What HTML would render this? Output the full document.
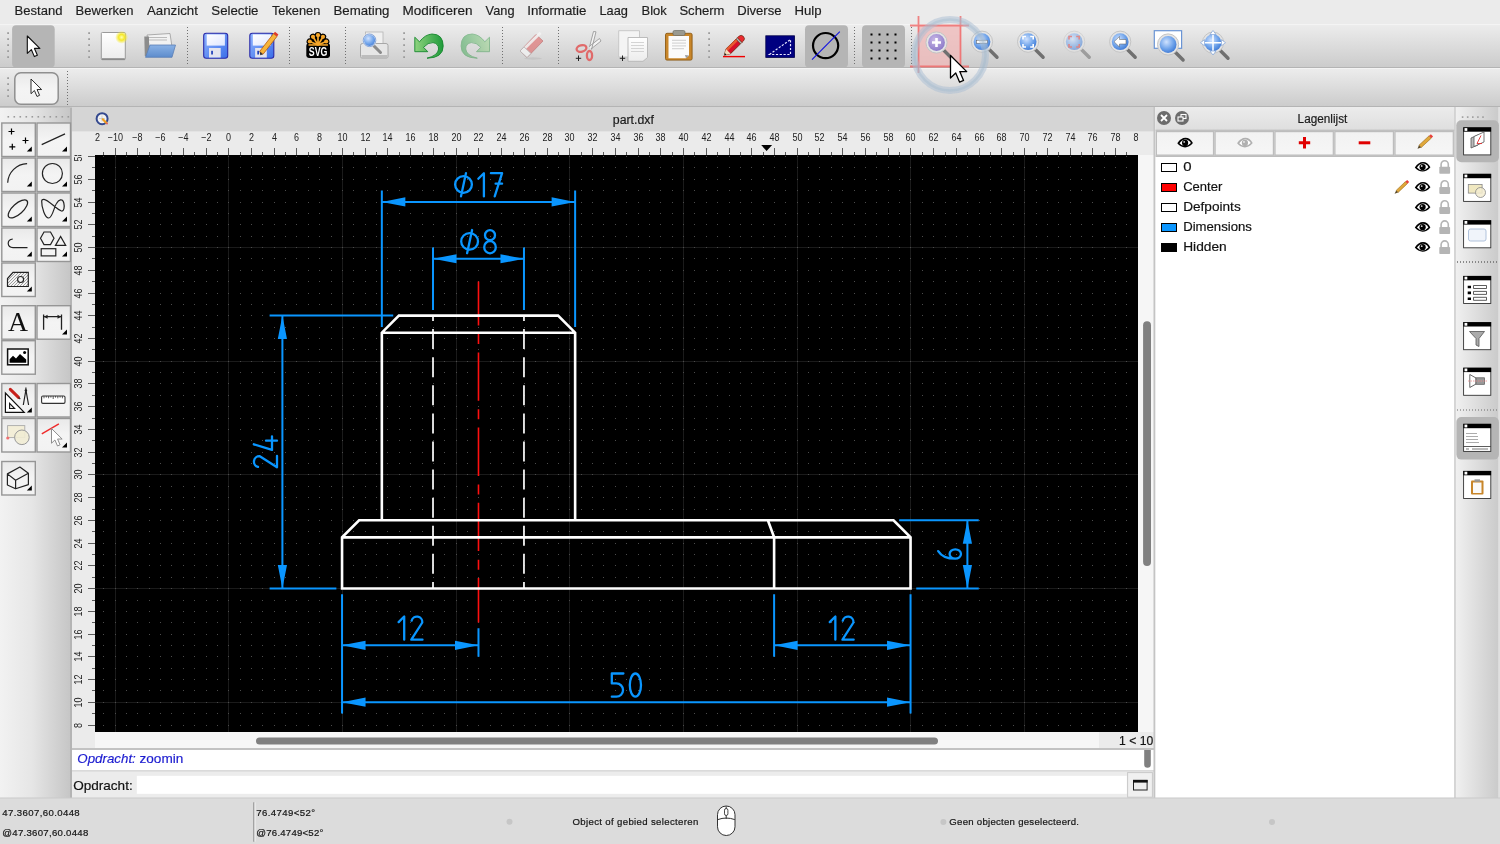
<!DOCTYPE html><html><head><meta charset="utf-8"><style>html,body{margin:0;padding:0;width:1500px;height:844px;overflow:hidden;background:#ececec}svg{display:block;font-family:"Liberation Sans",sans-serif;will-change:transform}</style></head><body>
<svg width="1500" height="844" viewBox="0 0 1500 844">
<defs>
<linearGradient id="tb" x1="0" y1="0" x2="0" y2="1"><stop offset="0" stop-color="#ededed"/><stop offset="1" stop-color="#cbcbcb"/></linearGradient>
<linearGradient id="pal" x1="0" y1="0" x2="1" y2="0"><stop offset="0" stop-color="#f2f2f2"/><stop offset="0.45" stop-color="#e6e6e6"/><stop offset="1" stop-color="#c6c6c6"/></linearGradient>
<linearGradient id="btn" x1="0" y1="0" x2="0" y2="1"><stop offset="0" stop-color="#e9e9e9"/><stop offset="0.5" stop-color="#f4f4f4"/><stop offset="1" stop-color="#f2f2f2"/></linearGradient>
<linearGradient id="lbtn" x1="0" y1="0" x2="0" y2="1"><stop offset="0" stop-color="#f2f2f2"/><stop offset="1" stop-color="#f6f6f6"/></linearGradient>
<linearGradient id="ltitle" x1="0" y1="0" x2="0" y2="1"><stop offset="0" stop-color="#ececec"/><stop offset="1" stop-color="#dedede"/></linearGradient>
<pattern id="dots" x="0" y="0" width="11.355" height="11.355" patternUnits="userSpaceOnUse"><rect x="0" y="0" width="1" height="1" fill="#5a5a5a"/></pattern>
<clipPath id="canvclip"><rect x="95" y="155" width="1043" height="577"/></clipPath>
<clipPath id="hrulclip"><rect x="95" y="131" width="1043" height="24"/></clipPath>
<clipPath id="vrulclip"><rect x="72" y="155" width="23" height="577"/></clipPath>
</defs>
<rect x="0" y="0" width="1500" height="844" fill="#ececec"/>
<rect x="0" y="0" width="1500" height="24" fill="#ebebeb"/>
<text x="14.60" y="15.30" font-size="13.2" fill="#1e1e1e" stroke="#1e1e1e" stroke-width="0.18" textLength="47.90" lengthAdjust="spacingAndGlyphs"  style="">Bestand</text>
<text x="75.60" y="15.30" font-size="13.2" fill="#1e1e1e" stroke="#1e1e1e" stroke-width="0.18" textLength="57.90" lengthAdjust="spacingAndGlyphs"  style="">Bewerken</text>
<text x="146.90" y="15.30" font-size="13.2" fill="#1e1e1e" stroke="#1e1e1e" stroke-width="0.18" textLength="51.00" lengthAdjust="spacingAndGlyphs"  style="">Aanzicht</text>
<text x="211.30" y="15.30" font-size="13.2" fill="#1e1e1e" stroke="#1e1e1e" stroke-width="0.18" textLength="47.20" lengthAdjust="spacingAndGlyphs"  style="">Selectie</text>
<text x="271.90" y="15.30" font-size="13.2" fill="#1e1e1e" stroke="#1e1e1e" stroke-width="0.18" textLength="48.50" lengthAdjust="spacingAndGlyphs"  style="">Tekenen</text>
<text x="333.50" y="15.30" font-size="13.2" fill="#1e1e1e" stroke="#1e1e1e" stroke-width="0.18" textLength="56.00" lengthAdjust="spacingAndGlyphs"  style="">Bemating</text>
<text x="402.50" y="15.30" font-size="13.2" fill="#1e1e1e" stroke="#1e1e1e" stroke-width="0.18" textLength="70.00" lengthAdjust="spacingAndGlyphs"  style="">Modificeren</text>
<text x="485.60" y="15.30" font-size="13.2" fill="#1e1e1e" stroke="#1e1e1e" stroke-width="0.18" textLength="28.90" lengthAdjust="spacingAndGlyphs"  style="">Vang</text>
<text x="527.20" y="15.30" font-size="13.2" fill="#1e1e1e" stroke="#1e1e1e" stroke-width="0.18" textLength="59.20" lengthAdjust="spacingAndGlyphs"  style="">Informatie</text>
<text x="599.50" y="15.30" font-size="13.2" fill="#1e1e1e" stroke="#1e1e1e" stroke-width="0.18" textLength="28.50" lengthAdjust="spacingAndGlyphs"  style="">Laag</text>
<text x="641.50" y="15.30" font-size="13.2" fill="#1e1e1e" stroke="#1e1e1e" stroke-width="0.18" textLength="25.20" lengthAdjust="spacingAndGlyphs"  style="">Blok</text>
<text x="679.40" y="15.30" font-size="13.2" fill="#1e1e1e" stroke="#1e1e1e" stroke-width="0.18" textLength="45.10" lengthAdjust="spacingAndGlyphs"  style="">Scherm</text>
<text x="737.20" y="15.30" font-size="13.2" fill="#1e1e1e" stroke="#1e1e1e" stroke-width="0.18" textLength="44.30" lengthAdjust="spacingAndGlyphs"  style="">Diverse</text>
<text x="794.50" y="15.30" font-size="13.2" fill="#1e1e1e" stroke="#1e1e1e" stroke-width="0.18" textLength="27.10" lengthAdjust="spacingAndGlyphs"  style="">Hulp</text>
<rect x="0" y="24" width="1500" height="44" fill="url(#tb)"/>
<rect x="0" y="24" width="1500" height="1" fill="#f4f4f4"/>
<rect x="0" y="67" width="1500" height="1" fill="#b4b4b4"/>
<rect x="0" y="68" width="1500" height="39" fill="url(#tb)"/>
<rect x="0" y="68" width="1500" height="1" fill="#f4f4f4"/>
<rect x="0" y="106" width="1500" height="1" fill="#b4b4b4"/>
<rect x="72" y="107" width="1082" height="24.6" fill="#d5d5d5"/>
<text x="612.80" y="124.00" font-size="12" fill="#1a1a1a" stroke="#1a1a1a" stroke-width="0.18" textLength="41.10" lengthAdjust="spacingAndGlyphs"  style="">part.dxf</text>
<rect x="72" y="131.6" width="1082" height="23.4" fill="#ebebeb"/>
<rect x="72" y="155" width="23" height="593" fill="#ebebeb"/>
<rect x="1138" y="155" width="16" height="593" fill="#f6f6f6"/>
<rect x="95" y="732" width="1059" height="16" fill="#f6f6f6"/>
<rect x="1099" y="732" width="55" height="16" fill="#ebebeb"/>
<rect x="256" y="737.4" width="682" height="7.2" rx="3.6" fill="#808080"/>
<rect x="1143.1" y="321.3" width="7.9" height="244.7" rx="3.9" fill="#808080"/>
<text x="1119.10" y="744.70" font-size="12" fill="#111" stroke="#111" stroke-width="0.18" textLength="34.10" lengthAdjust="spacingAndGlyphs"  style="">1 &lt; 10</text>
<g clip-path="url(#hrulclip)">
<path d="M80.5,152V155M92.5,148V155M103.5,152V155M115.5,148V155M126.5,152V155M137.5,148V155M149.5,152V155M160.5,148V155M171.5,152V155M183.5,148V155M194.5,152V155M206.5,148V155M217.5,152V155M228.5,148V155M240.5,152V155M251.5,148V155M262.5,152V155M274.5,148V155M285.5,152V155M296.5,148V155M308.5,152V155M319.5,148V155M331.5,152V155M342.5,148V155M353.5,152V155M365.5,148V155M376.5,152V155M387.5,148V155M399.5,152V155M410.5,148V155M422.5,152V155M433.5,148V155M444.5,152V155M456.5,148V155M467.5,152V155M478.5,148V155M490.5,152V155M501.5,148V155M513.5,152V155M524.5,148V155M535.5,152V155M547.5,148V155M558.5,152V155M569.5,148V155M581.5,152V155M592.5,148V155M603.5,152V155M615.5,148V155M626.5,152V155M638.5,148V155M649.5,152V155M660.5,148V155M672.5,152V155M683.5,148V155M694.5,152V155M706.5,148V155M717.5,152V155M729.5,148V155M740.5,152V155M751.5,148V155M763.5,152V155M774.5,148V155M785.5,152V155M797.5,148V155M808.5,152V155M819.5,148V155M831.5,152V155M842.5,148V155M854.5,152V155M865.5,148V155M876.5,152V155M888.5,148V155M899.5,152V155M910.5,148V155M922.5,152V155M933.5,148V155M945.5,152V155M956.5,148V155M967.5,152V155M979.5,148V155M990.5,152V155M1001.5,148V155M1013.5,152V155M1024.5,148V155M1036.5,152V155M1047.5,148V155M1058.5,152V155M1070.5,148V155M1081.5,152V155M1092.5,148V155M1104.5,152V155M1115.5,148V155M1126.5,152V155M1138.5,148V155M1149.5,152V155" stroke="#5c5c5c" stroke-width="1" fill="none"/>
<text x="92.50" y="140.8" font-size="10" fill="#222" text-anchor="middle" textLength="15.27" lengthAdjust="spacingAndGlyphs">−12</text>
<text x="115.50" y="140.8" font-size="10" fill="#222" text-anchor="middle" textLength="15.27" lengthAdjust="spacingAndGlyphs">−10</text>
<text x="137.50" y="140.8" font-size="10" fill="#222" text-anchor="middle" textLength="10.26" lengthAdjust="spacingAndGlyphs">−8</text>
<text x="160.50" y="140.8" font-size="10" fill="#222" text-anchor="middle" textLength="10.26" lengthAdjust="spacingAndGlyphs">−6</text>
<text x="183.50" y="140.8" font-size="10" fill="#222" text-anchor="middle" textLength="10.26" lengthAdjust="spacingAndGlyphs">−4</text>
<text x="206.50" y="140.8" font-size="10" fill="#222" text-anchor="middle" textLength="10.26" lengthAdjust="spacingAndGlyphs">−2</text>
<text x="228.50" y="140.8" font-size="10" fill="#222" text-anchor="middle" textLength="5.00" lengthAdjust="spacingAndGlyphs">0</text>
<text x="251.50" y="140.8" font-size="10" fill="#222" text-anchor="middle" textLength="5.00" lengthAdjust="spacingAndGlyphs">2</text>
<text x="274.50" y="140.8" font-size="10" fill="#222" text-anchor="middle" textLength="5.00" lengthAdjust="spacingAndGlyphs">4</text>
<text x="296.50" y="140.8" font-size="10" fill="#222" text-anchor="middle" textLength="5.00" lengthAdjust="spacingAndGlyphs">6</text>
<text x="319.50" y="140.8" font-size="10" fill="#222" text-anchor="middle" textLength="5.00" lengthAdjust="spacingAndGlyphs">8</text>
<text x="342.50" y="140.8" font-size="10" fill="#222" text-anchor="middle" textLength="10.01" lengthAdjust="spacingAndGlyphs">10</text>
<text x="365.50" y="140.8" font-size="10" fill="#222" text-anchor="middle" textLength="10.01" lengthAdjust="spacingAndGlyphs">12</text>
<text x="387.50" y="140.8" font-size="10" fill="#222" text-anchor="middle" textLength="10.01" lengthAdjust="spacingAndGlyphs">14</text>
<text x="410.50" y="140.8" font-size="10" fill="#222" text-anchor="middle" textLength="10.01" lengthAdjust="spacingAndGlyphs">16</text>
<text x="433.50" y="140.8" font-size="10" fill="#222" text-anchor="middle" textLength="10.01" lengthAdjust="spacingAndGlyphs">18</text>
<text x="456.50" y="140.8" font-size="10" fill="#222" text-anchor="middle" textLength="10.01" lengthAdjust="spacingAndGlyphs">20</text>
<text x="478.50" y="140.8" font-size="10" fill="#222" text-anchor="middle" textLength="10.01" lengthAdjust="spacingAndGlyphs">22</text>
<text x="501.50" y="140.8" font-size="10" fill="#222" text-anchor="middle" textLength="10.01" lengthAdjust="spacingAndGlyphs">24</text>
<text x="524.50" y="140.8" font-size="10" fill="#222" text-anchor="middle" textLength="10.01" lengthAdjust="spacingAndGlyphs">26</text>
<text x="547.50" y="140.8" font-size="10" fill="#222" text-anchor="middle" textLength="10.01" lengthAdjust="spacingAndGlyphs">28</text>
<text x="569.50" y="140.8" font-size="10" fill="#222" text-anchor="middle" textLength="10.01" lengthAdjust="spacingAndGlyphs">30</text>
<text x="592.50" y="140.8" font-size="10" fill="#222" text-anchor="middle" textLength="10.01" lengthAdjust="spacingAndGlyphs">32</text>
<text x="615.50" y="140.8" font-size="10" fill="#222" text-anchor="middle" textLength="10.01" lengthAdjust="spacingAndGlyphs">34</text>
<text x="638.50" y="140.8" font-size="10" fill="#222" text-anchor="middle" textLength="10.01" lengthAdjust="spacingAndGlyphs">36</text>
<text x="660.50" y="140.8" font-size="10" fill="#222" text-anchor="middle" textLength="10.01" lengthAdjust="spacingAndGlyphs">38</text>
<text x="683.50" y="140.8" font-size="10" fill="#222" text-anchor="middle" textLength="10.01" lengthAdjust="spacingAndGlyphs">40</text>
<text x="706.50" y="140.8" font-size="10" fill="#222" text-anchor="middle" textLength="10.01" lengthAdjust="spacingAndGlyphs">42</text>
<text x="729.50" y="140.8" font-size="10" fill="#222" text-anchor="middle" textLength="10.01" lengthAdjust="spacingAndGlyphs">44</text>
<text x="751.50" y="140.8" font-size="10" fill="#222" text-anchor="middle" textLength="10.01" lengthAdjust="spacingAndGlyphs">46</text>
<text x="774.50" y="140.8" font-size="10" fill="#222" text-anchor="middle" textLength="10.01" lengthAdjust="spacingAndGlyphs">48</text>
<text x="797.50" y="140.8" font-size="10" fill="#222" text-anchor="middle" textLength="10.01" lengthAdjust="spacingAndGlyphs">50</text>
<text x="819.50" y="140.8" font-size="10" fill="#222" text-anchor="middle" textLength="10.01" lengthAdjust="spacingAndGlyphs">52</text>
<text x="842.50" y="140.8" font-size="10" fill="#222" text-anchor="middle" textLength="10.01" lengthAdjust="spacingAndGlyphs">54</text>
<text x="865.50" y="140.8" font-size="10" fill="#222" text-anchor="middle" textLength="10.01" lengthAdjust="spacingAndGlyphs">56</text>
<text x="888.50" y="140.8" font-size="10" fill="#222" text-anchor="middle" textLength="10.01" lengthAdjust="spacingAndGlyphs">58</text>
<text x="910.50" y="140.8" font-size="10" fill="#222" text-anchor="middle" textLength="10.01" lengthAdjust="spacingAndGlyphs">60</text>
<text x="933.50" y="140.8" font-size="10" fill="#222" text-anchor="middle" textLength="10.01" lengthAdjust="spacingAndGlyphs">62</text>
<text x="956.50" y="140.8" font-size="10" fill="#222" text-anchor="middle" textLength="10.01" lengthAdjust="spacingAndGlyphs">64</text>
<text x="979.50" y="140.8" font-size="10" fill="#222" text-anchor="middle" textLength="10.01" lengthAdjust="spacingAndGlyphs">66</text>
<text x="1001.50" y="140.8" font-size="10" fill="#222" text-anchor="middle" textLength="10.01" lengthAdjust="spacingAndGlyphs">68</text>
<text x="1024.50" y="140.8" font-size="10" fill="#222" text-anchor="middle" textLength="10.01" lengthAdjust="spacingAndGlyphs">70</text>
<text x="1047.50" y="140.8" font-size="10" fill="#222" text-anchor="middle" textLength="10.01" lengthAdjust="spacingAndGlyphs">72</text>
<text x="1070.50" y="140.8" font-size="10" fill="#222" text-anchor="middle" textLength="10.01" lengthAdjust="spacingAndGlyphs">74</text>
<text x="1092.50" y="140.8" font-size="10" fill="#222" text-anchor="middle" textLength="10.01" lengthAdjust="spacingAndGlyphs">76</text>
<text x="1115.50" y="140.8" font-size="10" fill="#222" text-anchor="middle" textLength="10.01" lengthAdjust="spacingAndGlyphs">78</text>
<text x="1138.50" y="140.8" font-size="10" fill="#222" text-anchor="middle" textLength="10.01" lengthAdjust="spacingAndGlyphs">80</text>
<path d="M761.2,145.1L772.1,145.1L766.6,150.9Z" fill="#000"/>
</g>
<g clip-path="url(#vrulclip)">
<path d="M88,747.5H95M92,736.5H95M88,725.5H95M92,713.5H95M88,702.5H95M92,690.5H95M88,679.5H95M92,668.5H95M88,656.5H95M92,645.5H95M88,634.5H95M92,622.5H95M88,611.5H95M92,600.5H95M88,588.5H95M92,577.5H95M88,565.5H95M92,554.5H95M88,543.5H95M92,531.5H95M88,520.5H95M92,509.5H95M88,497.5H95M92,486.5H95M88,474.5H95M92,463.5H95M88,452.5H95M92,440.5H95M88,429.5H95M92,418.5H95M88,406.5H95M92,395.5H95M88,383.5H95M92,372.5H95M88,361.5H95M92,349.5H95M88,338.5H95M92,327.5H95M88,315.5H95M92,304.5H95M88,293.5H95M92,281.5H95M88,270.5H95M92,258.5H95M88,247.5H95M92,236.5H95M88,224.5H95M92,213.5H95M88,202.5H95M92,190.5H95M88,179.5H95M92,167.5H95M88,156.5H95M92,145.5H95" stroke="#5c5c5c" stroke-width="1" fill="none"/>
<text transform="translate(81.7,747.50) rotate(-90)" x="0" y="0" font-size="10" fill="#222" text-anchor="middle" textLength="5.00" lengthAdjust="spacingAndGlyphs">6</text>
<text transform="translate(81.7,725.50) rotate(-90)" x="0" y="0" font-size="10" fill="#222" text-anchor="middle" textLength="5.00" lengthAdjust="spacingAndGlyphs">8</text>
<text transform="translate(81.7,702.50) rotate(-90)" x="0" y="0" font-size="10" fill="#222" text-anchor="middle" textLength="10.01" lengthAdjust="spacingAndGlyphs">10</text>
<text transform="translate(81.7,679.50) rotate(-90)" x="0" y="0" font-size="10" fill="#222" text-anchor="middle" textLength="10.01" lengthAdjust="spacingAndGlyphs">12</text>
<text transform="translate(81.7,656.50) rotate(-90)" x="0" y="0" font-size="10" fill="#222" text-anchor="middle" textLength="10.01" lengthAdjust="spacingAndGlyphs">14</text>
<text transform="translate(81.7,634.50) rotate(-90)" x="0" y="0" font-size="10" fill="#222" text-anchor="middle" textLength="10.01" lengthAdjust="spacingAndGlyphs">16</text>
<text transform="translate(81.7,611.50) rotate(-90)" x="0" y="0" font-size="10" fill="#222" text-anchor="middle" textLength="10.01" lengthAdjust="spacingAndGlyphs">18</text>
<text transform="translate(81.7,588.50) rotate(-90)" x="0" y="0" font-size="10" fill="#222" text-anchor="middle" textLength="10.01" lengthAdjust="spacingAndGlyphs">20</text>
<text transform="translate(81.7,565.50) rotate(-90)" x="0" y="0" font-size="10" fill="#222" text-anchor="middle" textLength="10.01" lengthAdjust="spacingAndGlyphs">22</text>
<text transform="translate(81.7,543.50) rotate(-90)" x="0" y="0" font-size="10" fill="#222" text-anchor="middle" textLength="10.01" lengthAdjust="spacingAndGlyphs">24</text>
<text transform="translate(81.7,520.50) rotate(-90)" x="0" y="0" font-size="10" fill="#222" text-anchor="middle" textLength="10.01" lengthAdjust="spacingAndGlyphs">26</text>
<text transform="translate(81.7,497.50) rotate(-90)" x="0" y="0" font-size="10" fill="#222" text-anchor="middle" textLength="10.01" lengthAdjust="spacingAndGlyphs">28</text>
<text transform="translate(81.7,474.50) rotate(-90)" x="0" y="0" font-size="10" fill="#222" text-anchor="middle" textLength="10.01" lengthAdjust="spacingAndGlyphs">30</text>
<text transform="translate(81.7,452.50) rotate(-90)" x="0" y="0" font-size="10" fill="#222" text-anchor="middle" textLength="10.01" lengthAdjust="spacingAndGlyphs">32</text>
<text transform="translate(81.7,429.50) rotate(-90)" x="0" y="0" font-size="10" fill="#222" text-anchor="middle" textLength="10.01" lengthAdjust="spacingAndGlyphs">34</text>
<text transform="translate(81.7,406.50) rotate(-90)" x="0" y="0" font-size="10" fill="#222" text-anchor="middle" textLength="10.01" lengthAdjust="spacingAndGlyphs">36</text>
<text transform="translate(81.7,383.50) rotate(-90)" x="0" y="0" font-size="10" fill="#222" text-anchor="middle" textLength="10.01" lengthAdjust="spacingAndGlyphs">38</text>
<text transform="translate(81.7,361.50) rotate(-90)" x="0" y="0" font-size="10" fill="#222" text-anchor="middle" textLength="10.01" lengthAdjust="spacingAndGlyphs">40</text>
<text transform="translate(81.7,338.50) rotate(-90)" x="0" y="0" font-size="10" fill="#222" text-anchor="middle" textLength="10.01" lengthAdjust="spacingAndGlyphs">42</text>
<text transform="translate(81.7,315.50) rotate(-90)" x="0" y="0" font-size="10" fill="#222" text-anchor="middle" textLength="10.01" lengthAdjust="spacingAndGlyphs">44</text>
<text transform="translate(81.7,293.50) rotate(-90)" x="0" y="0" font-size="10" fill="#222" text-anchor="middle" textLength="10.01" lengthAdjust="spacingAndGlyphs">46</text>
<text transform="translate(81.7,270.50) rotate(-90)" x="0" y="0" font-size="10" fill="#222" text-anchor="middle" textLength="10.01" lengthAdjust="spacingAndGlyphs">48</text>
<text transform="translate(81.7,247.50) rotate(-90)" x="0" y="0" font-size="10" fill="#222" text-anchor="middle" textLength="10.01" lengthAdjust="spacingAndGlyphs">50</text>
<text transform="translate(81.7,224.50) rotate(-90)" x="0" y="0" font-size="10" fill="#222" text-anchor="middle" textLength="10.01" lengthAdjust="spacingAndGlyphs">52</text>
<text transform="translate(81.7,202.50) rotate(-90)" x="0" y="0" font-size="10" fill="#222" text-anchor="middle" textLength="10.01" lengthAdjust="spacingAndGlyphs">54</text>
<text transform="translate(81.7,179.50) rotate(-90)" x="0" y="0" font-size="10" fill="#222" text-anchor="middle" textLength="10.01" lengthAdjust="spacingAndGlyphs">56</text>
<text transform="translate(81.7,156.50) rotate(-90)" x="0" y="0" font-size="10" fill="#222" text-anchor="middle" textLength="10.01" lengthAdjust="spacingAndGlyphs">58</text>
</g>
<g clip-path="url(#canvclip)">
<rect x="95" y="155" width="1043" height="577" fill="#000"/>
<path d="M115.5,155V732M228.5,155V732M342.5,155V732M456.5,155V732M569.5,155V732M683.5,155V732M797.5,155V732M910.5,155V732M1024.5,155V732M1138.5,155V732M95,702.5H1138M95,588.5H1138M95,474.5H1138M95,361.5H1138M95,247.5H1138" stroke="#1b1b1b" stroke-width="1" fill="none"/>
<path d="M103,725h1v1h-1zM103,713h1v1h-1zM103,702h1v1h-1zM103,690h1v1h-1zM103,679h1v1h-1zM103,668h1v1h-1zM103,656h1v1h-1zM103,645h1v1h-1zM103,634h1v1h-1zM103,622h1v1h-1zM103,611h1v1h-1zM103,600h1v1h-1zM103,588h1v1h-1zM103,577h1v1h-1zM103,565h1v1h-1zM103,554h1v1h-1zM103,543h1v1h-1zM103,531h1v1h-1zM103,520h1v1h-1zM103,509h1v1h-1zM103,497h1v1h-1zM103,486h1v1h-1zM103,474h1v1h-1zM103,463h1v1h-1zM103,452h1v1h-1zM103,440h1v1h-1zM103,429h1v1h-1zM103,418h1v1h-1zM103,406h1v1h-1zM103,395h1v1h-1zM103,383h1v1h-1zM103,372h1v1h-1zM103,361h1v1h-1zM103,349h1v1h-1zM103,338h1v1h-1zM103,327h1v1h-1zM103,315h1v1h-1zM103,304h1v1h-1zM103,293h1v1h-1zM103,281h1v1h-1zM103,270h1v1h-1zM103,258h1v1h-1zM103,247h1v1h-1zM103,236h1v1h-1zM103,224h1v1h-1zM103,213h1v1h-1zM103,202h1v1h-1zM103,190h1v1h-1zM103,179h1v1h-1zM103,167h1v1h-1zM103,156h1v1h-1zM115,725h1v1h-1zM115,713h1v1h-1zM115,702h1v1h-1zM115,690h1v1h-1zM115,679h1v1h-1zM115,668h1v1h-1zM115,656h1v1h-1zM115,645h1v1h-1zM115,634h1v1h-1zM115,622h1v1h-1zM115,611h1v1h-1zM115,600h1v1h-1zM115,588h1v1h-1zM115,577h1v1h-1zM115,565h1v1h-1zM115,554h1v1h-1zM115,543h1v1h-1zM115,531h1v1h-1zM115,520h1v1h-1zM115,509h1v1h-1zM115,497h1v1h-1zM115,486h1v1h-1zM115,474h1v1h-1zM115,463h1v1h-1zM115,452h1v1h-1zM115,440h1v1h-1zM115,429h1v1h-1zM115,418h1v1h-1zM115,406h1v1h-1zM115,395h1v1h-1zM115,383h1v1h-1zM115,372h1v1h-1zM115,361h1v1h-1zM115,349h1v1h-1zM115,338h1v1h-1zM115,327h1v1h-1zM115,315h1v1h-1zM115,304h1v1h-1zM115,293h1v1h-1zM115,281h1v1h-1zM115,270h1v1h-1zM115,258h1v1h-1zM115,247h1v1h-1zM115,236h1v1h-1zM115,224h1v1h-1zM115,213h1v1h-1zM115,202h1v1h-1zM115,190h1v1h-1zM115,179h1v1h-1zM115,167h1v1h-1zM115,156h1v1h-1zM126,725h1v1h-1zM126,713h1v1h-1zM126,702h1v1h-1zM126,690h1v1h-1zM126,679h1v1h-1zM126,668h1v1h-1zM126,656h1v1h-1zM126,645h1v1h-1zM126,634h1v1h-1zM126,622h1v1h-1zM126,611h1v1h-1zM126,600h1v1h-1zM126,588h1v1h-1zM126,577h1v1h-1zM126,565h1v1h-1zM126,554h1v1h-1zM126,543h1v1h-1zM126,531h1v1h-1zM126,520h1v1h-1zM126,509h1v1h-1zM126,497h1v1h-1zM126,486h1v1h-1zM126,474h1v1h-1zM126,463h1v1h-1zM126,452h1v1h-1zM126,440h1v1h-1zM126,429h1v1h-1zM126,418h1v1h-1zM126,406h1v1h-1zM126,395h1v1h-1zM126,383h1v1h-1zM126,372h1v1h-1zM126,361h1v1h-1zM126,349h1v1h-1zM126,338h1v1h-1zM126,327h1v1h-1zM126,315h1v1h-1zM126,304h1v1h-1zM126,293h1v1h-1zM126,281h1v1h-1zM126,270h1v1h-1zM126,258h1v1h-1zM126,247h1v1h-1zM126,236h1v1h-1zM126,224h1v1h-1zM126,213h1v1h-1zM126,202h1v1h-1zM126,190h1v1h-1zM126,179h1v1h-1zM126,167h1v1h-1zM126,156h1v1h-1zM137,725h1v1h-1zM137,713h1v1h-1zM137,702h1v1h-1zM137,690h1v1h-1zM137,679h1v1h-1zM137,668h1v1h-1zM137,656h1v1h-1zM137,645h1v1h-1zM137,634h1v1h-1zM137,622h1v1h-1zM137,611h1v1h-1zM137,600h1v1h-1zM137,588h1v1h-1zM137,577h1v1h-1zM137,565h1v1h-1zM137,554h1v1h-1zM137,543h1v1h-1zM137,531h1v1h-1zM137,520h1v1h-1zM137,509h1v1h-1zM137,497h1v1h-1zM137,486h1v1h-1zM137,474h1v1h-1zM137,463h1v1h-1zM137,452h1v1h-1zM137,440h1v1h-1zM137,429h1v1h-1zM137,418h1v1h-1zM137,406h1v1h-1zM137,395h1v1h-1zM137,383h1v1h-1zM137,372h1v1h-1zM137,361h1v1h-1zM137,349h1v1h-1zM137,338h1v1h-1zM137,327h1v1h-1zM137,315h1v1h-1zM137,304h1v1h-1zM137,293h1v1h-1zM137,281h1v1h-1zM137,270h1v1h-1zM137,258h1v1h-1zM137,247h1v1h-1zM137,236h1v1h-1zM137,224h1v1h-1zM137,213h1v1h-1zM137,202h1v1h-1zM137,190h1v1h-1zM137,179h1v1h-1zM137,167h1v1h-1zM137,156h1v1h-1zM149,725h1v1h-1zM149,713h1v1h-1zM149,702h1v1h-1zM149,690h1v1h-1zM149,679h1v1h-1zM149,668h1v1h-1zM149,656h1v1h-1zM149,645h1v1h-1zM149,634h1v1h-1zM149,622h1v1h-1zM149,611h1v1h-1zM149,600h1v1h-1zM149,588h1v1h-1zM149,577h1v1h-1zM149,565h1v1h-1zM149,554h1v1h-1zM149,543h1v1h-1zM149,531h1v1h-1zM149,520h1v1h-1zM149,509h1v1h-1zM149,497h1v1h-1zM149,486h1v1h-1zM149,474h1v1h-1zM149,463h1v1h-1zM149,452h1v1h-1zM149,440h1v1h-1zM149,429h1v1h-1zM149,418h1v1h-1zM149,406h1v1h-1zM149,395h1v1h-1zM149,383h1v1h-1zM149,372h1v1h-1zM149,361h1v1h-1zM149,349h1v1h-1zM149,338h1v1h-1zM149,327h1v1h-1zM149,315h1v1h-1zM149,304h1v1h-1zM149,293h1v1h-1zM149,281h1v1h-1zM149,270h1v1h-1zM149,258h1v1h-1zM149,247h1v1h-1zM149,236h1v1h-1zM149,224h1v1h-1zM149,213h1v1h-1zM149,202h1v1h-1zM149,190h1v1h-1zM149,179h1v1h-1zM149,167h1v1h-1zM149,156h1v1h-1zM160,725h1v1h-1zM160,713h1v1h-1zM160,702h1v1h-1zM160,690h1v1h-1zM160,679h1v1h-1zM160,668h1v1h-1zM160,656h1v1h-1zM160,645h1v1h-1zM160,634h1v1h-1zM160,622h1v1h-1zM160,611h1v1h-1zM160,600h1v1h-1zM160,588h1v1h-1zM160,577h1v1h-1zM160,565h1v1h-1zM160,554h1v1h-1zM160,543h1v1h-1zM160,531h1v1h-1zM160,520h1v1h-1zM160,509h1v1h-1zM160,497h1v1h-1zM160,486h1v1h-1zM160,474h1v1h-1zM160,463h1v1h-1zM160,452h1v1h-1zM160,440h1v1h-1zM160,429h1v1h-1zM160,418h1v1h-1zM160,406h1v1h-1zM160,395h1v1h-1zM160,383h1v1h-1zM160,372h1v1h-1zM160,361h1v1h-1zM160,349h1v1h-1zM160,338h1v1h-1zM160,327h1v1h-1zM160,315h1v1h-1zM160,304h1v1h-1zM160,293h1v1h-1zM160,281h1v1h-1zM160,270h1v1h-1zM160,258h1v1h-1zM160,247h1v1h-1zM160,236h1v1h-1zM160,224h1v1h-1zM160,213h1v1h-1zM160,202h1v1h-1zM160,190h1v1h-1zM160,179h1v1h-1zM160,167h1v1h-1zM160,156h1v1h-1zM171,725h1v1h-1zM171,713h1v1h-1zM171,702h1v1h-1zM171,690h1v1h-1zM171,679h1v1h-1zM171,668h1v1h-1zM171,656h1v1h-1zM171,645h1v1h-1zM171,634h1v1h-1zM171,622h1v1h-1zM171,611h1v1h-1zM171,600h1v1h-1zM171,588h1v1h-1zM171,577h1v1h-1zM171,565h1v1h-1zM171,554h1v1h-1zM171,543h1v1h-1zM171,531h1v1h-1zM171,520h1v1h-1zM171,509h1v1h-1zM171,497h1v1h-1zM171,486h1v1h-1zM171,474h1v1h-1zM171,463h1v1h-1zM171,452h1v1h-1zM171,440h1v1h-1zM171,429h1v1h-1zM171,418h1v1h-1zM171,406h1v1h-1zM171,395h1v1h-1zM171,383h1v1h-1zM171,372h1v1h-1zM171,361h1v1h-1zM171,349h1v1h-1zM171,338h1v1h-1zM171,327h1v1h-1zM171,315h1v1h-1zM171,304h1v1h-1zM171,293h1v1h-1zM171,281h1v1h-1zM171,270h1v1h-1zM171,258h1v1h-1zM171,247h1v1h-1zM171,236h1v1h-1zM171,224h1v1h-1zM171,213h1v1h-1zM171,202h1v1h-1zM171,190h1v1h-1zM171,179h1v1h-1zM171,167h1v1h-1zM171,156h1v1h-1zM183,725h1v1h-1zM183,713h1v1h-1zM183,702h1v1h-1zM183,690h1v1h-1zM183,679h1v1h-1zM183,668h1v1h-1zM183,656h1v1h-1zM183,645h1v1h-1zM183,634h1v1h-1zM183,622h1v1h-1zM183,611h1v1h-1zM183,600h1v1h-1zM183,588h1v1h-1zM183,577h1v1h-1zM183,565h1v1h-1zM183,554h1v1h-1zM183,543h1v1h-1zM183,531h1v1h-1zM183,520h1v1h-1zM183,509h1v1h-1zM183,497h1v1h-1zM183,486h1v1h-1zM183,474h1v1h-1zM183,463h1v1h-1zM183,452h1v1h-1zM183,440h1v1h-1zM183,429h1v1h-1zM183,418h1v1h-1zM183,406h1v1h-1zM183,395h1v1h-1zM183,383h1v1h-1zM183,372h1v1h-1zM183,361h1v1h-1zM183,349h1v1h-1zM183,338h1v1h-1zM183,327h1v1h-1zM183,315h1v1h-1zM183,304h1v1h-1zM183,293h1v1h-1zM183,281h1v1h-1zM183,270h1v1h-1zM183,258h1v1h-1zM183,247h1v1h-1zM183,236h1v1h-1zM183,224h1v1h-1zM183,213h1v1h-1zM183,202h1v1h-1zM183,190h1v1h-1zM183,179h1v1h-1zM183,167h1v1h-1zM183,156h1v1h-1zM194,725h1v1h-1zM194,713h1v1h-1zM194,702h1v1h-1zM194,690h1v1h-1zM194,679h1v1h-1zM194,668h1v1h-1zM194,656h1v1h-1zM194,645h1v1h-1zM194,634h1v1h-1zM194,622h1v1h-1zM194,611h1v1h-1zM194,600h1v1h-1zM194,588h1v1h-1zM194,577h1v1h-1zM194,565h1v1h-1zM194,554h1v1h-1zM194,543h1v1h-1zM194,531h1v1h-1zM194,520h1v1h-1zM194,509h1v1h-1zM194,497h1v1h-1zM194,486h1v1h-1zM194,474h1v1h-1zM194,463h1v1h-1zM194,452h1v1h-1zM194,440h1v1h-1zM194,429h1v1h-1zM194,418h1v1h-1zM194,406h1v1h-1zM194,395h1v1h-1zM194,383h1v1h-1zM194,372h1v1h-1zM194,361h1v1h-1zM194,349h1v1h-1zM194,338h1v1h-1zM194,327h1v1h-1zM194,315h1v1h-1zM194,304h1v1h-1zM194,293h1v1h-1zM194,281h1v1h-1zM194,270h1v1h-1zM194,258h1v1h-1zM194,247h1v1h-1zM194,236h1v1h-1zM194,224h1v1h-1zM194,213h1v1h-1zM194,202h1v1h-1zM194,190h1v1h-1zM194,179h1v1h-1zM194,167h1v1h-1zM194,156h1v1h-1zM206,725h1v1h-1zM206,713h1v1h-1zM206,702h1v1h-1zM206,690h1v1h-1zM206,679h1v1h-1zM206,668h1v1h-1zM206,656h1v1h-1zM206,645h1v1h-1zM206,634h1v1h-1zM206,622h1v1h-1zM206,611h1v1h-1zM206,600h1v1h-1zM206,588h1v1h-1zM206,577h1v1h-1zM206,565h1v1h-1zM206,554h1v1h-1zM206,543h1v1h-1zM206,531h1v1h-1zM206,520h1v1h-1zM206,509h1v1h-1zM206,497h1v1h-1zM206,486h1v1h-1zM206,474h1v1h-1zM206,463h1v1h-1zM206,452h1v1h-1zM206,440h1v1h-1zM206,429h1v1h-1zM206,418h1v1h-1zM206,406h1v1h-1zM206,395h1v1h-1zM206,383h1v1h-1zM206,372h1v1h-1zM206,361h1v1h-1zM206,349h1v1h-1zM206,338h1v1h-1zM206,327h1v1h-1zM206,315h1v1h-1zM206,304h1v1h-1zM206,293h1v1h-1zM206,281h1v1h-1zM206,270h1v1h-1zM206,258h1v1h-1zM206,247h1v1h-1zM206,236h1v1h-1zM206,224h1v1h-1zM206,213h1v1h-1zM206,202h1v1h-1zM206,190h1v1h-1zM206,179h1v1h-1zM206,167h1v1h-1zM206,156h1v1h-1zM217,725h1v1h-1zM217,713h1v1h-1zM217,702h1v1h-1zM217,690h1v1h-1zM217,679h1v1h-1zM217,668h1v1h-1zM217,656h1v1h-1zM217,645h1v1h-1zM217,634h1v1h-1zM217,622h1v1h-1zM217,611h1v1h-1zM217,600h1v1h-1zM217,588h1v1h-1zM217,577h1v1h-1zM217,565h1v1h-1zM217,554h1v1h-1zM217,543h1v1h-1zM217,531h1v1h-1zM217,520h1v1h-1zM217,509h1v1h-1zM217,497h1v1h-1zM217,486h1v1h-1zM217,474h1v1h-1zM217,463h1v1h-1zM217,452h1v1h-1zM217,440h1v1h-1zM217,429h1v1h-1zM217,418h1v1h-1zM217,406h1v1h-1zM217,395h1v1h-1zM217,383h1v1h-1zM217,372h1v1h-1zM217,361h1v1h-1zM217,349h1v1h-1zM217,338h1v1h-1zM217,327h1v1h-1zM217,315h1v1h-1zM217,304h1v1h-1zM217,293h1v1h-1zM217,281h1v1h-1zM217,270h1v1h-1zM217,258h1v1h-1zM217,247h1v1h-1zM217,236h1v1h-1zM217,224h1v1h-1zM217,213h1v1h-1zM217,202h1v1h-1zM217,190h1v1h-1zM217,179h1v1h-1zM217,167h1v1h-1zM217,156h1v1h-1zM228,725h1v1h-1zM228,713h1v1h-1zM228,702h1v1h-1zM228,690h1v1h-1zM228,679h1v1h-1zM228,668h1v1h-1zM228,656h1v1h-1zM228,645h1v1h-1zM228,634h1v1h-1zM228,622h1v1h-1zM228,611h1v1h-1zM228,600h1v1h-1zM228,588h1v1h-1zM228,577h1v1h-1zM228,565h1v1h-1zM228,554h1v1h-1zM228,543h1v1h-1zM228,531h1v1h-1zM228,520h1v1h-1zM228,509h1v1h-1zM228,497h1v1h-1zM228,486h1v1h-1zM228,474h1v1h-1zM228,463h1v1h-1zM228,452h1v1h-1zM228,440h1v1h-1zM228,429h1v1h-1zM228,418h1v1h-1zM228,406h1v1h-1zM228,395h1v1h-1zM228,383h1v1h-1zM228,372h1v1h-1zM228,361h1v1h-1zM228,349h1v1h-1zM228,338h1v1h-1zM228,327h1v1h-1zM228,315h1v1h-1zM228,304h1v1h-1zM228,293h1v1h-1zM228,281h1v1h-1zM228,270h1v1h-1zM228,258h1v1h-1zM228,247h1v1h-1zM228,236h1v1h-1zM228,224h1v1h-1zM228,213h1v1h-1zM228,202h1v1h-1zM228,190h1v1h-1zM228,179h1v1h-1zM228,167h1v1h-1zM228,156h1v1h-1zM240,725h1v1h-1zM240,713h1v1h-1zM240,702h1v1h-1zM240,690h1v1h-1zM240,679h1v1h-1zM240,668h1v1h-1zM240,656h1v1h-1zM240,645h1v1h-1zM240,634h1v1h-1zM240,622h1v1h-1zM240,611h1v1h-1zM240,600h1v1h-1zM240,588h1v1h-1zM240,577h1v1h-1zM240,565h1v1h-1zM240,554h1v1h-1zM240,543h1v1h-1zM240,531h1v1h-1zM240,520h1v1h-1zM240,509h1v1h-1zM240,497h1v1h-1zM240,486h1v1h-1zM240,474h1v1h-1zM240,463h1v1h-1zM240,452h1v1h-1zM240,440h1v1h-1zM240,429h1v1h-1zM240,418h1v1h-1zM240,406h1v1h-1zM240,395h1v1h-1zM240,383h1v1h-1zM240,372h1v1h-1zM240,361h1v1h-1zM240,349h1v1h-1zM240,338h1v1h-1zM240,327h1v1h-1zM240,315h1v1h-1zM240,304h1v1h-1zM240,293h1v1h-1zM240,281h1v1h-1zM240,270h1v1h-1zM240,258h1v1h-1zM240,247h1v1h-1zM240,236h1v1h-1zM240,224h1v1h-1zM240,213h1v1h-1zM240,202h1v1h-1zM240,190h1v1h-1zM240,179h1v1h-1zM240,167h1v1h-1zM240,156h1v1h-1zM251,725h1v1h-1zM251,713h1v1h-1zM251,702h1v1h-1zM251,690h1v1h-1zM251,679h1v1h-1zM251,668h1v1h-1zM251,656h1v1h-1zM251,645h1v1h-1zM251,634h1v1h-1zM251,622h1v1h-1zM251,611h1v1h-1zM251,600h1v1h-1zM251,588h1v1h-1zM251,577h1v1h-1zM251,565h1v1h-1zM251,554h1v1h-1zM251,543h1v1h-1zM251,531h1v1h-1zM251,520h1v1h-1zM251,509h1v1h-1zM251,497h1v1h-1zM251,486h1v1h-1zM251,474h1v1h-1zM251,463h1v1h-1zM251,452h1v1h-1zM251,440h1v1h-1zM251,429h1v1h-1zM251,418h1v1h-1zM251,406h1v1h-1zM251,395h1v1h-1zM251,383h1v1h-1zM251,372h1v1h-1zM251,361h1v1h-1zM251,349h1v1h-1zM251,338h1v1h-1zM251,327h1v1h-1zM251,315h1v1h-1zM251,304h1v1h-1zM251,293h1v1h-1zM251,281h1v1h-1zM251,270h1v1h-1zM251,258h1v1h-1zM251,247h1v1h-1zM251,236h1v1h-1zM251,224h1v1h-1zM251,213h1v1h-1zM251,202h1v1h-1zM251,190h1v1h-1zM251,179h1v1h-1zM251,167h1v1h-1zM251,156h1v1h-1zM262,725h1v1h-1zM262,713h1v1h-1zM262,702h1v1h-1zM262,690h1v1h-1zM262,679h1v1h-1zM262,668h1v1h-1zM262,656h1v1h-1zM262,645h1v1h-1zM262,634h1v1h-1zM262,622h1v1h-1zM262,611h1v1h-1zM262,600h1v1h-1zM262,588h1v1h-1zM262,577h1v1h-1zM262,565h1v1h-1zM262,554h1v1h-1zM262,543h1v1h-1zM262,531h1v1h-1zM262,520h1v1h-1zM262,509h1v1h-1zM262,497h1v1h-1zM262,486h1v1h-1zM262,474h1v1h-1zM262,463h1v1h-1zM262,452h1v1h-1zM262,440h1v1h-1zM262,429h1v1h-1zM262,418h1v1h-1zM262,406h1v1h-1zM262,395h1v1h-1zM262,383h1v1h-1zM262,372h1v1h-1zM262,361h1v1h-1zM262,349h1v1h-1zM262,338h1v1h-1zM262,327h1v1h-1zM262,315h1v1h-1zM262,304h1v1h-1zM262,293h1v1h-1zM262,281h1v1h-1zM262,270h1v1h-1zM262,258h1v1h-1zM262,247h1v1h-1zM262,236h1v1h-1zM262,224h1v1h-1zM262,213h1v1h-1zM262,202h1v1h-1zM262,190h1v1h-1zM262,179h1v1h-1zM262,167h1v1h-1zM262,156h1v1h-1zM274,725h1v1h-1zM274,713h1v1h-1zM274,702h1v1h-1zM274,690h1v1h-1zM274,679h1v1h-1zM274,668h1v1h-1zM274,656h1v1h-1zM274,645h1v1h-1zM274,634h1v1h-1zM274,622h1v1h-1zM274,611h1v1h-1zM274,600h1v1h-1zM274,588h1v1h-1zM274,577h1v1h-1zM274,565h1v1h-1zM274,554h1v1h-1zM274,543h1v1h-1zM274,531h1v1h-1zM274,520h1v1h-1zM274,509h1v1h-1zM274,497h1v1h-1zM274,486h1v1h-1zM274,474h1v1h-1zM274,463h1v1h-1zM274,452h1v1h-1zM274,440h1v1h-1zM274,429h1v1h-1zM274,418h1v1h-1zM274,406h1v1h-1zM274,395h1v1h-1zM274,383h1v1h-1zM274,372h1v1h-1zM274,361h1v1h-1zM274,349h1v1h-1zM274,338h1v1h-1zM274,327h1v1h-1zM274,315h1v1h-1zM274,304h1v1h-1zM274,293h1v1h-1zM274,281h1v1h-1zM274,270h1v1h-1zM274,258h1v1h-1zM274,247h1v1h-1zM274,236h1v1h-1zM274,224h1v1h-1zM274,213h1v1h-1zM274,202h1v1h-1zM274,190h1v1h-1zM274,179h1v1h-1zM274,167h1v1h-1zM274,156h1v1h-1zM285,725h1v1h-1zM285,713h1v1h-1zM285,702h1v1h-1zM285,690h1v1h-1zM285,679h1v1h-1zM285,668h1v1h-1zM285,656h1v1h-1zM285,645h1v1h-1zM285,634h1v1h-1zM285,622h1v1h-1zM285,611h1v1h-1zM285,600h1v1h-1zM285,588h1v1h-1zM285,577h1v1h-1zM285,565h1v1h-1zM285,554h1v1h-1zM285,543h1v1h-1zM285,531h1v1h-1zM285,520h1v1h-1zM285,509h1v1h-1zM285,497h1v1h-1zM285,486h1v1h-1zM285,474h1v1h-1zM285,463h1v1h-1zM285,452h1v1h-1zM285,440h1v1h-1zM285,429h1v1h-1zM285,418h1v1h-1zM285,406h1v1h-1zM285,395h1v1h-1zM285,383h1v1h-1zM285,372h1v1h-1zM285,361h1v1h-1zM285,349h1v1h-1zM285,338h1v1h-1zM285,327h1v1h-1zM285,315h1v1h-1zM285,304h1v1h-1zM285,293h1v1h-1zM285,281h1v1h-1zM285,270h1v1h-1zM285,258h1v1h-1zM285,247h1v1h-1zM285,236h1v1h-1zM285,224h1v1h-1zM285,213h1v1h-1zM285,202h1v1h-1zM285,190h1v1h-1zM285,179h1v1h-1zM285,167h1v1h-1zM285,156h1v1h-1zM296,725h1v1h-1zM296,713h1v1h-1zM296,702h1v1h-1zM296,690h1v1h-1zM296,679h1v1h-1zM296,668h1v1h-1zM296,656h1v1h-1zM296,645h1v1h-1zM296,634h1v1h-1zM296,622h1v1h-1zM296,611h1v1h-1zM296,600h1v1h-1zM296,588h1v1h-1zM296,577h1v1h-1zM296,565h1v1h-1zM296,554h1v1h-1zM296,543h1v1h-1zM296,531h1v1h-1zM296,520h1v1h-1zM296,509h1v1h-1zM296,497h1v1h-1zM296,486h1v1h-1zM296,474h1v1h-1zM296,463h1v1h-1zM296,452h1v1h-1zM296,440h1v1h-1zM296,429h1v1h-1zM296,418h1v1h-1zM296,406h1v1h-1zM296,395h1v1h-1zM296,383h1v1h-1zM296,372h1v1h-1zM296,361h1v1h-1zM296,349h1v1h-1zM296,338h1v1h-1zM296,327h1v1h-1zM296,315h1v1h-1zM296,304h1v1h-1zM296,293h1v1h-1zM296,281h1v1h-1zM296,270h1v1h-1zM296,258h1v1h-1zM296,247h1v1h-1zM296,236h1v1h-1zM296,224h1v1h-1zM296,213h1v1h-1zM296,202h1v1h-1zM296,190h1v1h-1zM296,179h1v1h-1zM296,167h1v1h-1zM296,156h1v1h-1zM308,725h1v1h-1zM308,713h1v1h-1zM308,702h1v1h-1zM308,690h1v1h-1zM308,679h1v1h-1zM308,668h1v1h-1zM308,656h1v1h-1zM308,645h1v1h-1zM308,634h1v1h-1zM308,622h1v1h-1zM308,611h1v1h-1zM308,600h1v1h-1zM308,588h1v1h-1zM308,577h1v1h-1zM308,565h1v1h-1zM308,554h1v1h-1zM308,543h1v1h-1zM308,531h1v1h-1zM308,520h1v1h-1zM308,509h1v1h-1zM308,497h1v1h-1zM308,486h1v1h-1zM308,474h1v1h-1zM308,463h1v1h-1zM308,452h1v1h-1zM308,440h1v1h-1zM308,429h1v1h-1zM308,418h1v1h-1zM308,406h1v1h-1zM308,395h1v1h-1zM308,383h1v1h-1zM308,372h1v1h-1zM308,361h1v1h-1zM308,349h1v1h-1zM308,338h1v1h-1zM308,327h1v1h-1zM308,315h1v1h-1zM308,304h1v1h-1zM308,293h1v1h-1zM308,281h1v1h-1zM308,270h1v1h-1zM308,258h1v1h-1zM308,247h1v1h-1zM308,236h1v1h-1zM308,224h1v1h-1zM308,213h1v1h-1zM308,202h1v1h-1zM308,190h1v1h-1zM308,179h1v1h-1zM308,167h1v1h-1zM308,156h1v1h-1zM319,725h1v1h-1zM319,713h1v1h-1zM319,702h1v1h-1zM319,690h1v1h-1zM319,679h1v1h-1zM319,668h1v1h-1zM319,656h1v1h-1zM319,645h1v1h-1zM319,634h1v1h-1zM319,622h1v1h-1zM319,611h1v1h-1zM319,600h1v1h-1zM319,588h1v1h-1zM319,577h1v1h-1zM319,565h1v1h-1zM319,554h1v1h-1zM319,543h1v1h-1zM319,531h1v1h-1zM319,520h1v1h-1zM319,509h1v1h-1zM319,497h1v1h-1zM319,486h1v1h-1zM319,474h1v1h-1zM319,463h1v1h-1zM319,452h1v1h-1zM319,440h1v1h-1zM319,429h1v1h-1zM319,418h1v1h-1zM319,406h1v1h-1zM319,395h1v1h-1zM319,383h1v1h-1zM319,372h1v1h-1zM319,361h1v1h-1zM319,349h1v1h-1zM319,338h1v1h-1zM319,327h1v1h-1zM319,315h1v1h-1zM319,304h1v1h-1zM319,293h1v1h-1zM319,281h1v1h-1zM319,270h1v1h-1zM319,258h1v1h-1zM319,247h1v1h-1zM319,236h1v1h-1zM319,224h1v1h-1zM319,213h1v1h-1zM319,202h1v1h-1zM319,190h1v1h-1zM319,179h1v1h-1zM319,167h1v1h-1zM319,156h1v1h-1zM331,725h1v1h-1zM331,713h1v1h-1zM331,702h1v1h-1zM331,690h1v1h-1zM331,679h1v1h-1zM331,668h1v1h-1zM331,656h1v1h-1zM331,645h1v1h-1zM331,634h1v1h-1zM331,622h1v1h-1zM331,611h1v1h-1zM331,600h1v1h-1zM331,588h1v1h-1zM331,577h1v1h-1zM331,565h1v1h-1zM331,554h1v1h-1zM331,543h1v1h-1zM331,531h1v1h-1zM331,520h1v1h-1zM331,509h1v1h-1zM331,497h1v1h-1zM331,486h1v1h-1zM331,474h1v1h-1zM331,463h1v1h-1zM331,452h1v1h-1zM331,440h1v1h-1zM331,429h1v1h-1zM331,418h1v1h-1zM331,406h1v1h-1zM331,395h1v1h-1zM331,383h1v1h-1zM331,372h1v1h-1zM331,361h1v1h-1zM331,349h1v1h-1zM331,338h1v1h-1zM331,327h1v1h-1zM331,315h1v1h-1zM331,304h1v1h-1zM331,293h1v1h-1zM331,281h1v1h-1zM331,270h1v1h-1zM331,258h1v1h-1zM331,247h1v1h-1zM331,236h1v1h-1zM331,224h1v1h-1zM331,213h1v1h-1zM331,202h1v1h-1zM331,190h1v1h-1zM331,179h1v1h-1zM331,167h1v1h-1zM331,156h1v1h-1zM342,725h1v1h-1zM342,713h1v1h-1zM342,702h1v1h-1zM342,690h1v1h-1zM342,679h1v1h-1zM342,668h1v1h-1zM342,656h1v1h-1zM342,645h1v1h-1zM342,634h1v1h-1zM342,622h1v1h-1zM342,611h1v1h-1zM342,600h1v1h-1zM342,588h1v1h-1zM342,577h1v1h-1zM342,565h1v1h-1zM342,554h1v1h-1zM342,543h1v1h-1zM342,531h1v1h-1zM342,520h1v1h-1zM342,509h1v1h-1zM342,497h1v1h-1zM342,486h1v1h-1zM342,474h1v1h-1zM342,463h1v1h-1zM342,452h1v1h-1zM342,440h1v1h-1zM342,429h1v1h-1zM342,418h1v1h-1zM342,406h1v1h-1zM342,395h1v1h-1zM342,383h1v1h-1zM342,372h1v1h-1zM342,361h1v1h-1zM342,349h1v1h-1zM342,338h1v1h-1zM342,327h1v1h-1zM342,315h1v1h-1zM342,304h1v1h-1zM342,293h1v1h-1zM342,281h1v1h-1zM342,270h1v1h-1zM342,258h1v1h-1zM342,247h1v1h-1zM342,236h1v1h-1zM342,224h1v1h-1zM342,213h1v1h-1zM342,202h1v1h-1zM342,190h1v1h-1zM342,179h1v1h-1zM342,167h1v1h-1zM342,156h1v1h-1zM353,725h1v1h-1zM353,713h1v1h-1zM353,702h1v1h-1zM353,690h1v1h-1zM353,679h1v1h-1zM353,668h1v1h-1zM353,656h1v1h-1zM353,645h1v1h-1zM353,634h1v1h-1zM353,622h1v1h-1zM353,611h1v1h-1zM353,600h1v1h-1zM353,588h1v1h-1zM353,577h1v1h-1zM353,565h1v1h-1zM353,554h1v1h-1zM353,543h1v1h-1zM353,531h1v1h-1zM353,520h1v1h-1zM353,509h1v1h-1zM353,497h1v1h-1zM353,486h1v1h-1zM353,474h1v1h-1zM353,463h1v1h-1zM353,452h1v1h-1zM353,440h1v1h-1zM353,429h1v1h-1zM353,418h1v1h-1zM353,406h1v1h-1zM353,395h1v1h-1zM353,383h1v1h-1zM353,372h1v1h-1zM353,361h1v1h-1zM353,349h1v1h-1zM353,338h1v1h-1zM353,327h1v1h-1zM353,315h1v1h-1zM353,304h1v1h-1zM353,293h1v1h-1zM353,281h1v1h-1zM353,270h1v1h-1zM353,258h1v1h-1zM353,247h1v1h-1zM353,236h1v1h-1zM353,224h1v1h-1zM353,213h1v1h-1zM353,202h1v1h-1zM353,190h1v1h-1zM353,179h1v1h-1zM353,167h1v1h-1zM353,156h1v1h-1zM365,725h1v1h-1zM365,713h1v1h-1zM365,702h1v1h-1zM365,690h1v1h-1zM365,679h1v1h-1zM365,668h1v1h-1zM365,656h1v1h-1zM365,645h1v1h-1zM365,634h1v1h-1zM365,622h1v1h-1zM365,611h1v1h-1zM365,600h1v1h-1zM365,588h1v1h-1zM365,577h1v1h-1zM365,565h1v1h-1zM365,554h1v1h-1zM365,543h1v1h-1zM365,531h1v1h-1zM365,520h1v1h-1zM365,509h1v1h-1zM365,497h1v1h-1zM365,486h1v1h-1zM365,474h1v1h-1zM365,463h1v1h-1zM365,452h1v1h-1zM365,440h1v1h-1zM365,429h1v1h-1zM365,418h1v1h-1zM365,406h1v1h-1zM365,395h1v1h-1zM365,383h1v1h-1zM365,372h1v1h-1zM365,361h1v1h-1zM365,349h1v1h-1zM365,338h1v1h-1zM365,327h1v1h-1zM365,315h1v1h-1zM365,304h1v1h-1zM365,293h1v1h-1zM365,281h1v1h-1zM365,270h1v1h-1zM365,258h1v1h-1zM365,247h1v1h-1zM365,236h1v1h-1zM365,224h1v1h-1zM365,213h1v1h-1zM365,202h1v1h-1zM365,190h1v1h-1zM365,179h1v1h-1zM365,167h1v1h-1zM365,156h1v1h-1zM376,725h1v1h-1zM376,713h1v1h-1zM376,702h1v1h-1zM376,690h1v1h-1zM376,679h1v1h-1zM376,668h1v1h-1zM376,656h1v1h-1zM376,645h1v1h-1zM376,634h1v1h-1zM376,622h1v1h-1zM376,611h1v1h-1zM376,600h1v1h-1zM376,588h1v1h-1zM376,577h1v1h-1zM376,565h1v1h-1zM376,554h1v1h-1zM376,543h1v1h-1zM376,531h1v1h-1zM376,520h1v1h-1zM376,509h1v1h-1zM376,497h1v1h-1zM376,486h1v1h-1zM376,474h1v1h-1zM376,463h1v1h-1zM376,452h1v1h-1zM376,440h1v1h-1zM376,429h1v1h-1zM376,418h1v1h-1zM376,406h1v1h-1zM376,395h1v1h-1zM376,383h1v1h-1zM376,372h1v1h-1zM376,361h1v1h-1zM376,349h1v1h-1zM376,338h1v1h-1zM376,327h1v1h-1zM376,315h1v1h-1zM376,304h1v1h-1zM376,293h1v1h-1zM376,281h1v1h-1zM376,270h1v1h-1zM376,258h1v1h-1zM376,247h1v1h-1zM376,236h1v1h-1zM376,224h1v1h-1zM376,213h1v1h-1zM376,202h1v1h-1zM376,190h1v1h-1zM376,179h1v1h-1zM376,167h1v1h-1zM376,156h1v1h-1zM387,725h1v1h-1zM387,713h1v1h-1zM387,702h1v1h-1zM387,690h1v1h-1zM387,679h1v1h-1zM387,668h1v1h-1zM387,656h1v1h-1zM387,645h1v1h-1zM387,634h1v1h-1zM387,622h1v1h-1zM387,611h1v1h-1zM387,600h1v1h-1zM387,588h1v1h-1zM387,577h1v1h-1zM387,565h1v1h-1zM387,554h1v1h-1zM387,543h1v1h-1zM387,531h1v1h-1zM387,520h1v1h-1zM387,509h1v1h-1zM387,497h1v1h-1zM387,486h1v1h-1zM387,474h1v1h-1zM387,463h1v1h-1zM387,452h1v1h-1zM387,440h1v1h-1zM387,429h1v1h-1zM387,418h1v1h-1zM387,406h1v1h-1zM387,395h1v1h-1zM387,383h1v1h-1zM387,372h1v1h-1zM387,361h1v1h-1zM387,349h1v1h-1zM387,338h1v1h-1zM387,327h1v1h-1zM387,315h1v1h-1zM387,304h1v1h-1zM387,293h1v1h-1zM387,281h1v1h-1zM387,270h1v1h-1zM387,258h1v1h-1zM387,247h1v1h-1zM387,236h1v1h-1zM387,224h1v1h-1zM387,213h1v1h-1zM387,202h1v1h-1zM387,190h1v1h-1zM387,179h1v1h-1zM387,167h1v1h-1zM387,156h1v1h-1zM399,725h1v1h-1zM399,713h1v1h-1zM399,702h1v1h-1zM399,690h1v1h-1zM399,679h1v1h-1zM399,668h1v1h-1zM399,656h1v1h-1zM399,645h1v1h-1zM399,634h1v1h-1zM399,622h1v1h-1zM399,611h1v1h-1zM399,600h1v1h-1zM399,588h1v1h-1zM399,577h1v1h-1zM399,565h1v1h-1zM399,554h1v1h-1zM399,543h1v1h-1zM399,531h1v1h-1zM399,520h1v1h-1zM399,509h1v1h-1zM399,497h1v1h-1zM399,486h1v1h-1zM399,474h1v1h-1zM399,463h1v1h-1zM399,452h1v1h-1zM399,440h1v1h-1zM399,429h1v1h-1zM399,418h1v1h-1zM399,406h1v1h-1zM399,395h1v1h-1zM399,383h1v1h-1zM399,372h1v1h-1zM399,361h1v1h-1zM399,349h1v1h-1zM399,338h1v1h-1zM399,327h1v1h-1zM399,315h1v1h-1zM399,304h1v1h-1zM399,293h1v1h-1zM399,281h1v1h-1zM399,270h1v1h-1zM399,258h1v1h-1zM399,247h1v1h-1zM399,236h1v1h-1zM399,224h1v1h-1zM399,213h1v1h-1zM399,202h1v1h-1zM399,190h1v1h-1zM399,179h1v1h-1zM399,167h1v1h-1zM399,156h1v1h-1zM410,725h1v1h-1zM410,713h1v1h-1zM410,702h1v1h-1zM410,690h1v1h-1zM410,679h1v1h-1zM410,668h1v1h-1zM410,656h1v1h-1zM410,645h1v1h-1zM410,634h1v1h-1zM410,622h1v1h-1zM410,611h1v1h-1zM410,600h1v1h-1zM410,588h1v1h-1zM410,577h1v1h-1zM410,565h1v1h-1zM410,554h1v1h-1zM410,543h1v1h-1zM410,531h1v1h-1zM410,520h1v1h-1zM410,509h1v1h-1zM410,497h1v1h-1zM410,486h1v1h-1zM410,474h1v1h-1zM410,463h1v1h-1zM410,452h1v1h-1zM410,440h1v1h-1zM410,429h1v1h-1zM410,418h1v1h-1zM410,406h1v1h-1zM410,395h1v1h-1zM410,383h1v1h-1zM410,372h1v1h-1zM410,361h1v1h-1zM410,349h1v1h-1zM410,338h1v1h-1zM410,327h1v1h-1zM410,315h1v1h-1zM410,304h1v1h-1zM410,293h1v1h-1zM410,281h1v1h-1zM410,270h1v1h-1zM410,258h1v1h-1zM410,247h1v1h-1zM410,236h1v1h-1zM410,224h1v1h-1zM410,213h1v1h-1zM410,202h1v1h-1zM410,190h1v1h-1zM410,179h1v1h-1zM410,167h1v1h-1zM410,156h1v1h-1zM422,725h1v1h-1zM422,713h1v1h-1zM422,702h1v1h-1zM422,690h1v1h-1zM422,679h1v1h-1zM422,668h1v1h-1zM422,656h1v1h-1zM422,645h1v1h-1zM422,634h1v1h-1zM422,622h1v1h-1zM422,611h1v1h-1zM422,600h1v1h-1zM422,588h1v1h-1zM422,577h1v1h-1zM422,565h1v1h-1zM422,554h1v1h-1zM422,543h1v1h-1zM422,531h1v1h-1zM422,520h1v1h-1zM422,509h1v1h-1zM422,497h1v1h-1zM422,486h1v1h-1zM422,474h1v1h-1zM422,463h1v1h-1zM422,452h1v1h-1zM422,440h1v1h-1zM422,429h1v1h-1zM422,418h1v1h-1zM422,406h1v1h-1zM422,395h1v1h-1zM422,383h1v1h-1zM422,372h1v1h-1zM422,361h1v1h-1zM422,349h1v1h-1zM422,338h1v1h-1zM422,327h1v1h-1zM422,315h1v1h-1zM422,304h1v1h-1zM422,293h1v1h-1zM422,281h1v1h-1zM422,270h1v1h-1zM422,258h1v1h-1zM422,247h1v1h-1zM422,236h1v1h-1zM422,224h1v1h-1zM422,213h1v1h-1zM422,202h1v1h-1zM422,190h1v1h-1zM422,179h1v1h-1zM422,167h1v1h-1zM422,156h1v1h-1zM433,725h1v1h-1zM433,713h1v1h-1zM433,702h1v1h-1zM433,690h1v1h-1zM433,679h1v1h-1zM433,668h1v1h-1zM433,656h1v1h-1zM433,645h1v1h-1zM433,634h1v1h-1zM433,622h1v1h-1zM433,611h1v1h-1zM433,600h1v1h-1zM433,588h1v1h-1zM433,577h1v1h-1zM433,565h1v1h-1zM433,554h1v1h-1zM433,543h1v1h-1zM433,531h1v1h-1zM433,520h1v1h-1zM433,509h1v1h-1zM433,497h1v1h-1zM433,486h1v1h-1zM433,474h1v1h-1zM433,463h1v1h-1zM433,452h1v1h-1zM433,440h1v1h-1zM433,429h1v1h-1zM433,418h1v1h-1zM433,406h1v1h-1zM433,395h1v1h-1zM433,383h1v1h-1zM433,372h1v1h-1zM433,361h1v1h-1zM433,349h1v1h-1zM433,338h1v1h-1zM433,327h1v1h-1zM433,315h1v1h-1zM433,304h1v1h-1zM433,293h1v1h-1zM433,281h1v1h-1zM433,270h1v1h-1zM433,258h1v1h-1zM433,247h1v1h-1zM433,236h1v1h-1zM433,224h1v1h-1zM433,213h1v1h-1zM433,202h1v1h-1zM433,190h1v1h-1zM433,179h1v1h-1zM433,167h1v1h-1zM433,156h1v1h-1zM444,725h1v1h-1zM444,713h1v1h-1zM444,702h1v1h-1zM444,690h1v1h-1zM444,679h1v1h-1zM444,668h1v1h-1zM444,656h1v1h-1zM444,645h1v1h-1zM444,634h1v1h-1zM444,622h1v1h-1zM444,611h1v1h-1zM444,600h1v1h-1zM444,588h1v1h-1zM444,577h1v1h-1zM444,565h1v1h-1zM444,554h1v1h-1zM444,543h1v1h-1zM444,531h1v1h-1zM444,520h1v1h-1zM444,509h1v1h-1zM444,497h1v1h-1zM444,486h1v1h-1zM444,474h1v1h-1zM444,463h1v1h-1zM444,452h1v1h-1zM444,440h1v1h-1zM444,429h1v1h-1zM444,418h1v1h-1zM444,406h1v1h-1zM444,395h1v1h-1zM444,383h1v1h-1zM444,372h1v1h-1zM444,361h1v1h-1zM444,349h1v1h-1zM444,338h1v1h-1zM444,327h1v1h-1zM444,315h1v1h-1zM444,304h1v1h-1zM444,293h1v1h-1zM444,281h1v1h-1zM444,270h1v1h-1zM444,258h1v1h-1zM444,247h1v1h-1zM444,236h1v1h-1zM444,224h1v1h-1zM444,213h1v1h-1zM444,202h1v1h-1zM444,190h1v1h-1zM444,179h1v1h-1zM444,167h1v1h-1zM444,156h1v1h-1zM456,725h1v1h-1zM456,713h1v1h-1zM456,702h1v1h-1zM456,690h1v1h-1zM456,679h1v1h-1zM456,668h1v1h-1zM456,656h1v1h-1zM456,645h1v1h-1zM456,634h1v1h-1zM456,622h1v1h-1zM456,611h1v1h-1zM456,600h1v1h-1zM456,588h1v1h-1zM456,577h1v1h-1zM456,565h1v1h-1zM456,554h1v1h-1zM456,543h1v1h-1zM456,531h1v1h-1zM456,520h1v1h-1zM456,509h1v1h-1zM456,497h1v1h-1zM456,486h1v1h-1zM456,474h1v1h-1zM456,463h1v1h-1zM456,452h1v1h-1zM456,440h1v1h-1zM456,429h1v1h-1zM456,418h1v1h-1zM456,406h1v1h-1zM456,395h1v1h-1zM456,383h1v1h-1zM456,372h1v1h-1zM456,361h1v1h-1zM456,349h1v1h-1zM456,338h1v1h-1zM456,327h1v1h-1zM456,315h1v1h-1zM456,304h1v1h-1zM456,293h1v1h-1zM456,281h1v1h-1zM456,270h1v1h-1zM456,258h1v1h-1zM456,247h1v1h-1zM456,236h1v1h-1zM456,224h1v1h-1zM456,213h1v1h-1zM456,202h1v1h-1zM456,190h1v1h-1zM456,179h1v1h-1zM456,167h1v1h-1zM456,156h1v1h-1zM467,725h1v1h-1zM467,713h1v1h-1zM467,702h1v1h-1zM467,690h1v1h-1zM467,679h1v1h-1zM467,668h1v1h-1zM467,656h1v1h-1zM467,645h1v1h-1zM467,634h1v1h-1zM467,622h1v1h-1zM467,611h1v1h-1zM467,600h1v1h-1zM467,588h1v1h-1zM467,577h1v1h-1zM467,565h1v1h-1zM467,554h1v1h-1zM467,543h1v1h-1zM467,531h1v1h-1zM467,520h1v1h-1zM467,509h1v1h-1zM467,497h1v1h-1zM467,486h1v1h-1zM467,474h1v1h-1zM467,463h1v1h-1zM467,452h1v1h-1zM467,440h1v1h-1zM467,429h1v1h-1zM467,418h1v1h-1zM467,406h1v1h-1zM467,395h1v1h-1zM467,383h1v1h-1zM467,372h1v1h-1zM467,361h1v1h-1zM467,349h1v1h-1zM467,338h1v1h-1zM467,327h1v1h-1zM467,315h1v1h-1zM467,304h1v1h-1zM467,293h1v1h-1zM467,281h1v1h-1zM467,270h1v1h-1zM467,258h1v1h-1zM467,247h1v1h-1zM467,236h1v1h-1zM467,224h1v1h-1zM467,213h1v1h-1zM467,202h1v1h-1zM467,190h1v1h-1zM467,179h1v1h-1zM467,167h1v1h-1zM467,156h1v1h-1zM478,725h1v1h-1zM478,713h1v1h-1zM478,702h1v1h-1zM478,690h1v1h-1zM478,679h1v1h-1zM478,668h1v1h-1zM478,656h1v1h-1zM478,645h1v1h-1zM478,634h1v1h-1zM478,622h1v1h-1zM478,611h1v1h-1zM478,600h1v1h-1zM478,588h1v1h-1zM478,577h1v1h-1zM478,565h1v1h-1zM478,554h1v1h-1zM478,543h1v1h-1zM478,531h1v1h-1zM478,520h1v1h-1zM478,509h1v1h-1zM478,497h1v1h-1zM478,486h1v1h-1zM478,474h1v1h-1zM478,463h1v1h-1zM478,452h1v1h-1zM478,440h1v1h-1zM478,429h1v1h-1zM478,418h1v1h-1zM478,406h1v1h-1zM478,395h1v1h-1zM478,383h1v1h-1zM478,372h1v1h-1zM478,361h1v1h-1zM478,349h1v1h-1zM478,338h1v1h-1zM478,327h1v1h-1zM478,315h1v1h-1zM478,304h1v1h-1zM478,293h1v1h-1zM478,281h1v1h-1zM478,270h1v1h-1zM478,258h1v1h-1zM478,247h1v1h-1zM478,236h1v1h-1zM478,224h1v1h-1zM478,213h1v1h-1zM478,202h1v1h-1zM478,190h1v1h-1zM478,179h1v1h-1zM478,167h1v1h-1zM478,156h1v1h-1zM490,725h1v1h-1zM490,713h1v1h-1zM490,702h1v1h-1zM490,690h1v1h-1zM490,679h1v1h-1zM490,668h1v1h-1zM490,656h1v1h-1zM490,645h1v1h-1zM490,634h1v1h-1zM490,622h1v1h-1zM490,611h1v1h-1zM490,600h1v1h-1zM490,588h1v1h-1zM490,577h1v1h-1zM490,565h1v1h-1zM490,554h1v1h-1zM490,543h1v1h-1zM490,531h1v1h-1zM490,520h1v1h-1zM490,509h1v1h-1zM490,497h1v1h-1zM490,486h1v1h-1zM490,474h1v1h-1zM490,463h1v1h-1zM490,452h1v1h-1zM490,440h1v1h-1zM490,429h1v1h-1zM490,418h1v1h-1zM490,406h1v1h-1zM490,395h1v1h-1zM490,383h1v1h-1zM490,372h1v1h-1zM490,361h1v1h-1zM490,349h1v1h-1zM490,338h1v1h-1zM490,327h1v1h-1zM490,315h1v1h-1zM490,304h1v1h-1zM490,293h1v1h-1zM490,281h1v1h-1zM490,270h1v1h-1zM490,258h1v1h-1zM490,247h1v1h-1zM490,236h1v1h-1zM490,224h1v1h-1zM490,213h1v1h-1zM490,202h1v1h-1zM490,190h1v1h-1zM490,179h1v1h-1zM490,167h1v1h-1zM490,156h1v1h-1zM501,725h1v1h-1zM501,713h1v1h-1zM501,702h1v1h-1zM501,690h1v1h-1zM501,679h1v1h-1zM501,668h1v1h-1zM501,656h1v1h-1zM501,645h1v1h-1zM501,634h1v1h-1zM501,622h1v1h-1zM501,611h1v1h-1zM501,600h1v1h-1zM501,588h1v1h-1zM501,577h1v1h-1zM501,565h1v1h-1zM501,554h1v1h-1zM501,543h1v1h-1zM501,531h1v1h-1zM501,520h1v1h-1zM501,509h1v1h-1zM501,497h1v1h-1zM501,486h1v1h-1zM501,474h1v1h-1zM501,463h1v1h-1zM501,452h1v1h-1zM501,440h1v1h-1zM501,429h1v1h-1zM501,418h1v1h-1zM501,406h1v1h-1zM501,395h1v1h-1zM501,383h1v1h-1zM501,372h1v1h-1zM501,361h1v1h-1zM501,349h1v1h-1zM501,338h1v1h-1zM501,327h1v1h-1zM501,315h1v1h-1zM501,304h1v1h-1zM501,293h1v1h-1zM501,281h1v1h-1zM501,270h1v1h-1zM501,258h1v1h-1zM501,247h1v1h-1zM501,236h1v1h-1zM501,224h1v1h-1zM501,213h1v1h-1zM501,202h1v1h-1zM501,190h1v1h-1zM501,179h1v1h-1zM501,167h1v1h-1zM501,156h1v1h-1zM513,725h1v1h-1zM513,713h1v1h-1zM513,702h1v1h-1zM513,690h1v1h-1zM513,679h1v1h-1zM513,668h1v1h-1zM513,656h1v1h-1zM513,645h1v1h-1zM513,634h1v1h-1zM513,622h1v1h-1zM513,611h1v1h-1zM513,600h1v1h-1zM513,588h1v1h-1zM513,577h1v1h-1zM513,565h1v1h-1zM513,554h1v1h-1zM513,543h1v1h-1zM513,531h1v1h-1zM513,520h1v1h-1zM513,509h1v1h-1zM513,497h1v1h-1zM513,486h1v1h-1zM513,474h1v1h-1zM513,463h1v1h-1zM513,452h1v1h-1zM513,440h1v1h-1zM513,429h1v1h-1zM513,418h1v1h-1zM513,406h1v1h-1zM513,395h1v1h-1zM513,383h1v1h-1zM513,372h1v1h-1zM513,361h1v1h-1zM513,349h1v1h-1zM513,338h1v1h-1zM513,327h1v1h-1zM513,315h1v1h-1zM513,304h1v1h-1zM513,293h1v1h-1zM513,281h1v1h-1zM513,270h1v1h-1zM513,258h1v1h-1zM513,247h1v1h-1zM513,236h1v1h-1zM513,224h1v1h-1zM513,213h1v1h-1zM513,202h1v1h-1zM513,190h1v1h-1zM513,179h1v1h-1zM513,167h1v1h-1zM513,156h1v1h-1zM524,725h1v1h-1zM524,713h1v1h-1zM524,702h1v1h-1zM524,690h1v1h-1zM524,679h1v1h-1zM524,668h1v1h-1zM524,656h1v1h-1zM524,645h1v1h-1zM524,634h1v1h-1zM524,622h1v1h-1zM524,611h1v1h-1zM524,600h1v1h-1zM524,588h1v1h-1zM524,577h1v1h-1zM524,565h1v1h-1zM524,554h1v1h-1zM524,543h1v1h-1zM524,531h1v1h-1zM524,520h1v1h-1zM524,509h1v1h-1zM524,497h1v1h-1zM524,486h1v1h-1zM524,474h1v1h-1zM524,463h1v1h-1zM524,452h1v1h-1zM524,440h1v1h-1zM524,429h1v1h-1zM524,418h1v1h-1zM524,406h1v1h-1zM524,395h1v1h-1zM524,383h1v1h-1zM524,372h1v1h-1zM524,361h1v1h-1zM524,349h1v1h-1zM524,338h1v1h-1zM524,327h1v1h-1zM524,315h1v1h-1zM524,304h1v1h-1zM524,293h1v1h-1zM524,281h1v1h-1zM524,270h1v1h-1zM524,258h1v1h-1zM524,247h1v1h-1zM524,236h1v1h-1zM524,224h1v1h-1zM524,213h1v1h-1zM524,202h1v1h-1zM524,190h1v1h-1zM524,179h1v1h-1zM524,167h1v1h-1zM524,156h1v1h-1zM535,725h1v1h-1zM535,713h1v1h-1zM535,702h1v1h-1zM535,690h1v1h-1zM535,679h1v1h-1zM535,668h1v1h-1zM535,656h1v1h-1zM535,645h1v1h-1zM535,634h1v1h-1zM535,622h1v1h-1zM535,611h1v1h-1zM535,600h1v1h-1zM535,588h1v1h-1zM535,577h1v1h-1zM535,565h1v1h-1zM535,554h1v1h-1zM535,543h1v1h-1zM535,531h1v1h-1zM535,520h1v1h-1zM535,509h1v1h-1zM535,497h1v1h-1zM535,486h1v1h-1zM535,474h1v1h-1zM535,463h1v1h-1zM535,452h1v1h-1zM535,440h1v1h-1zM535,429h1v1h-1zM535,418h1v1h-1zM535,406h1v1h-1zM535,395h1v1h-1zM535,383h1v1h-1zM535,372h1v1h-1zM535,361h1v1h-1zM535,349h1v1h-1zM535,338h1v1h-1zM535,327h1v1h-1zM535,315h1v1h-1zM535,304h1v1h-1zM535,293h1v1h-1zM535,281h1v1h-1zM535,270h1v1h-1zM535,258h1v1h-1zM535,247h1v1h-1zM535,236h1v1h-1zM535,224h1v1h-1zM535,213h1v1h-1zM535,202h1v1h-1zM535,190h1v1h-1zM535,179h1v1h-1zM535,167h1v1h-1zM535,156h1v1h-1zM547,725h1v1h-1zM547,713h1v1h-1zM547,702h1v1h-1zM547,690h1v1h-1zM547,679h1v1h-1zM547,668h1v1h-1zM547,656h1v1h-1zM547,645h1v1h-1zM547,634h1v1h-1zM547,622h1v1h-1zM547,611h1v1h-1zM547,600h1v1h-1zM547,588h1v1h-1zM547,577h1v1h-1zM547,565h1v1h-1zM547,554h1v1h-1zM547,543h1v1h-1zM547,531h1v1h-1zM547,520h1v1h-1zM547,509h1v1h-1zM547,497h1v1h-1zM547,486h1v1h-1zM547,474h1v1h-1zM547,463h1v1h-1zM547,452h1v1h-1zM547,440h1v1h-1zM547,429h1v1h-1zM547,418h1v1h-1zM547,406h1v1h-1zM547,395h1v1h-1zM547,383h1v1h-1zM547,372h1v1h-1zM547,361h1v1h-1zM547,349h1v1h-1zM547,338h1v1h-1zM547,327h1v1h-1zM547,315h1v1h-1zM547,304h1v1h-1zM547,293h1v1h-1zM547,281h1v1h-1zM547,270h1v1h-1zM547,258h1v1h-1zM547,247h1v1h-1zM547,236h1v1h-1zM547,224h1v1h-1zM547,213h1v1h-1zM547,202h1v1h-1zM547,190h1v1h-1zM547,179h1v1h-1zM547,167h1v1h-1zM547,156h1v1h-1zM558,725h1v1h-1zM558,713h1v1h-1zM558,702h1v1h-1zM558,690h1v1h-1zM558,679h1v1h-1zM558,668h1v1h-1zM558,656h1v1h-1zM558,645h1v1h-1zM558,634h1v1h-1zM558,622h1v1h-1zM558,611h1v1h-1zM558,600h1v1h-1zM558,588h1v1h-1zM558,577h1v1h-1zM558,565h1v1h-1zM558,554h1v1h-1zM558,543h1v1h-1zM558,531h1v1h-1zM558,520h1v1h-1zM558,509h1v1h-1zM558,497h1v1h-1zM558,486h1v1h-1zM558,474h1v1h-1zM558,463h1v1h-1zM558,452h1v1h-1zM558,440h1v1h-1zM558,429h1v1h-1zM558,418h1v1h-1zM558,406h1v1h-1zM558,395h1v1h-1zM558,383h1v1h-1zM558,372h1v1h-1zM558,361h1v1h-1zM558,349h1v1h-1zM558,338h1v1h-1zM558,327h1v1h-1zM558,315h1v1h-1zM558,304h1v1h-1zM558,293h1v1h-1zM558,281h1v1h-1zM558,270h1v1h-1zM558,258h1v1h-1zM558,247h1v1h-1zM558,236h1v1h-1zM558,224h1v1h-1zM558,213h1v1h-1zM558,202h1v1h-1zM558,190h1v1h-1zM558,179h1v1h-1zM558,167h1v1h-1zM558,156h1v1h-1zM569,725h1v1h-1zM569,713h1v1h-1zM569,702h1v1h-1zM569,690h1v1h-1zM569,679h1v1h-1zM569,668h1v1h-1zM569,656h1v1h-1zM569,645h1v1h-1zM569,634h1v1h-1zM569,622h1v1h-1zM569,611h1v1h-1zM569,600h1v1h-1zM569,588h1v1h-1zM569,577h1v1h-1zM569,565h1v1h-1zM569,554h1v1h-1zM569,543h1v1h-1zM569,531h1v1h-1zM569,520h1v1h-1zM569,509h1v1h-1zM569,497h1v1h-1zM569,486h1v1h-1zM569,474h1v1h-1zM569,463h1v1h-1zM569,452h1v1h-1zM569,440h1v1h-1zM569,429h1v1h-1zM569,418h1v1h-1zM569,406h1v1h-1zM569,395h1v1h-1zM569,383h1v1h-1zM569,372h1v1h-1zM569,361h1v1h-1zM569,349h1v1h-1zM569,338h1v1h-1zM569,327h1v1h-1zM569,315h1v1h-1zM569,304h1v1h-1zM569,293h1v1h-1zM569,281h1v1h-1zM569,270h1v1h-1zM569,258h1v1h-1zM569,247h1v1h-1zM569,236h1v1h-1zM569,224h1v1h-1zM569,213h1v1h-1zM569,202h1v1h-1zM569,190h1v1h-1zM569,179h1v1h-1zM569,167h1v1h-1zM569,156h1v1h-1zM581,725h1v1h-1zM581,713h1v1h-1zM581,702h1v1h-1zM581,690h1v1h-1zM581,679h1v1h-1zM581,668h1v1h-1zM581,656h1v1h-1zM581,645h1v1h-1zM581,634h1v1h-1zM581,622h1v1h-1zM581,611h1v1h-1zM581,600h1v1h-1zM581,588h1v1h-1zM581,577h1v1h-1zM581,565h1v1h-1zM581,554h1v1h-1zM581,543h1v1h-1zM581,531h1v1h-1zM581,520h1v1h-1zM581,509h1v1h-1zM581,497h1v1h-1zM581,486h1v1h-1zM581,474h1v1h-1zM581,463h1v1h-1zM581,452h1v1h-1zM581,440h1v1h-1zM581,429h1v1h-1zM581,418h1v1h-1zM581,406h1v1h-1zM581,395h1v1h-1zM581,383h1v1h-1zM581,372h1v1h-1zM581,361h1v1h-1zM581,349h1v1h-1zM581,338h1v1h-1zM581,327h1v1h-1zM581,315h1v1h-1zM581,304h1v1h-1zM581,293h1v1h-1zM581,281h1v1h-1zM581,270h1v1h-1zM581,258h1v1h-1zM581,247h1v1h-1zM581,236h1v1h-1zM581,224h1v1h-1zM581,213h1v1h-1zM581,202h1v1h-1zM581,190h1v1h-1zM581,179h1v1h-1zM581,167h1v1h-1zM581,156h1v1h-1zM592,725h1v1h-1zM592,713h1v1h-1zM592,702h1v1h-1zM592,690h1v1h-1zM592,679h1v1h-1zM592,668h1v1h-1zM592,656h1v1h-1zM592,645h1v1h-1zM592,634h1v1h-1zM592,622h1v1h-1zM592,611h1v1h-1zM592,600h1v1h-1zM592,588h1v1h-1zM592,577h1v1h-1zM592,565h1v1h-1zM592,554h1v1h-1zM592,543h1v1h-1zM592,531h1v1h-1zM592,520h1v1h-1zM592,509h1v1h-1zM592,497h1v1h-1zM592,486h1v1h-1zM592,474h1v1h-1zM592,463h1v1h-1zM592,452h1v1h-1zM592,440h1v1h-1zM592,429h1v1h-1zM592,418h1v1h-1zM592,406h1v1h-1zM592,395h1v1h-1zM592,383h1v1h-1zM592,372h1v1h-1zM592,361h1v1h-1zM592,349h1v1h-1zM592,338h1v1h-1zM592,327h1v1h-1zM592,315h1v1h-1zM592,304h1v1h-1zM592,293h1v1h-1zM592,281h1v1h-1zM592,270h1v1h-1zM592,258h1v1h-1zM592,247h1v1h-1zM592,236h1v1h-1zM592,224h1v1h-1zM592,213h1v1h-1zM592,202h1v1h-1zM592,190h1v1h-1zM592,179h1v1h-1zM592,167h1v1h-1zM592,156h1v1h-1zM603,725h1v1h-1zM603,713h1v1h-1zM603,702h1v1h-1zM603,690h1v1h-1zM603,679h1v1h-1zM603,668h1v1h-1zM603,656h1v1h-1zM603,645h1v1h-1zM603,634h1v1h-1zM603,622h1v1h-1zM603,611h1v1h-1zM603,600h1v1h-1zM603,588h1v1h-1zM603,577h1v1h-1zM603,565h1v1h-1zM603,554h1v1h-1zM603,543h1v1h-1zM603,531h1v1h-1zM603,520h1v1h-1zM603,509h1v1h-1zM603,497h1v1h-1zM603,486h1v1h-1zM603,474h1v1h-1zM603,463h1v1h-1zM603,452h1v1h-1zM603,440h1v1h-1zM603,429h1v1h-1zM603,418h1v1h-1zM603,406h1v1h-1zM603,395h1v1h-1zM603,383h1v1h-1zM603,372h1v1h-1zM603,361h1v1h-1zM603,349h1v1h-1zM603,338h1v1h-1zM603,327h1v1h-1zM603,315h1v1h-1zM603,304h1v1h-1zM603,293h1v1h-1zM603,281h1v1h-1zM603,270h1v1h-1zM603,258h1v1h-1zM603,247h1v1h-1zM603,236h1v1h-1zM603,224h1v1h-1zM603,213h1v1h-1zM603,202h1v1h-1zM603,190h1v1h-1zM603,179h1v1h-1zM603,167h1v1h-1zM603,156h1v1h-1zM615,725h1v1h-1zM615,713h1v1h-1zM615,702h1v1h-1zM615,690h1v1h-1zM615,679h1v1h-1zM615,668h1v1h-1zM615,656h1v1h-1zM615,645h1v1h-1zM615,634h1v1h-1zM615,622h1v1h-1zM615,611h1v1h-1zM615,600h1v1h-1zM615,588h1v1h-1zM615,577h1v1h-1zM615,565h1v1h-1zM615,554h1v1h-1zM615,543h1v1h-1zM615,531h1v1h-1zM615,520h1v1h-1zM615,509h1v1h-1zM615,497h1v1h-1zM615,486h1v1h-1zM615,474h1v1h-1zM615,463h1v1h-1zM615,452h1v1h-1zM615,440h1v1h-1zM615,429h1v1h-1zM615,418h1v1h-1zM615,406h1v1h-1zM615,395h1v1h-1zM615,383h1v1h-1zM615,372h1v1h-1zM615,361h1v1h-1zM615,349h1v1h-1zM615,338h1v1h-1zM615,327h1v1h-1zM615,315h1v1h-1zM615,304h1v1h-1zM615,293h1v1h-1zM615,281h1v1h-1zM615,270h1v1h-1zM615,258h1v1h-1zM615,247h1v1h-1zM615,236h1v1h-1zM615,224h1v1h-1zM615,213h1v1h-1zM615,202h1v1h-1zM615,190h1v1h-1zM615,179h1v1h-1zM615,167h1v1h-1zM615,156h1v1h-1zM626,725h1v1h-1zM626,713h1v1h-1zM626,702h1v1h-1zM626,690h1v1h-1zM626,679h1v1h-1zM626,668h1v1h-1zM626,656h1v1h-1zM626,645h1v1h-1zM626,634h1v1h-1zM626,622h1v1h-1zM626,611h1v1h-1zM626,600h1v1h-1zM626,588h1v1h-1zM626,577h1v1h-1zM626,565h1v1h-1zM626,554h1v1h-1zM626,543h1v1h-1zM626,531h1v1h-1zM626,520h1v1h-1zM626,509h1v1h-1zM626,497h1v1h-1zM626,486h1v1h-1zM626,474h1v1h-1zM626,463h1v1h-1zM626,452h1v1h-1zM626,440h1v1h-1zM626,429h1v1h-1zM626,418h1v1h-1zM626,406h1v1h-1zM626,395h1v1h-1zM626,383h1v1h-1zM626,372h1v1h-1zM626,361h1v1h-1zM626,349h1v1h-1zM626,338h1v1h-1zM626,327h1v1h-1zM626,315h1v1h-1zM626,304h1v1h-1zM626,293h1v1h-1zM626,281h1v1h-1zM626,270h1v1h-1zM626,258h1v1h-1zM626,247h1v1h-1zM626,236h1v1h-1zM626,224h1v1h-1zM626,213h1v1h-1zM626,202h1v1h-1zM626,190h1v1h-1zM626,179h1v1h-1zM626,167h1v1h-1zM626,156h1v1h-1zM638,725h1v1h-1zM638,713h1v1h-1zM638,702h1v1h-1zM638,690h1v1h-1zM638,679h1v1h-1zM638,668h1v1h-1zM638,656h1v1h-1zM638,645h1v1h-1zM638,634h1v1h-1zM638,622h1v1h-1zM638,611h1v1h-1zM638,600h1v1h-1zM638,588h1v1h-1zM638,577h1v1h-1zM638,565h1v1h-1zM638,554h1v1h-1zM638,543h1v1h-1zM638,531h1v1h-1zM638,520h1v1h-1zM638,509h1v1h-1zM638,497h1v1h-1zM638,486h1v1h-1zM638,474h1v1h-1zM638,463h1v1h-1zM638,452h1v1h-1zM638,440h1v1h-1zM638,429h1v1h-1zM638,418h1v1h-1zM638,406h1v1h-1zM638,395h1v1h-1zM638,383h1v1h-1zM638,372h1v1h-1zM638,361h1v1h-1zM638,349h1v1h-1zM638,338h1v1h-1zM638,327h1v1h-1zM638,315h1v1h-1zM638,304h1v1h-1zM638,293h1v1h-1zM638,281h1v1h-1zM638,270h1v1h-1zM638,258h1v1h-1zM638,247h1v1h-1zM638,236h1v1h-1zM638,224h1v1h-1zM638,213h1v1h-1zM638,202h1v1h-1zM638,190h1v1h-1zM638,179h1v1h-1zM638,167h1v1h-1zM638,156h1v1h-1zM649,725h1v1h-1zM649,713h1v1h-1zM649,702h1v1h-1zM649,690h1v1h-1zM649,679h1v1h-1zM649,668h1v1h-1zM649,656h1v1h-1zM649,645h1v1h-1zM649,634h1v1h-1zM649,622h1v1h-1zM649,611h1v1h-1zM649,600h1v1h-1zM649,588h1v1h-1zM649,577h1v1h-1zM649,565h1v1h-1zM649,554h1v1h-1zM649,543h1v1h-1zM649,531h1v1h-1zM649,520h1v1h-1zM649,509h1v1h-1zM649,497h1v1h-1zM649,486h1v1h-1zM649,474h1v1h-1zM649,463h1v1h-1zM649,452h1v1h-1zM649,440h1v1h-1zM649,429h1v1h-1zM649,418h1v1h-1zM649,406h1v1h-1zM649,395h1v1h-1zM649,383h1v1h-1zM649,372h1v1h-1zM649,361h1v1h-1zM649,349h1v1h-1zM649,338h1v1h-1zM649,327h1v1h-1zM649,315h1v1h-1zM649,304h1v1h-1zM649,293h1v1h-1zM649,281h1v1h-1zM649,270h1v1h-1zM649,258h1v1h-1zM649,247h1v1h-1zM649,236h1v1h-1zM649,224h1v1h-1zM649,213h1v1h-1zM649,202h1v1h-1zM649,190h1v1h-1zM649,179h1v1h-1zM649,167h1v1h-1zM649,156h1v1h-1zM660,725h1v1h-1zM660,713h1v1h-1zM660,702h1v1h-1zM660,690h1v1h-1zM660,679h1v1h-1zM660,668h1v1h-1zM660,656h1v1h-1zM660,645h1v1h-1zM660,634h1v1h-1zM660,622h1v1h-1zM660,611h1v1h-1zM660,600h1v1h-1zM660,588h1v1h-1zM660,577h1v1h-1zM660,565h1v1h-1zM660,554h1v1h-1zM660,543h1v1h-1zM660,531h1v1h-1zM660,520h1v1h-1zM660,509h1v1h-1zM660,497h1v1h-1zM660,486h1v1h-1zM660,474h1v1h-1zM660,463h1v1h-1zM660,452h1v1h-1zM660,440h1v1h-1zM660,429h1v1h-1zM660,418h1v1h-1zM660,406h1v1h-1zM660,395h1v1h-1zM660,383h1v1h-1zM660,372h1v1h-1zM660,361h1v1h-1zM660,349h1v1h-1zM660,338h1v1h-1zM660,327h1v1h-1zM660,315h1v1h-1zM660,304h1v1h-1zM660,293h1v1h-1zM660,281h1v1h-1zM660,270h1v1h-1zM660,258h1v1h-1zM660,247h1v1h-1zM660,236h1v1h-1zM660,224h1v1h-1zM660,213h1v1h-1zM660,202h1v1h-1zM660,190h1v1h-1zM660,179h1v1h-1zM660,167h1v1h-1zM660,156h1v1h-1zM672,725h1v1h-1zM672,713h1v1h-1zM672,702h1v1h-1zM672,690h1v1h-1zM672,679h1v1h-1zM672,668h1v1h-1zM672,656h1v1h-1zM672,645h1v1h-1zM672,634h1v1h-1zM672,622h1v1h-1zM672,611h1v1h-1zM672,600h1v1h-1zM672,588h1v1h-1zM672,577h1v1h-1zM672,565h1v1h-1zM672,554h1v1h-1zM672,543h1v1h-1zM672,531h1v1h-1zM672,520h1v1h-1zM672,509h1v1h-1zM672,497h1v1h-1zM672,486h1v1h-1zM672,474h1v1h-1zM672,463h1v1h-1zM672,452h1v1h-1zM672,440h1v1h-1zM672,429h1v1h-1zM672,418h1v1h-1zM672,406h1v1h-1zM672,395h1v1h-1zM672,383h1v1h-1zM672,372h1v1h-1zM672,361h1v1h-1zM672,349h1v1h-1zM672,338h1v1h-1zM672,327h1v1h-1zM672,315h1v1h-1zM672,304h1v1h-1zM672,293h1v1h-1zM672,281h1v1h-1zM672,270h1v1h-1zM672,258h1v1h-1zM672,247h1v1h-1zM672,236h1v1h-1zM672,224h1v1h-1zM672,213h1v1h-1zM672,202h1v1h-1zM672,190h1v1h-1zM672,179h1v1h-1zM672,167h1v1h-1zM672,156h1v1h-1zM683,725h1v1h-1zM683,713h1v1h-1zM683,702h1v1h-1zM683,690h1v1h-1zM683,679h1v1h-1zM683,668h1v1h-1zM683,656h1v1h-1zM683,645h1v1h-1zM683,634h1v1h-1zM683,622h1v1h-1zM683,611h1v1h-1zM683,600h1v1h-1zM683,588h1v1h-1zM683,577h1v1h-1zM683,565h1v1h-1zM683,554h1v1h-1zM683,543h1v1h-1zM683,531h1v1h-1zM683,520h1v1h-1zM683,509h1v1h-1zM683,497h1v1h-1zM683,486h1v1h-1zM683,474h1v1h-1zM683,463h1v1h-1zM683,452h1v1h-1zM683,440h1v1h-1zM683,429h1v1h-1zM683,418h1v1h-1zM683,406h1v1h-1zM683,395h1v1h-1zM683,383h1v1h-1zM683,372h1v1h-1zM683,361h1v1h-1zM683,349h1v1h-1zM683,338h1v1h-1zM683,327h1v1h-1zM683,315h1v1h-1zM683,304h1v1h-1zM683,293h1v1h-1zM683,281h1v1h-1zM683,270h1v1h-1zM683,258h1v1h-1zM683,247h1v1h-1zM683,236h1v1h-1zM683,224h1v1h-1zM683,213h1v1h-1zM683,202h1v1h-1zM683,190h1v1h-1zM683,179h1v1h-1zM683,167h1v1h-1zM683,156h1v1h-1zM694,725h1v1h-1zM694,713h1v1h-1zM694,702h1v1h-1zM694,690h1v1h-1zM694,679h1v1h-1zM694,668h1v1h-1zM694,656h1v1h-1zM694,645h1v1h-1zM694,634h1v1h-1zM694,622h1v1h-1zM694,611h1v1h-1zM694,600h1v1h-1zM694,588h1v1h-1zM694,577h1v1h-1zM694,565h1v1h-1zM694,554h1v1h-1zM694,543h1v1h-1zM694,531h1v1h-1zM694,520h1v1h-1zM694,509h1v1h-1zM694,497h1v1h-1zM694,486h1v1h-1zM694,474h1v1h-1zM694,463h1v1h-1zM694,452h1v1h-1zM694,440h1v1h-1zM694,429h1v1h-1zM694,418h1v1h-1zM694,406h1v1h-1zM694,395h1v1h-1zM694,383h1v1h-1zM694,372h1v1h-1zM694,361h1v1h-1zM694,349h1v1h-1zM694,338h1v1h-1zM694,327h1v1h-1zM694,315h1v1h-1zM694,304h1v1h-1zM694,293h1v1h-1zM694,281h1v1h-1zM694,270h1v1h-1zM694,258h1v1h-1zM694,247h1v1h-1zM694,236h1v1h-1zM694,224h1v1h-1zM694,213h1v1h-1zM694,202h1v1h-1zM694,190h1v1h-1zM694,179h1v1h-1zM694,167h1v1h-1zM694,156h1v1h-1zM706,725h1v1h-1zM706,713h1v1h-1zM706,702h1v1h-1zM706,690h1v1h-1zM706,679h1v1h-1zM706,668h1v1h-1zM706,656h1v1h-1zM706,645h1v1h-1zM706,634h1v1h-1zM706,622h1v1h-1zM706,611h1v1h-1zM706,600h1v1h-1zM706,588h1v1h-1zM706,577h1v1h-1zM706,565h1v1h-1zM706,554h1v1h-1zM706,543h1v1h-1zM706,531h1v1h-1zM706,520h1v1h-1zM706,509h1v1h-1zM706,497h1v1h-1zM706,486h1v1h-1zM706,474h1v1h-1zM706,463h1v1h-1zM706,452h1v1h-1zM706,440h1v1h-1zM706,429h1v1h-1zM706,418h1v1h-1zM706,406h1v1h-1zM706,395h1v1h-1zM706,383h1v1h-1zM706,372h1v1h-1zM706,361h1v1h-1zM706,349h1v1h-1zM706,338h1v1h-1zM706,327h1v1h-1zM706,315h1v1h-1zM706,304h1v1h-1zM706,293h1v1h-1zM706,281h1v1h-1zM706,270h1v1h-1zM706,258h1v1h-1zM706,247h1v1h-1zM706,236h1v1h-1zM706,224h1v1h-1zM706,213h1v1h-1zM706,202h1v1h-1zM706,190h1v1h-1zM706,179h1v1h-1zM706,167h1v1h-1zM706,156h1v1h-1zM717,725h1v1h-1zM717,713h1v1h-1zM717,702h1v1h-1zM717,690h1v1h-1zM717,679h1v1h-1zM717,668h1v1h-1zM717,656h1v1h-1zM717,645h1v1h-1zM717,634h1v1h-1zM717,622h1v1h-1zM717,611h1v1h-1zM717,600h1v1h-1zM717,588h1v1h-1zM717,577h1v1h-1zM717,565h1v1h-1zM717,554h1v1h-1zM717,543h1v1h-1zM717,531h1v1h-1zM717,520h1v1h-1zM717,509h1v1h-1zM717,497h1v1h-1zM717,486h1v1h-1zM717,474h1v1h-1zM717,463h1v1h-1zM717,452h1v1h-1zM717,440h1v1h-1zM717,429h1v1h-1zM717,418h1v1h-1zM717,406h1v1h-1zM717,395h1v1h-1zM717,383h1v1h-1zM717,372h1v1h-1zM717,361h1v1h-1zM717,349h1v1h-1zM717,338h1v1h-1zM717,327h1v1h-1zM717,315h1v1h-1zM717,304h1v1h-1zM717,293h1v1h-1zM717,281h1v1h-1zM717,270h1v1h-1zM717,258h1v1h-1zM717,247h1v1h-1zM717,236h1v1h-1zM717,224h1v1h-1zM717,213h1v1h-1zM717,202h1v1h-1zM717,190h1v1h-1zM717,179h1v1h-1zM717,167h1v1h-1zM717,156h1v1h-1zM729,725h1v1h-1zM729,713h1v1h-1zM729,702h1v1h-1zM729,690h1v1h-1zM729,679h1v1h-1zM729,668h1v1h-1zM729,656h1v1h-1zM729,645h1v1h-1zM729,634h1v1h-1zM729,622h1v1h-1zM729,611h1v1h-1zM729,600h1v1h-1zM729,588h1v1h-1zM729,577h1v1h-1zM729,565h1v1h-1zM729,554h1v1h-1zM729,543h1v1h-1zM729,531h1v1h-1zM729,520h1v1h-1zM729,509h1v1h-1zM729,497h1v1h-1zM729,486h1v1h-1zM729,474h1v1h-1zM729,463h1v1h-1zM729,452h1v1h-1zM729,440h1v1h-1zM729,429h1v1h-1zM729,418h1v1h-1zM729,406h1v1h-1zM729,395h1v1h-1zM729,383h1v1h-1zM729,372h1v1h-1zM729,361h1v1h-1zM729,349h1v1h-1zM729,338h1v1h-1zM729,327h1v1h-1zM729,315h1v1h-1zM729,304h1v1h-1zM729,293h1v1h-1zM729,281h1v1h-1zM729,270h1v1h-1zM729,258h1v1h-1zM729,247h1v1h-1zM729,236h1v1h-1zM729,224h1v1h-1zM729,213h1v1h-1zM729,202h1v1h-1zM729,190h1v1h-1zM729,179h1v1h-1zM729,167h1v1h-1zM729,156h1v1h-1zM740,725h1v1h-1zM740,713h1v1h-1zM740,702h1v1h-1zM740,690h1v1h-1zM740,679h1v1h-1zM740,668h1v1h-1zM740,656h1v1h-1zM740,645h1v1h-1zM740,634h1v1h-1zM740,622h1v1h-1zM740,611h1v1h-1zM740,600h1v1h-1zM740,588h1v1h-1zM740,577h1v1h-1zM740,565h1v1h-1zM740,554h1v1h-1zM740,543h1v1h-1zM740,531h1v1h-1zM740,520h1v1h-1zM740,509h1v1h-1zM740,497h1v1h-1zM740,486h1v1h-1zM740,474h1v1h-1zM740,463h1v1h-1zM740,452h1v1h-1zM740,440h1v1h-1zM740,429h1v1h-1zM740,418h1v1h-1zM740,406h1v1h-1zM740,395h1v1h-1zM740,383h1v1h-1zM740,372h1v1h-1zM740,361h1v1h-1zM740,349h1v1h-1zM740,338h1v1h-1zM740,327h1v1h-1zM740,315h1v1h-1zM740,304h1v1h-1zM740,293h1v1h-1zM740,281h1v1h-1zM740,270h1v1h-1zM740,258h1v1h-1zM740,247h1v1h-1zM740,236h1v1h-1zM740,224h1v1h-1zM740,213h1v1h-1zM740,202h1v1h-1zM740,190h1v1h-1zM740,179h1v1h-1zM740,167h1v1h-1zM740,156h1v1h-1zM751,725h1v1h-1zM751,713h1v1h-1zM751,702h1v1h-1zM751,690h1v1h-1zM751,679h1v1h-1zM751,668h1v1h-1zM751,656h1v1h-1zM751,645h1v1h-1zM751,634h1v1h-1zM751,622h1v1h-1zM751,611h1v1h-1zM751,600h1v1h-1zM751,588h1v1h-1zM751,577h1v1h-1zM751,565h1v1h-1zM751,554h1v1h-1zM751,543h1v1h-1zM751,531h1v1h-1zM751,520h1v1h-1zM751,509h1v1h-1zM751,497h1v1h-1zM751,486h1v1h-1zM751,474h1v1h-1zM751,463h1v1h-1zM751,452h1v1h-1zM751,440h1v1h-1zM751,429h1v1h-1zM751,418h1v1h-1zM751,406h1v1h-1zM751,395h1v1h-1zM751,383h1v1h-1zM751,372h1v1h-1zM751,361h1v1h-1zM751,349h1v1h-1zM751,338h1v1h-1zM751,327h1v1h-1zM751,315h1v1h-1zM751,304h1v1h-1zM751,293h1v1h-1zM751,281h1v1h-1zM751,270h1v1h-1zM751,258h1v1h-1zM751,247h1v1h-1zM751,236h1v1h-1zM751,224h1v1h-1zM751,213h1v1h-1zM751,202h1v1h-1zM751,190h1v1h-1zM751,179h1v1h-1zM751,167h1v1h-1zM751,156h1v1h-1zM763,725h1v1h-1zM763,713h1v1h-1zM763,702h1v1h-1zM763,690h1v1h-1zM763,679h1v1h-1zM763,668h1v1h-1zM763,656h1v1h-1zM763,645h1v1h-1zM763,634h1v1h-1zM763,622h1v1h-1zM763,611h1v1h-1zM763,600h1v1h-1zM763,588h1v1h-1zM763,577h1v1h-1zM763,565h1v1h-1zM763,554h1v1h-1zM763,543h1v1h-1zM763,531h1v1h-1zM763,520h1v1h-1zM763,509h1v1h-1zM763,497h1v1h-1zM763,486h1v1h-1zM763,474h1v1h-1zM763,463h1v1h-1zM763,452h1v1h-1zM763,440h1v1h-1zM763,429h1v1h-1zM763,418h1v1h-1zM763,406h1v1h-1zM763,395h1v1h-1zM763,383h1v1h-1zM763,372h1v1h-1zM763,361h1v1h-1zM763,349h1v1h-1zM763,338h1v1h-1zM763,327h1v1h-1zM763,315h1v1h-1zM763,304h1v1h-1zM763,293h1v1h-1zM763,281h1v1h-1zM763,270h1v1h-1zM763,258h1v1h-1zM763,247h1v1h-1zM763,236h1v1h-1zM763,224h1v1h-1zM763,213h1v1h-1zM763,202h1v1h-1zM763,190h1v1h-1zM763,179h1v1h-1zM763,167h1v1h-1zM763,156h1v1h-1zM774,725h1v1h-1zM774,713h1v1h-1zM774,702h1v1h-1zM774,690h1v1h-1zM774,679h1v1h-1zM774,668h1v1h-1zM774,656h1v1h-1zM774,645h1v1h-1zM774,634h1v1h-1zM774,622h1v1h-1zM774,611h1v1h-1zM774,600h1v1h-1zM774,588h1v1h-1zM774,577h1v1h-1zM774,565h1v1h-1zM774,554h1v1h-1zM774,543h1v1h-1zM774,531h1v1h-1zM774,520h1v1h-1zM774,509h1v1h-1zM774,497h1v1h-1zM774,486h1v1h-1zM774,474h1v1h-1zM774,463h1v1h-1zM774,452h1v1h-1zM774,440h1v1h-1zM774,429h1v1h-1zM774,418h1v1h-1zM774,406h1v1h-1zM774,395h1v1h-1zM774,383h1v1h-1zM774,372h1v1h-1zM774,361h1v1h-1zM774,349h1v1h-1zM774,338h1v1h-1zM774,327h1v1h-1zM774,315h1v1h-1zM774,304h1v1h-1zM774,293h1v1h-1zM774,281h1v1h-1zM774,270h1v1h-1zM774,258h1v1h-1zM774,247h1v1h-1zM774,236h1v1h-1zM774,224h1v1h-1zM774,213h1v1h-1zM774,202h1v1h-1zM774,190h1v1h-1zM774,179h1v1h-1zM774,167h1v1h-1zM774,156h1v1h-1zM785,725h1v1h-1zM785,713h1v1h-1zM785,702h1v1h-1zM785,690h1v1h-1zM785,679h1v1h-1zM785,668h1v1h-1zM785,656h1v1h-1zM785,645h1v1h-1zM785,634h1v1h-1zM785,622h1v1h-1zM785,611h1v1h-1zM785,600h1v1h-1zM785,588h1v1h-1zM785,577h1v1h-1zM785,565h1v1h-1zM785,554h1v1h-1zM785,543h1v1h-1zM785,531h1v1h-1zM785,520h1v1h-1zM785,509h1v1h-1zM785,497h1v1h-1zM785,486h1v1h-1zM785,474h1v1h-1zM785,463h1v1h-1zM785,452h1v1h-1zM785,440h1v1h-1zM785,429h1v1h-1zM785,418h1v1h-1zM785,406h1v1h-1zM785,395h1v1h-1zM785,383h1v1h-1zM785,372h1v1h-1zM785,361h1v1h-1zM785,349h1v1h-1zM785,338h1v1h-1zM785,327h1v1h-1zM785,315h1v1h-1zM785,304h1v1h-1zM785,293h1v1h-1zM785,281h1v1h-1zM785,270h1v1h-1zM785,258h1v1h-1zM785,247h1v1h-1zM785,236h1v1h-1zM785,224h1v1h-1zM785,213h1v1h-1zM785,202h1v1h-1zM785,190h1v1h-1zM785,179h1v1h-1zM785,167h1v1h-1zM785,156h1v1h-1zM797,725h1v1h-1zM797,713h1v1h-1zM797,702h1v1h-1zM797,690h1v1h-1zM797,679h1v1h-1zM797,668h1v1h-1zM797,656h1v1h-1zM797,645h1v1h-1zM797,634h1v1h-1zM797,622h1v1h-1zM797,611h1v1h-1zM797,600h1v1h-1zM797,588h1v1h-1zM797,577h1v1h-1zM797,565h1v1h-1zM797,554h1v1h-1zM797,543h1v1h-1zM797,531h1v1h-1zM797,520h1v1h-1zM797,509h1v1h-1zM797,497h1v1h-1zM797,486h1v1h-1zM797,474h1v1h-1zM797,463h1v1h-1zM797,452h1v1h-1zM797,440h1v1h-1zM797,429h1v1h-1zM797,418h1v1h-1zM797,406h1v1h-1zM797,395h1v1h-1zM797,383h1v1h-1zM797,372h1v1h-1zM797,361h1v1h-1zM797,349h1v1h-1zM797,338h1v1h-1zM797,327h1v1h-1zM797,315h1v1h-1zM797,304h1v1h-1zM797,293h1v1h-1zM797,281h1v1h-1zM797,270h1v1h-1zM797,258h1v1h-1zM797,247h1v1h-1zM797,236h1v1h-1zM797,224h1v1h-1zM797,213h1v1h-1zM797,202h1v1h-1zM797,190h1v1h-1zM797,179h1v1h-1zM797,167h1v1h-1zM797,156h1v1h-1zM808,725h1v1h-1zM808,713h1v1h-1zM808,702h1v1h-1zM808,690h1v1h-1zM808,679h1v1h-1zM808,668h1v1h-1zM808,656h1v1h-1zM808,645h1v1h-1zM808,634h1v1h-1zM808,622h1v1h-1zM808,611h1v1h-1zM808,600h1v1h-1zM808,588h1v1h-1zM808,577h1v1h-1zM808,565h1v1h-1zM808,554h1v1h-1zM808,543h1v1h-1zM808,531h1v1h-1zM808,520h1v1h-1zM808,509h1v1h-1zM808,497h1v1h-1zM808,486h1v1h-1zM808,474h1v1h-1zM808,463h1v1h-1zM808,452h1v1h-1zM808,440h1v1h-1zM808,429h1v1h-1zM808,418h1v1h-1zM808,406h1v1h-1zM808,395h1v1h-1zM808,383h1v1h-1zM808,372h1v1h-1zM808,361h1v1h-1zM808,349h1v1h-1zM808,338h1v1h-1zM808,327h1v1h-1zM808,315h1v1h-1zM808,304h1v1h-1zM808,293h1v1h-1zM808,281h1v1h-1zM808,270h1v1h-1zM808,258h1v1h-1zM808,247h1v1h-1zM808,236h1v1h-1zM808,224h1v1h-1zM808,213h1v1h-1zM808,202h1v1h-1zM808,190h1v1h-1zM808,179h1v1h-1zM808,167h1v1h-1zM808,156h1v1h-1zM819,725h1v1h-1zM819,713h1v1h-1zM819,702h1v1h-1zM819,690h1v1h-1zM819,679h1v1h-1zM819,668h1v1h-1zM819,656h1v1h-1zM819,645h1v1h-1zM819,634h1v1h-1zM819,622h1v1h-1zM819,611h1v1h-1zM819,600h1v1h-1zM819,588h1v1h-1zM819,577h1v1h-1zM819,565h1v1h-1zM819,554h1v1h-1zM819,543h1v1h-1zM819,531h1v1h-1zM819,520h1v1h-1zM819,509h1v1h-1zM819,497h1v1h-1zM819,486h1v1h-1zM819,474h1v1h-1zM819,463h1v1h-1zM819,452h1v1h-1zM819,440h1v1h-1zM819,429h1v1h-1zM819,418h1v1h-1zM819,406h1v1h-1zM819,395h1v1h-1zM819,383h1v1h-1zM819,372h1v1h-1zM819,361h1v1h-1zM819,349h1v1h-1zM819,338h1v1h-1zM819,327h1v1h-1zM819,315h1v1h-1zM819,304h1v1h-1zM819,293h1v1h-1zM819,281h1v1h-1zM819,270h1v1h-1zM819,258h1v1h-1zM819,247h1v1h-1zM819,236h1v1h-1zM819,224h1v1h-1zM819,213h1v1h-1zM819,202h1v1h-1zM819,190h1v1h-1zM819,179h1v1h-1zM819,167h1v1h-1zM819,156h1v1h-1zM831,725h1v1h-1zM831,713h1v1h-1zM831,702h1v1h-1zM831,690h1v1h-1zM831,679h1v1h-1zM831,668h1v1h-1zM831,656h1v1h-1zM831,645h1v1h-1zM831,634h1v1h-1zM831,622h1v1h-1zM831,611h1v1h-1zM831,600h1v1h-1zM831,588h1v1h-1zM831,577h1v1h-1zM831,565h1v1h-1zM831,554h1v1h-1zM831,543h1v1h-1zM831,531h1v1h-1zM831,520h1v1h-1zM831,509h1v1h-1zM831,497h1v1h-1zM831,486h1v1h-1zM831,474h1v1h-1zM831,463h1v1h-1zM831,452h1v1h-1zM831,440h1v1h-1zM831,429h1v1h-1zM831,418h1v1h-1zM831,406h1v1h-1zM831,395h1v1h-1zM831,383h1v1h-1zM831,372h1v1h-1zM831,361h1v1h-1zM831,349h1v1h-1zM831,338h1v1h-1zM831,327h1v1h-1zM831,315h1v1h-1zM831,304h1v1h-1zM831,293h1v1h-1zM831,281h1v1h-1zM831,270h1v1h-1zM831,258h1v1h-1zM831,247h1v1h-1zM831,236h1v1h-1zM831,224h1v1h-1zM831,213h1v1h-1zM831,202h1v1h-1zM831,190h1v1h-1zM831,179h1v1h-1zM831,167h1v1h-1zM831,156h1v1h-1zM842,725h1v1h-1zM842,713h1v1h-1zM842,702h1v1h-1zM842,690h1v1h-1zM842,679h1v1h-1zM842,668h1v1h-1zM842,656h1v1h-1zM842,645h1v1h-1zM842,634h1v1h-1zM842,622h1v1h-1zM842,611h1v1h-1zM842,600h1v1h-1zM842,588h1v1h-1zM842,577h1v1h-1zM842,565h1v1h-1zM842,554h1v1h-1zM842,543h1v1h-1zM842,531h1v1h-1zM842,520h1v1h-1zM842,509h1v1h-1zM842,497h1v1h-1zM842,486h1v1h-1zM842,474h1v1h-1zM842,463h1v1h-1zM842,452h1v1h-1zM842,440h1v1h-1zM842,429h1v1h-1zM842,418h1v1h-1zM842,406h1v1h-1zM842,395h1v1h-1zM842,383h1v1h-1zM842,372h1v1h-1zM842,361h1v1h-1zM842,349h1v1h-1zM842,338h1v1h-1zM842,327h1v1h-1zM842,315h1v1h-1zM842,304h1v1h-1zM842,293h1v1h-1zM842,281h1v1h-1zM842,270h1v1h-1zM842,258h1v1h-1zM842,247h1v1h-1zM842,236h1v1h-1zM842,224h1v1h-1zM842,213h1v1h-1zM842,202h1v1h-1zM842,190h1v1h-1zM842,179h1v1h-1zM842,167h1v1h-1zM842,156h1v1h-1zM854,725h1v1h-1zM854,713h1v1h-1zM854,702h1v1h-1zM854,690h1v1h-1zM854,679h1v1h-1zM854,668h1v1h-1zM854,656h1v1h-1zM854,645h1v1h-1zM854,634h1v1h-1zM854,622h1v1h-1zM854,611h1v1h-1zM854,600h1v1h-1zM854,588h1v1h-1zM854,577h1v1h-1zM854,565h1v1h-1zM854,554h1v1h-1zM854,543h1v1h-1zM854,531h1v1h-1zM854,520h1v1h-1zM854,509h1v1h-1zM854,497h1v1h-1zM854,486h1v1h-1zM854,474h1v1h-1zM854,463h1v1h-1zM854,452h1v1h-1zM854,440h1v1h-1zM854,429h1v1h-1zM854,418h1v1h-1zM854,406h1v1h-1zM854,395h1v1h-1zM854,383h1v1h-1zM854,372h1v1h-1zM854,361h1v1h-1zM854,349h1v1h-1zM854,338h1v1h-1zM854,327h1v1h-1zM854,315h1v1h-1zM854,304h1v1h-1zM854,293h1v1h-1zM854,281h1v1h-1zM854,270h1v1h-1zM854,258h1v1h-1zM854,247h1v1h-1zM854,236h1v1h-1zM854,224h1v1h-1zM854,213h1v1h-1zM854,202h1v1h-1zM854,190h1v1h-1zM854,179h1v1h-1zM854,167h1v1h-1zM854,156h1v1h-1zM865,725h1v1h-1zM865,713h1v1h-1zM865,702h1v1h-1zM865,690h1v1h-1zM865,679h1v1h-1zM865,668h1v1h-1zM865,656h1v1h-1zM865,645h1v1h-1zM865,634h1v1h-1zM865,622h1v1h-1zM865,611h1v1h-1zM865,600h1v1h-1zM865,588h1v1h-1zM865,577h1v1h-1zM865,565h1v1h-1zM865,554h1v1h-1zM865,543h1v1h-1zM865,531h1v1h-1zM865,520h1v1h-1zM865,509h1v1h-1zM865,497h1v1h-1zM865,486h1v1h-1zM865,474h1v1h-1zM865,463h1v1h-1zM865,452h1v1h-1zM865,440h1v1h-1zM865,429h1v1h-1zM865,418h1v1h-1zM865,406h1v1h-1zM865,395h1v1h-1zM865,383h1v1h-1zM865,372h1v1h-1zM865,361h1v1h-1zM865,349h1v1h-1zM865,338h1v1h-1zM865,327h1v1h-1zM865,315h1v1h-1zM865,304h1v1h-1zM865,293h1v1h-1zM865,281h1v1h-1zM865,270h1v1h-1zM865,258h1v1h-1zM865,247h1v1h-1zM865,236h1v1h-1zM865,224h1v1h-1zM865,213h1v1h-1zM865,202h1v1h-1zM865,190h1v1h-1zM865,179h1v1h-1zM865,167h1v1h-1zM865,156h1v1h-1zM876,725h1v1h-1zM876,713h1v1h-1zM876,702h1v1h-1zM876,690h1v1h-1zM876,679h1v1h-1zM876,668h1v1h-1zM876,656h1v1h-1zM876,645h1v1h-1zM876,634h1v1h-1zM876,622h1v1h-1zM876,611h1v1h-1zM876,600h1v1h-1zM876,588h1v1h-1zM876,577h1v1h-1zM876,565h1v1h-1zM876,554h1v1h-1zM876,543h1v1h-1zM876,531h1v1h-1zM876,520h1v1h-1zM876,509h1v1h-1zM876,497h1v1h-1zM876,486h1v1h-1zM876,474h1v1h-1zM876,463h1v1h-1zM876,452h1v1h-1zM876,440h1v1h-1zM876,429h1v1h-1zM876,418h1v1h-1zM876,406h1v1h-1zM876,395h1v1h-1zM876,383h1v1h-1zM876,372h1v1h-1zM876,361h1v1h-1zM876,349h1v1h-1zM876,338h1v1h-1zM876,327h1v1h-1zM876,315h1v1h-1zM876,304h1v1h-1zM876,293h1v1h-1zM876,281h1v1h-1zM876,270h1v1h-1zM876,258h1v1h-1zM876,247h1v1h-1zM876,236h1v1h-1zM876,224h1v1h-1zM876,213h1v1h-1zM876,202h1v1h-1zM876,190h1v1h-1zM876,179h1v1h-1zM876,167h1v1h-1zM876,156h1v1h-1zM888,725h1v1h-1zM888,713h1v1h-1zM888,702h1v1h-1zM888,690h1v1h-1zM888,679h1v1h-1zM888,668h1v1h-1zM888,656h1v1h-1zM888,645h1v1h-1zM888,634h1v1h-1zM888,622h1v1h-1zM888,611h1v1h-1zM888,600h1v1h-1zM888,588h1v1h-1zM888,577h1v1h-1zM888,565h1v1h-1zM888,554h1v1h-1zM888,543h1v1h-1zM888,531h1v1h-1zM888,520h1v1h-1zM888,509h1v1h-1zM888,497h1v1h-1zM888,486h1v1h-1zM888,474h1v1h-1zM888,463h1v1h-1zM888,452h1v1h-1zM888,440h1v1h-1zM888,429h1v1h-1zM888,418h1v1h-1zM888,406h1v1h-1zM888,395h1v1h-1zM888,383h1v1h-1zM888,372h1v1h-1zM888,361h1v1h-1zM888,349h1v1h-1zM888,338h1v1h-1zM888,327h1v1h-1zM888,315h1v1h-1zM888,304h1v1h-1zM888,293h1v1h-1zM888,281h1v1h-1zM888,270h1v1h-1zM888,258h1v1h-1zM888,247h1v1h-1zM888,236h1v1h-1zM888,224h1v1h-1zM888,213h1v1h-1zM888,202h1v1h-1zM888,190h1v1h-1zM888,179h1v1h-1zM888,167h1v1h-1zM888,156h1v1h-1zM899,725h1v1h-1zM899,713h1v1h-1zM899,702h1v1h-1zM899,690h1v1h-1zM899,679h1v1h-1zM899,668h1v1h-1zM899,656h1v1h-1zM899,645h1v1h-1zM899,634h1v1h-1zM899,622h1v1h-1zM899,611h1v1h-1zM899,600h1v1h-1zM899,588h1v1h-1zM899,577h1v1h-1zM899,565h1v1h-1zM899,554h1v1h-1zM899,543h1v1h-1zM899,531h1v1h-1zM899,520h1v1h-1zM899,509h1v1h-1zM899,497h1v1h-1zM899,486h1v1h-1zM899,474h1v1h-1zM899,463h1v1h-1zM899,452h1v1h-1zM899,440h1v1h-1zM899,429h1v1h-1zM899,418h1v1h-1zM899,406h1v1h-1zM899,395h1v1h-1zM899,383h1v1h-1zM899,372h1v1h-1zM899,361h1v1h-1zM899,349h1v1h-1zM899,338h1v1h-1zM899,327h1v1h-1zM899,315h1v1h-1zM899,304h1v1h-1zM899,293h1v1h-1zM899,281h1v1h-1zM899,270h1v1h-1zM899,258h1v1h-1zM899,247h1v1h-1zM899,236h1v1h-1zM899,224h1v1h-1zM899,213h1v1h-1zM899,202h1v1h-1zM899,190h1v1h-1zM899,179h1v1h-1zM899,167h1v1h-1zM899,156h1v1h-1zM910,725h1v1h-1zM910,713h1v1h-1zM910,702h1v1h-1zM910,690h1v1h-1zM910,679h1v1h-1zM910,668h1v1h-1zM910,656h1v1h-1zM910,645h1v1h-1zM910,634h1v1h-1zM910,622h1v1h-1zM910,611h1v1h-1zM910,600h1v1h-1zM910,588h1v1h-1zM910,577h1v1h-1zM910,565h1v1h-1zM910,554h1v1h-1zM910,543h1v1h-1zM910,531h1v1h-1zM910,520h1v1h-1zM910,509h1v1h-1zM910,497h1v1h-1zM910,486h1v1h-1zM910,474h1v1h-1zM910,463h1v1h-1zM910,452h1v1h-1zM910,440h1v1h-1zM910,429h1v1h-1zM910,418h1v1h-1zM910,406h1v1h-1zM910,395h1v1h-1zM910,383h1v1h-1zM910,372h1v1h-1zM910,361h1v1h-1zM910,349h1v1h-1zM910,338h1v1h-1zM910,327h1v1h-1zM910,315h1v1h-1zM910,304h1v1h-1zM910,293h1v1h-1zM910,281h1v1h-1zM910,270h1v1h-1zM910,258h1v1h-1zM910,247h1v1h-1zM910,236h1v1h-1zM910,224h1v1h-1zM910,213h1v1h-1zM910,202h1v1h-1zM910,190h1v1h-1zM910,179h1v1h-1zM910,167h1v1h-1zM910,156h1v1h-1zM922,725h1v1h-1zM922,713h1v1h-1zM922,702h1v1h-1zM922,690h1v1h-1zM922,679h1v1h-1zM922,668h1v1h-1zM922,656h1v1h-1zM922,645h1v1h-1zM922,634h1v1h-1zM922,622h1v1h-1zM922,611h1v1h-1zM922,600h1v1h-1zM922,588h1v1h-1zM922,577h1v1h-1zM922,565h1v1h-1zM922,554h1v1h-1zM922,543h1v1h-1zM922,531h1v1h-1zM922,520h1v1h-1zM922,509h1v1h-1zM922,497h1v1h-1zM922,486h1v1h-1zM922,474h1v1h-1zM922,463h1v1h-1zM922,452h1v1h-1zM922,440h1v1h-1zM922,429h1v1h-1zM922,418h1v1h-1zM922,406h1v1h-1zM922,395h1v1h-1zM922,383h1v1h-1zM922,372h1v1h-1zM922,361h1v1h-1zM922,349h1v1h-1zM922,338h1v1h-1zM922,327h1v1h-1zM922,315h1v1h-1zM922,304h1v1h-1zM922,293h1v1h-1zM922,281h1v1h-1zM922,270h1v1h-1zM922,258h1v1h-1zM922,247h1v1h-1zM922,236h1v1h-1zM922,224h1v1h-1zM922,213h1v1h-1zM922,202h1v1h-1zM922,190h1v1h-1zM922,179h1v1h-1zM922,167h1v1h-1zM922,156h1v1h-1zM933,725h1v1h-1zM933,713h1v1h-1zM933,702h1v1h-1zM933,690h1v1h-1zM933,679h1v1h-1zM933,668h1v1h-1zM933,656h1v1h-1zM933,645h1v1h-1zM933,634h1v1h-1zM933,622h1v1h-1zM933,611h1v1h-1zM933,600h1v1h-1zM933,588h1v1h-1zM933,577h1v1h-1zM933,565h1v1h-1zM933,554h1v1h-1zM933,543h1v1h-1zM933,531h1v1h-1zM933,520h1v1h-1zM933,509h1v1h-1zM933,497h1v1h-1zM933,486h1v1h-1zM933,474h1v1h-1zM933,463h1v1h-1zM933,452h1v1h-1zM933,440h1v1h-1zM933,429h1v1h-1zM933,418h1v1h-1zM933,406h1v1h-1zM933,395h1v1h-1zM933,383h1v1h-1zM933,372h1v1h-1zM933,361h1v1h-1zM933,349h1v1h-1zM933,338h1v1h-1zM933,327h1v1h-1zM933,315h1v1h-1zM933,304h1v1h-1zM933,293h1v1h-1zM933,281h1v1h-1zM933,270h1v1h-1zM933,258h1v1h-1zM933,247h1v1h-1zM933,236h1v1h-1zM933,224h1v1h-1zM933,213h1v1h-1zM933,202h1v1h-1zM933,190h1v1h-1zM933,179h1v1h-1zM933,167h1v1h-1zM933,156h1v1h-1zM945,725h1v1h-1zM945,713h1v1h-1zM945,702h1v1h-1zM945,690h1v1h-1zM945,679h1v1h-1zM945,668h1v1h-1zM945,656h1v1h-1zM945,645h1v1h-1zM945,634h1v1h-1zM945,622h1v1h-1zM945,611h1v1h-1zM945,600h1v1h-1zM945,588h1v1h-1zM945,577h1v1h-1zM945,565h1v1h-1zM945,554h1v1h-1zM945,543h1v1h-1zM945,531h1v1h-1zM945,520h1v1h-1zM945,509h1v1h-1zM945,497h1v1h-1zM945,486h1v1h-1zM945,474h1v1h-1zM945,463h1v1h-1zM945,452h1v1h-1zM945,440h1v1h-1zM945,429h1v1h-1zM945,418h1v1h-1zM945,406h1v1h-1zM945,395h1v1h-1zM945,383h1v1h-1zM945,372h1v1h-1zM945,361h1v1h-1zM945,349h1v1h-1zM945,338h1v1h-1zM945,327h1v1h-1zM945,315h1v1h-1zM945,304h1v1h-1zM945,293h1v1h-1zM945,281h1v1h-1zM945,270h1v1h-1zM945,258h1v1h-1zM945,247h1v1h-1zM945,236h1v1h-1zM945,224h1v1h-1zM945,213h1v1h-1zM945,202h1v1h-1zM945,190h1v1h-1zM945,179h1v1h-1zM945,167h1v1h-1zM945,156h1v1h-1zM956,725h1v1h-1zM956,713h1v1h-1zM956,702h1v1h-1zM956,690h1v1h-1zM956,679h1v1h-1zM956,668h1v1h-1zM956,656h1v1h-1zM956,645h1v1h-1zM956,634h1v1h-1zM956,622h1v1h-1zM956,611h1v1h-1zM956,600h1v1h-1zM956,588h1v1h-1zM956,577h1v1h-1zM956,565h1v1h-1zM956,554h1v1h-1zM956,543h1v1h-1zM956,531h1v1h-1zM956,520h1v1h-1zM956,509h1v1h-1zM956,497h1v1h-1zM956,486h1v1h-1zM956,474h1v1h-1zM956,463h1v1h-1zM956,452h1v1h-1zM956,440h1v1h-1zM956,429h1v1h-1zM956,418h1v1h-1zM956,406h1v1h-1zM956,395h1v1h-1zM956,383h1v1h-1zM956,372h1v1h-1zM956,361h1v1h-1zM956,349h1v1h-1zM956,338h1v1h-1zM956,327h1v1h-1zM956,315h1v1h-1zM956,304h1v1h-1zM956,293h1v1h-1zM956,281h1v1h-1zM956,270h1v1h-1zM956,258h1v1h-1zM956,247h1v1h-1zM956,236h1v1h-1zM956,224h1v1h-1zM956,213h1v1h-1zM956,202h1v1h-1zM956,190h1v1h-1zM956,179h1v1h-1zM956,167h1v1h-1zM956,156h1v1h-1zM967,725h1v1h-1zM967,713h1v1h-1zM967,702h1v1h-1zM967,690h1v1h-1zM967,679h1v1h-1zM967,668h1v1h-1zM967,656h1v1h-1zM967,645h1v1h-1zM967,634h1v1h-1zM967,622h1v1h-1zM967,611h1v1h-1zM967,600h1v1h-1zM967,588h1v1h-1zM967,577h1v1h-1zM967,565h1v1h-1zM967,554h1v1h-1zM967,543h1v1h-1zM967,531h1v1h-1zM967,520h1v1h-1zM967,509h1v1h-1zM967,497h1v1h-1zM967,486h1v1h-1zM967,474h1v1h-1zM967,463h1v1h-1zM967,452h1v1h-1zM967,440h1v1h-1zM967,429h1v1h-1zM967,418h1v1h-1zM967,406h1v1h-1zM967,395h1v1h-1zM967,383h1v1h-1zM967,372h1v1h-1zM967,361h1v1h-1zM967,349h1v1h-1zM967,338h1v1h-1zM967,327h1v1h-1zM967,315h1v1h-1zM967,304h1v1h-1zM967,293h1v1h-1zM967,281h1v1h-1zM967,270h1v1h-1zM967,258h1v1h-1zM967,247h1v1h-1zM967,236h1v1h-1zM967,224h1v1h-1zM967,213h1v1h-1zM967,202h1v1h-1zM967,190h1v1h-1zM967,179h1v1h-1zM967,167h1v1h-1zM967,156h1v1h-1zM979,725h1v1h-1zM979,713h1v1h-1zM979,702h1v1h-1zM979,690h1v1h-1zM979,679h1v1h-1zM979,668h1v1h-1zM979,656h1v1h-1zM979,645h1v1h-1zM979,634h1v1h-1zM979,622h1v1h-1zM979,611h1v1h-1zM979,600h1v1h-1zM979,588h1v1h-1zM979,577h1v1h-1zM979,565h1v1h-1zM979,554h1v1h-1zM979,543h1v1h-1zM979,531h1v1h-1zM979,520h1v1h-1zM979,509h1v1h-1zM979,497h1v1h-1zM979,486h1v1h-1zM979,474h1v1h-1zM979,463h1v1h-1zM979,452h1v1h-1zM979,440h1v1h-1zM979,429h1v1h-1zM979,418h1v1h-1zM979,406h1v1h-1zM979,395h1v1h-1zM979,383h1v1h-1zM979,372h1v1h-1zM979,361h1v1h-1zM979,349h1v1h-1zM979,338h1v1h-1zM979,327h1v1h-1zM979,315h1v1h-1zM979,304h1v1h-1zM979,293h1v1h-1zM979,281h1v1h-1zM979,270h1v1h-1zM979,258h1v1h-1zM979,247h1v1h-1zM979,236h1v1h-1zM979,224h1v1h-1zM979,213h1v1h-1zM979,202h1v1h-1zM979,190h1v1h-1zM979,179h1v1h-1zM979,167h1v1h-1zM979,156h1v1h-1zM990,725h1v1h-1zM990,713h1v1h-1zM990,702h1v1h-1zM990,690h1v1h-1zM990,679h1v1h-1zM990,668h1v1h-1zM990,656h1v1h-1zM990,645h1v1h-1zM990,634h1v1h-1zM990,622h1v1h-1zM990,611h1v1h-1zM990,600h1v1h-1zM990,588h1v1h-1zM990,577h1v1h-1zM990,565h1v1h-1zM990,554h1v1h-1zM990,543h1v1h-1zM990,531h1v1h-1zM990,520h1v1h-1zM990,509h1v1h-1zM990,497h1v1h-1zM990,486h1v1h-1zM990,474h1v1h-1zM990,463h1v1h-1zM990,452h1v1h-1zM990,440h1v1h-1zM990,429h1v1h-1zM990,418h1v1h-1zM990,406h1v1h-1zM990,395h1v1h-1zM990,383h1v1h-1zM990,372h1v1h-1zM990,361h1v1h-1zM990,349h1v1h-1zM990,338h1v1h-1zM990,327h1v1h-1zM990,315h1v1h-1zM990,304h1v1h-1zM990,293h1v1h-1zM990,281h1v1h-1zM990,270h1v1h-1zM990,258h1v1h-1zM990,247h1v1h-1zM990,236h1v1h-1zM990,224h1v1h-1zM990,213h1v1h-1zM990,202h1v1h-1zM990,190h1v1h-1zM990,179h1v1h-1zM990,167h1v1h-1zM990,156h1v1h-1zM1001,725h1v1h-1zM1001,713h1v1h-1zM1001,702h1v1h-1zM1001,690h1v1h-1zM1001,679h1v1h-1zM1001,668h1v1h-1zM1001,656h1v1h-1zM1001,645h1v1h-1zM1001,634h1v1h-1zM1001,622h1v1h-1zM1001,611h1v1h-1zM1001,600h1v1h-1zM1001,588h1v1h-1zM1001,577h1v1h-1zM1001,565h1v1h-1zM1001,554h1v1h-1zM1001,543h1v1h-1zM1001,531h1v1h-1zM1001,520h1v1h-1zM1001,509h1v1h-1zM1001,497h1v1h-1zM1001,486h1v1h-1zM1001,474h1v1h-1zM1001,463h1v1h-1zM1001,452h1v1h-1zM1001,440h1v1h-1zM1001,429h1v1h-1zM1001,418h1v1h-1zM1001,406h1v1h-1zM1001,395h1v1h-1zM1001,383h1v1h-1zM1001,372h1v1h-1zM1001,361h1v1h-1zM1001,349h1v1h-1zM1001,338h1v1h-1zM1001,327h1v1h-1zM1001,315h1v1h-1zM1001,304h1v1h-1zM1001,293h1v1h-1zM1001,281h1v1h-1zM1001,270h1v1h-1zM1001,258h1v1h-1zM1001,247h1v1h-1zM1001,236h1v1h-1zM1001,224h1v1h-1zM1001,213h1v1h-1zM1001,202h1v1h-1zM1001,190h1v1h-1zM1001,179h1v1h-1zM1001,167h1v1h-1zM1001,156h1v1h-1zM1013,725h1v1h-1zM1013,713h1v1h-1zM1013,702h1v1h-1zM1013,690h1v1h-1zM1013,679h1v1h-1zM1013,668h1v1h-1zM1013,656h1v1h-1zM1013,645h1v1h-1zM1013,634h1v1h-1zM1013,622h1v1h-1zM1013,611h1v1h-1zM1013,600h1v1h-1zM1013,588h1v1h-1zM1013,577h1v1h-1zM1013,565h1v1h-1zM1013,554h1v1h-1zM1013,543h1v1h-1zM1013,531h1v1h-1zM1013,520h1v1h-1zM1013,509h1v1h-1zM1013,497h1v1h-1zM1013,486h1v1h-1zM1013,474h1v1h-1zM1013,463h1v1h-1zM1013,452h1v1h-1zM1013,440h1v1h-1zM1013,429h1v1h-1zM1013,418h1v1h-1zM1013,406h1v1h-1zM1013,395h1v1h-1zM1013,383h1v1h-1zM1013,372h1v1h-1zM1013,361h1v1h-1zM1013,349h1v1h-1zM1013,338h1v1h-1zM1013,327h1v1h-1zM1013,315h1v1h-1zM1013,304h1v1h-1zM1013,293h1v1h-1zM1013,281h1v1h-1zM1013,270h1v1h-1zM1013,258h1v1h-1zM1013,247h1v1h-1zM1013,236h1v1h-1zM1013,224h1v1h-1zM1013,213h1v1h-1zM1013,202h1v1h-1zM1013,190h1v1h-1zM1013,179h1v1h-1zM1013,167h1v1h-1zM1013,156h1v1h-1zM1024,725h1v1h-1zM1024,713h1v1h-1zM1024,702h1v1h-1zM1024,690h1v1h-1zM1024,679h1v1h-1zM1024,668h1v1h-1zM1024,656h1v1h-1zM1024,645h1v1h-1zM1024,634h1v1h-1zM1024,622h1v1h-1zM1024,611h1v1h-1zM1024,600h1v1h-1zM1024,588h1v1h-1zM1024,577h1v1h-1zM1024,565h1v1h-1zM1024,554h1v1h-1zM1024,543h1v1h-1zM1024,531h1v1h-1zM1024,520h1v1h-1zM1024,509h1v1h-1zM1024,497h1v1h-1zM1024,486h1v1h-1zM1024,474h1v1h-1zM1024,463h1v1h-1zM1024,452h1v1h-1zM1024,440h1v1h-1zM1024,429h1v1h-1zM1024,418h1v1h-1zM1024,406h1v1h-1zM1024,395h1v1h-1zM1024,383h1v1h-1zM1024,372h1v1h-1zM1024,361h1v1h-1zM1024,349h1v1h-1zM1024,338h1v1h-1zM1024,327h1v1h-1zM1024,315h1v1h-1zM1024,304h1v1h-1zM1024,293h1v1h-1zM1024,281h1v1h-1zM1024,270h1v1h-1zM1024,258h1v1h-1zM1024,247h1v1h-1zM1024,236h1v1h-1zM1024,224h1v1h-1zM1024,213h1v1h-1zM1024,202h1v1h-1zM1024,190h1v1h-1zM1024,179h1v1h-1zM1024,167h1v1h-1zM1024,156h1v1h-1zM1036,725h1v1h-1zM1036,713h1v1h-1zM1036,702h1v1h-1zM1036,690h1v1h-1zM1036,679h1v1h-1zM1036,668h1v1h-1zM1036,656h1v1h-1zM1036,645h1v1h-1zM1036,634h1v1h-1zM1036,622h1v1h-1zM1036,611h1v1h-1zM1036,600h1v1h-1zM1036,588h1v1h-1zM1036,577h1v1h-1zM1036,565h1v1h-1zM1036,554h1v1h-1zM1036,543h1v1h-1zM1036,531h1v1h-1zM1036,520h1v1h-1zM1036,509h1v1h-1zM1036,497h1v1h-1zM1036,486h1v1h-1zM1036,474h1v1h-1zM1036,463h1v1h-1zM1036,452h1v1h-1zM1036,440h1v1h-1zM1036,429h1v1h-1zM1036,418h1v1h-1zM1036,406h1v1h-1zM1036,395h1v1h-1zM1036,383h1v1h-1zM1036,372h1v1h-1zM1036,361h1v1h-1zM1036,349h1v1h-1zM1036,338h1v1h-1zM1036,327h1v1h-1zM1036,315h1v1h-1zM1036,304h1v1h-1zM1036,293h1v1h-1zM1036,281h1v1h-1zM1036,270h1v1h-1zM1036,258h1v1h-1zM1036,247h1v1h-1zM1036,236h1v1h-1zM1036,224h1v1h-1zM1036,213h1v1h-1zM1036,202h1v1h-1zM1036,190h1v1h-1zM1036,179h1v1h-1zM1036,167h1v1h-1zM1036,156h1v1h-1zM1047,725h1v1h-1zM1047,713h1v1h-1zM1047,702h1v1h-1zM1047,690h1v1h-1zM1047,679h1v1h-1zM1047,668h1v1h-1zM1047,656h1v1h-1zM1047,645h1v1h-1zM1047,634h1v1h-1zM1047,622h1v1h-1zM1047,611h1v1h-1zM1047,600h1v1h-1zM1047,588h1v1h-1zM1047,577h1v1h-1zM1047,565h1v1h-1zM1047,554h1v1h-1zM1047,543h1v1h-1zM1047,531h1v1h-1zM1047,520h1v1h-1zM1047,509h1v1h-1zM1047,497h1v1h-1zM1047,486h1v1h-1zM1047,474h1v1h-1zM1047,463h1v1h-1zM1047,452h1v1h-1zM1047,440h1v1h-1zM1047,429h1v1h-1zM1047,418h1v1h-1zM1047,406h1v1h-1zM1047,395h1v1h-1zM1047,383h1v1h-1zM1047,372h1v1h-1zM1047,361h1v1h-1zM1047,349h1v1h-1zM1047,338h1v1h-1zM1047,327h1v1h-1zM1047,315h1v1h-1zM1047,304h1v1h-1zM1047,293h1v1h-1zM1047,281h1v1h-1zM1047,270h1v1h-1zM1047,258h1v1h-1zM1047,247h1v1h-1zM1047,236h1v1h-1zM1047,224h1v1h-1zM1047,213h1v1h-1zM1047,202h1v1h-1zM1047,190h1v1h-1zM1047,179h1v1h-1zM1047,167h1v1h-1zM1047,156h1v1h-1zM1058,725h1v1h-1zM1058,713h1v1h-1zM1058,702h1v1h-1zM1058,690h1v1h-1zM1058,679h1v1h-1zM1058,668h1v1h-1zM1058,656h1v1h-1zM1058,645h1v1h-1zM1058,634h1v1h-1zM1058,622h1v1h-1zM1058,611h1v1h-1zM1058,600h1v1h-1zM1058,588h1v1h-1zM1058,577h1v1h-1zM1058,565h1v1h-1zM1058,554h1v1h-1zM1058,543h1v1h-1zM1058,531h1v1h-1zM1058,520h1v1h-1zM1058,509h1v1h-1zM1058,497h1v1h-1zM1058,486h1v1h-1zM1058,474h1v1h-1zM1058,463h1v1h-1zM1058,452h1v1h-1zM1058,440h1v1h-1zM1058,429h1v1h-1zM1058,418h1v1h-1zM1058,406h1v1h-1zM1058,395h1v1h-1zM1058,383h1v1h-1zM1058,372h1v1h-1zM1058,361h1v1h-1zM1058,349h1v1h-1zM1058,338h1v1h-1zM1058,327h1v1h-1zM1058,315h1v1h-1zM1058,304h1v1h-1zM1058,293h1v1h-1zM1058,281h1v1h-1zM1058,270h1v1h-1zM1058,258h1v1h-1zM1058,247h1v1h-1zM1058,236h1v1h-1zM1058,224h1v1h-1zM1058,213h1v1h-1zM1058,202h1v1h-1zM1058,190h1v1h-1zM1058,179h1v1h-1zM1058,167h1v1h-1zM1058,156h1v1h-1zM1070,725h1v1h-1zM1070,713h1v1h-1zM1070,702h1v1h-1zM1070,690h1v1h-1zM1070,679h1v1h-1zM1070,668h1v1h-1zM1070,656h1v1h-1zM1070,645h1v1h-1zM1070,634h1v1h-1zM1070,622h1v1h-1zM1070,611h1v1h-1zM1070,600h1v1h-1zM1070,588h1v1h-1zM1070,577h1v1h-1zM1070,565h1v1h-1zM1070,554h1v1h-1zM1070,543h1v1h-1zM1070,531h1v1h-1zM1070,520h1v1h-1zM1070,509h1v1h-1zM1070,497h1v1h-1zM1070,486h1v1h-1zM1070,474h1v1h-1zM1070,463h1v1h-1zM1070,452h1v1h-1zM1070,440h1v1h-1zM1070,429h1v1h-1zM1070,418h1v1h-1zM1070,406h1v1h-1zM1070,395h1v1h-1zM1070,383h1v1h-1zM1070,372h1v1h-1zM1070,361h1v1h-1zM1070,349h1v1h-1zM1070,338h1v1h-1zM1070,327h1v1h-1zM1070,315h1v1h-1zM1070,304h1v1h-1zM1070,293h1v1h-1zM1070,281h1v1h-1zM1070,270h1v1h-1zM1070,258h1v1h-1zM1070,247h1v1h-1zM1070,236h1v1h-1zM1070,224h1v1h-1zM1070,213h1v1h-1zM1070,202h1v1h-1zM1070,190h1v1h-1zM1070,179h1v1h-1zM1070,167h1v1h-1zM1070,156h1v1h-1zM1081,725h1v1h-1zM1081,713h1v1h-1zM1081,702h1v1h-1zM1081,690h1v1h-1zM1081,679h1v1h-1zM1081,668h1v1h-1zM1081,656h1v1h-1zM1081,645h1v1h-1zM1081,634h1v1h-1zM1081,622h1v1h-1zM1081,611h1v1h-1zM1081,600h1v1h-1zM1081,588h1v1h-1zM1081,577h1v1h-1zM1081,565h1v1h-1zM1081,554h1v1h-1zM1081,543h1v1h-1zM1081,531h1v1h-1zM1081,520h1v1h-1zM1081,509h1v1h-1zM1081,497h1v1h-1zM1081,486h1v1h-1zM1081,474h1v1h-1zM1081,463h1v1h-1zM1081,452h1v1h-1zM1081,440h1v1h-1zM1081,429h1v1h-1zM1081,418h1v1h-1zM1081,406h1v1h-1zM1081,395h1v1h-1zM1081,383h1v1h-1zM1081,372h1v1h-1zM1081,361h1v1h-1zM1081,349h1v1h-1zM1081,338h1v1h-1zM1081,327h1v1h-1zM1081,315h1v1h-1zM1081,304h1v1h-1zM1081,293h1v1h-1zM1081,281h1v1h-1zM1081,270h1v1h-1zM1081,258h1v1h-1zM1081,247h1v1h-1zM1081,236h1v1h-1zM1081,224h1v1h-1zM1081,213h1v1h-1zM1081,202h1v1h-1zM1081,190h1v1h-1zM1081,179h1v1h-1zM1081,167h1v1h-1zM1081,156h1v1h-1zM1092,725h1v1h-1zM1092,713h1v1h-1zM1092,702h1v1h-1zM1092,690h1v1h-1zM1092,679h1v1h-1zM1092,668h1v1h-1zM1092,656h1v1h-1zM1092,645h1v1h-1zM1092,634h1v1h-1zM1092,622h1v1h-1zM1092,611h1v1h-1zM1092,600h1v1h-1zM1092,588h1v1h-1zM1092,577h1v1h-1zM1092,565h1v1h-1zM1092,554h1v1h-1zM1092,543h1v1h-1zM1092,531h1v1h-1zM1092,520h1v1h-1zM1092,509h1v1h-1zM1092,497h1v1h-1zM1092,486h1v1h-1zM1092,474h1v1h-1zM1092,463h1v1h-1zM1092,452h1v1h-1zM1092,440h1v1h-1zM1092,429h1v1h-1zM1092,418h1v1h-1zM1092,406h1v1h-1zM1092,395h1v1h-1zM1092,383h1v1h-1zM1092,372h1v1h-1zM1092,361h1v1h-1zM1092,349h1v1h-1zM1092,338h1v1h-1zM1092,327h1v1h-1zM1092,315h1v1h-1zM1092,304h1v1h-1zM1092,293h1v1h-1zM1092,281h1v1h-1zM1092,270h1v1h-1zM1092,258h1v1h-1zM1092,247h1v1h-1zM1092,236h1v1h-1zM1092,224h1v1h-1zM1092,213h1v1h-1zM1092,202h1v1h-1zM1092,190h1v1h-1zM1092,179h1v1h-1zM1092,167h1v1h-1zM1092,156h1v1h-1zM1104,725h1v1h-1zM1104,713h1v1h-1zM1104,702h1v1h-1zM1104,690h1v1h-1zM1104,679h1v1h-1zM1104,668h1v1h-1zM1104,656h1v1h-1zM1104,645h1v1h-1zM1104,634h1v1h-1zM1104,622h1v1h-1zM1104,611h1v1h-1zM1104,600h1v1h-1zM1104,588h1v1h-1zM1104,577h1v1h-1zM1104,565h1v1h-1zM1104,554h1v1h-1zM1104,543h1v1h-1zM1104,531h1v1h-1zM1104,520h1v1h-1zM1104,509h1v1h-1zM1104,497h1v1h-1zM1104,486h1v1h-1zM1104,474h1v1h-1zM1104,463h1v1h-1zM1104,452h1v1h-1zM1104,440h1v1h-1zM1104,429h1v1h-1zM1104,418h1v1h-1zM1104,406h1v1h-1zM1104,395h1v1h-1zM1104,383h1v1h-1zM1104,372h1v1h-1zM1104,361h1v1h-1zM1104,349h1v1h-1zM1104,338h1v1h-1zM1104,327h1v1h-1zM1104,315h1v1h-1zM1104,304h1v1h-1zM1104,293h1v1h-1zM1104,281h1v1h-1zM1104,270h1v1h-1zM1104,258h1v1h-1zM1104,247h1v1h-1zM1104,236h1v1h-1zM1104,224h1v1h-1zM1104,213h1v1h-1zM1104,202h1v1h-1zM1104,190h1v1h-1zM1104,179h1v1h-1zM1104,167h1v1h-1zM1104,156h1v1h-1zM1115,725h1v1h-1zM1115,713h1v1h-1zM1115,702h1v1h-1zM1115,690h1v1h-1zM1115,679h1v1h-1zM1115,668h1v1h-1zM1115,656h1v1h-1zM1115,645h1v1h-1zM1115,634h1v1h-1zM1115,622h1v1h-1zM1115,611h1v1h-1zM1115,600h1v1h-1zM1115,588h1v1h-1zM1115,577h1v1h-1zM1115,565h1v1h-1zM1115,554h1v1h-1zM1115,543h1v1h-1zM1115,531h1v1h-1zM1115,520h1v1h-1zM1115,509h1v1h-1zM1115,497h1v1h-1zM1115,486h1v1h-1zM1115,474h1v1h-1zM1115,463h1v1h-1zM1115,452h1v1h-1zM1115,440h1v1h-1zM1115,429h1v1h-1zM1115,418h1v1h-1zM1115,406h1v1h-1zM1115,395h1v1h-1zM1115,383h1v1h-1zM1115,372h1v1h-1zM1115,361h1v1h-1zM1115,349h1v1h-1zM1115,338h1v1h-1zM1115,327h1v1h-1zM1115,315h1v1h-1zM1115,304h1v1h-1zM1115,293h1v1h-1zM1115,281h1v1h-1zM1115,270h1v1h-1zM1115,258h1v1h-1zM1115,247h1v1h-1zM1115,236h1v1h-1zM1115,224h1v1h-1zM1115,213h1v1h-1zM1115,202h1v1h-1zM1115,190h1v1h-1zM1115,179h1v1h-1zM1115,167h1v1h-1zM1115,156h1v1h-1zM1126,725h1v1h-1zM1126,713h1v1h-1zM1126,702h1v1h-1zM1126,690h1v1h-1zM1126,679h1v1h-1zM1126,668h1v1h-1zM1126,656h1v1h-1zM1126,645h1v1h-1zM1126,634h1v1h-1zM1126,622h1v1h-1zM1126,611h1v1h-1zM1126,600h1v1h-1zM1126,588h1v1h-1zM1126,577h1v1h-1zM1126,565h1v1h-1zM1126,554h1v1h-1zM1126,543h1v1h-1zM1126,531h1v1h-1zM1126,520h1v1h-1zM1126,509h1v1h-1zM1126,497h1v1h-1zM1126,486h1v1h-1zM1126,474h1v1h-1zM1126,463h1v1h-1zM1126,452h1v1h-1zM1126,440h1v1h-1zM1126,429h1v1h-1zM1126,418h1v1h-1zM1126,406h1v1h-1zM1126,395h1v1h-1zM1126,383h1v1h-1zM1126,372h1v1h-1zM1126,361h1v1h-1zM1126,349h1v1h-1zM1126,338h1v1h-1zM1126,327h1v1h-1zM1126,315h1v1h-1zM1126,304h1v1h-1zM1126,293h1v1h-1zM1126,281h1v1h-1zM1126,270h1v1h-1zM1126,258h1v1h-1zM1126,247h1v1h-1zM1126,236h1v1h-1zM1126,224h1v1h-1zM1126,213h1v1h-1zM1126,202h1v1h-1zM1126,190h1v1h-1zM1126,179h1v1h-1zM1126,167h1v1h-1zM1126,156h1v1h-1z" fill="#4c4c4c"/>
<path d="M478.49,281.51V622.61" stroke="#ff1010" stroke-width="1.6" stroke-dasharray="48.3 8.6 10 8.3" stroke-dashoffset="4.3" fill="none"/>
<path d="M433.01,315.62V588.50" stroke="#fff" stroke-width="1.7" stroke-dasharray="20 8.09" stroke-dashoffset="14.6" fill="none"/>
<path d="M523.97,315.62V588.50" stroke="#fff" stroke-width="1.7" stroke-dasharray="20 8.09" stroke-dashoffset="14.6" fill="none"/>
<path d="M381.84,520.28L381.84,332.68L398.90,315.62L558.08,315.62L575.13,332.68L575.13,520.28M381.84,332.68L575.13,332.68" stroke="#fff" stroke-width="2.6" fill="none" stroke-linejoin="miter"/>
<path d="M342.05,588.50L910.55,588.50L910.55,537.34L893.50,520.28L359.11,520.28L342.05,537.34ZM342.05,537.34L910.55,537.34M774.11,588.50L774.11,537.34L767.86,520.28" stroke="#fff" stroke-width="2.6" fill="none" stroke-linejoin="miter"/>
<path d="M381.84,201.92H575.13M381.84,190.55V326.99M575.13,190.55V326.99M433.01,258.77H523.97M433.01,247.40V309.94M523.97,247.40V309.94M282.40,315.62V588.50M269.60,315.62H393.21M269.60,588.50H336.37M967.40,520.28V588.50M899.18,520.28H978.77M916.24,588.50H978.77M342.05,645.35H478.49M342.05,594.18V713.57M478.49,628.29V656.72M774.11,645.35H910.55M774.11,594.18V656.72M910.55,594.18V713.57M342.05,702.20H910.55" stroke="#0a96ff" stroke-width="2" fill="none"/>
<path d="M381.84,201.92L405.34,197.32L405.34,206.52ZM575.13,201.92L551.63,206.52L551.63,197.32ZM433.01,258.77L456.51,254.17L456.51,263.37ZM523.97,258.77L500.47,263.37L500.47,254.17ZM282.40,315.62L287.00,339.12L277.80,339.12ZM282.40,588.50L277.80,565.00L287.00,565.00ZM967.40,520.28L972.00,543.78L962.80,543.78ZM967.40,588.50L962.80,565.00L972.00,565.00ZM342.05,645.35L365.55,640.75L365.55,649.95ZM478.49,645.35L454.99,649.95L454.99,640.75ZM774.11,645.35L797.61,640.75L797.61,649.95ZM910.55,645.35L887.05,649.95L887.05,640.75ZM342.05,702.20L365.55,697.60L365.55,706.80ZM910.55,702.20L887.05,706.80L887.05,697.60Z" fill="#0a96ff"/>
<g transform="translate(455.1,196.4)" stroke="#0a96ff" stroke-width="2.3" fill="none" stroke-linecap="round" stroke-linejoin="round"><path transform="translate(0.00,0)" d="M8.4,-20.2A8.4,8.3 0 1 1 8.4,-3.6A8.4,8.3 0 1 1 8.4,-20.2ZM5.9,-0.1L10.9,-23.3"/><path transform="translate(23.20,0)" d="M0,-17.6L5.6,-23.2V0"/><path transform="translate(35.80,0)" d="M0,-23.2H11.2L3.8,0M4.7,-12.7H11.2"/></g>
<g transform="translate(461.2,253.3)" stroke="#0a96ff" stroke-width="2.3" fill="none" stroke-linecap="round" stroke-linejoin="round"><path transform="translate(0.00,0)" d="M8.4,-20.2A8.4,8.3 0 1 1 8.4,-3.6A8.4,8.3 0 1 1 8.4,-20.2ZM5.9,-0.1L10.9,-23.3"/><path transform="translate(23.00,0)" d="M5.8,-23.2A5,5.05 0 1 1 5.8,-13.1A5,5.05 0 1 1 5.8,-23.2ZM5.8,-12.2A5.8,6.1 0 1 1 5.8,0A5.8,6.1 0 1 1 5.8,-12.2Z"/></g>
<g transform="translate(398.6,639.7)" stroke="#0a96ff" stroke-width="2.3" fill="none" stroke-linecap="round" stroke-linejoin="round"><path transform="translate(0.00,0)" d="M0,-17.6L5.6,-23.2V0"/><path transform="translate(12.70,0)" d="M0.3,-19A5.45,5.45 0 0 1 11,-17.2L0,0H11.2"/></g>
<g transform="translate(829.75,639.7)" stroke="#0a96ff" stroke-width="2.3" fill="none" stroke-linecap="round" stroke-linejoin="round"><path transform="translate(0.00,0)" d="M0,-17.6L5.6,-23.2V0"/><path transform="translate(12.70,0)" d="M0.3,-19A5.45,5.45 0 0 1 11,-17.2L0,0H11.2"/></g>
<g transform="translate(611.8,696.7)" stroke="#0a96ff" stroke-width="2.3" fill="none" stroke-linecap="round" stroke-linejoin="round"><path transform="translate(0.00,0)" d="M11.6,-23.2H0V-13.3H4.6A6.65,6.65 0 0 1 4.6,0H0"/><path transform="translate(18.00,0)" d="M5.6,-23.2A5.6,11.6 0 1 1 5.6,0A5.6,11.6 0 1 1 5.6,-23.2Z"/></g>
<g transform="translate(277,467.4) rotate(-90)" stroke="#0a96ff" stroke-width="2.3" fill="none" stroke-linecap="round" stroke-linejoin="round"><path transform="translate(0.20,0)" d="M0.3,-19A5.45,5.45 0 0 1 11,-17.2L0,0H11.2"/><path transform="translate(17.50,0)" d="M5.6,-23.2L0,-5H13.6M9.2,-11V0"/></g>
<g transform="translate(961,558.7) rotate(-90)" stroke="#0a96ff" stroke-width="2.3" fill="none" stroke-linecap="round" stroke-linejoin="round"><path transform="translate(0.00,0)" d="M7.6,-22.8C2.2,-19.5 0,-14 0,-5.7A4.7,5.7 0 1 0 9.4,-5.7A4.7,5.7 0 1 0 0,-5.7"/></g>
</g>
<rect x="72" y="748" width="1082" height="2" fill="#c2c2c2"/>
<rect x="72" y="750" width="1082" height="20.5" fill="#fff"/>
<rect x="72" y="770.5" width="1082" height="1" fill="#bdbdbd"/>
<rect x="72" y="771.5" width="1082" height="26.5" fill="#ececec"/>
<rect x="136.8" y="775.8" width="990" height="18" fill="#fff"/>
<path d="M1144.2,750H1150.8V764.4A3.3,3.3 0 0 1 1144.2,764.4Z" fill="#808080"/>
<rect x="1127.6" y="772.6" width="24.8" height="24.6" fill="#f0f0f0" stroke="#c8c8c8" stroke-width="1"/>
<rect x="1133.5" y="780.3" width="13.6" height="9.7" fill="#eee" stroke="#222" stroke-width="1"/><rect x="1133" y="780" width="14.6" height="2.6" fill="#111"/>
<text x="77.30" y="762.50" font-size="13" fill="#1c1cd0" stroke="#1c1cd0" stroke-width="0.18" textLength="58.50" lengthAdjust="spacingAndGlyphs"  style="font-style:italic">Opdracht:</text>
<text x="139.50" y="762.50" font-size="13" fill="#1c1cd0" stroke="#1c1cd0" stroke-width="0.18" textLength="43.80" lengthAdjust="spacingAndGlyphs"  style="">zoomin</text>
<text x="73.20" y="789.60" font-size="13" fill="#111" stroke="#111" stroke-width="0.18" textLength="59.50" lengthAdjust="spacingAndGlyphs"  style="">Opdracht:</text>
<rect x="1153.5" y="107" width="2" height="691" fill="#c4c4c4"/>
<rect x="0" y="107" width="70" height="691" fill="url(#pal)"/>
<rect x="70" y="107" width="2" height="691" fill="#b4b4b4"/>
<rect x="0" y="107" width="72" height="1" fill="#c4c4c4"/>
<rect x="7.5" y="116" width="1.6" height="1.6" fill="#9a9a9a"/>
<rect x="13.5" y="116" width="1.6" height="1.6" fill="#9a9a9a"/>
<rect x="19.5" y="116" width="1.6" height="1.6" fill="#9a9a9a"/>
<rect x="25.5" y="116" width="1.6" height="1.6" fill="#9a9a9a"/>
<rect x="31.5" y="116" width="1.6" height="1.6" fill="#9a9a9a"/>
<rect x="37.5" y="116" width="1.6" height="1.6" fill="#9a9a9a"/>
<rect x="43.5" y="116" width="1.6" height="1.6" fill="#9a9a9a"/>
<rect x="49.5" y="116" width="1.6" height="1.6" fill="#9a9a9a"/>
<rect x="55.5" y="116" width="1.6" height="1.6" fill="#9a9a9a"/>
<rect x="61.5" y="116" width="1.6" height="1.6" fill="#9a9a9a"/>
<rect x="67.5" y="116" width="1.6" height="1.6" fill="#9a9a9a"/>
<rect x="1.8" y="123.0" width="33.5" height="33.5" fill="url(#btn)" stroke="#969696" stroke-width="1.4"/>
<rect x="37.0" y="123.0" width="33.5" height="33.5" fill="url(#btn)" stroke="#969696" stroke-width="1.4"/>
<rect x="1.8" y="158.0" width="33.5" height="33.5" fill="url(#btn)" stroke="#969696" stroke-width="1.4"/>
<rect x="37.0" y="158.0" width="33.5" height="33.5" fill="url(#btn)" stroke="#969696" stroke-width="1.4"/>
<rect x="1.8" y="193.0" width="33.5" height="33.5" fill="url(#btn)" stroke="#969696" stroke-width="1.4"/>
<rect x="37.0" y="193.0" width="33.5" height="33.5" fill="url(#btn)" stroke="#969696" stroke-width="1.4"/>
<rect x="1.8" y="228.0" width="33.5" height="33.5" fill="url(#btn)" stroke="#969696" stroke-width="1.4"/>
<rect x="37.0" y="228.0" width="33.5" height="33.5" fill="url(#btn)" stroke="#969696" stroke-width="1.4"/>
<rect x="1.8" y="263.0" width="33.5" height="33.5" fill="url(#btn)" stroke="#969696" stroke-width="1.4"/>
<rect x="1.8" y="305.7" width="33.5" height="33.5" fill="url(#btn)" stroke="#969696" stroke-width="1.4"/>
<rect x="37.0" y="305.7" width="33.5" height="33.5" fill="url(#btn)" stroke="#969696" stroke-width="1.4"/>
<rect x="1.8" y="340.7" width="33.5" height="33.5" fill="url(#btn)" stroke="#969696" stroke-width="1.4"/>
<rect x="1.8" y="383.5" width="33.5" height="33.5" fill="url(#btn)" stroke="#969696" stroke-width="1.4"/>
<rect x="37.0" y="383.5" width="33.5" height="33.5" fill="url(#btn)" stroke="#969696" stroke-width="1.4"/>
<rect x="1.8" y="418.5" width="33.5" height="33.5" fill="url(#btn)" stroke="#969696" stroke-width="1.4"/>
<rect x="37.0" y="418.5" width="33.5" height="33.5" fill="url(#btn)" stroke="#969696" stroke-width="1.4"/>
<rect x="1.8" y="461.5" width="33.5" height="33.5" fill="url(#btn)" stroke="#969696" stroke-width="1.4"/>
<rect x="1155.5" y="107" width="299" height="691" fill="#fff"/>
<rect x="1155.5" y="107" width="299" height="23.5" fill="url(#ltitle)"/>
<rect x="1155.5" y="129.6" width="299" height="1.4" fill="#c0c0c0"/>
<text x="1297.60" y="122.90" font-size="12" fill="#1a1a1a" stroke="#1a1a1a" stroke-width="0.18" textLength="49.70" lengthAdjust="spacingAndGlyphs"  style="">Lagenlijst</text>
<circle cx="1164" cy="118" r="7" fill="#6c6c6c"/><path d="M1161,115L1167,121M1167,115L1161,121" stroke="#fff" stroke-width="1.8"/>
<circle cx="1182" cy="118" r="7" fill="#6c6c6c"/><rect x="1181" y="114.5" width="5" height="4" fill="none" stroke="#fff" stroke-width="1.1"/><rect x="1178" y="117" width="5" height="4" fill="#6c6c6c" stroke="#fff" stroke-width="1.1"/>
<rect x="1155.5" y="131" width="299" height="25" fill="#d8d8d8"/>
<rect x="1156.4" y="131.6" width="57.1" height="23.5" fill="url(#lbtn)" stroke="#bdbdbd" stroke-width="1.2"/>
<rect x="1215.1" y="131.6" width="58.3" height="23.5" fill="url(#lbtn)" stroke="#bdbdbd" stroke-width="1.2"/>
<rect x="1275.0" y="131.6" width="58.3" height="23.5" fill="url(#lbtn)" stroke="#bdbdbd" stroke-width="1.2"/>
<rect x="1334.9" y="131.6" width="58.5" height="23.5" fill="url(#lbtn)" stroke="#bdbdbd" stroke-width="1.2"/>
<rect x="1395.0" y="131.6" width="58.3" height="23.5" fill="url(#lbtn)" stroke="#bdbdbd" stroke-width="1.2"/>
<rect x="1155.5" y="155.5" width="299" height="1.5" fill="#bdbdbd"/>
<rect x="1161.5" y="163.5" width="15" height="8" fill="#fff" stroke="#000" stroke-width="1"/>
<text x="1183.20" y="171.00" font-size="13" fill="#111" stroke="#111" stroke-width="0.18" textLength="8.30" lengthAdjust="spacingAndGlyphs"  style="">0</text>
<rect x="1161.5" y="183.5" width="15" height="8" fill="#f00" stroke="#000" stroke-width="1"/>
<text x="1183.20" y="191.10" font-size="13" fill="#111" stroke="#111" stroke-width="0.18" textLength="39.10" lengthAdjust="spacingAndGlyphs"  style="">Center</text>
<rect x="1161.5" y="203.5" width="15" height="8" fill="#fff" stroke="#000" stroke-width="1"/>
<text x="1183.20" y="211.10" font-size="13" fill="#111" stroke="#111" stroke-width="0.18" textLength="57.50" lengthAdjust="spacingAndGlyphs"  style="">Defpoints</text>
<rect x="1161.5" y="223.5" width="15" height="8" fill="#0a96ff" stroke="#000" stroke-width="1"/>
<text x="1183.20" y="231.20" font-size="13" fill="#111" stroke="#111" stroke-width="0.18" textLength="68.70" lengthAdjust="spacingAndGlyphs"  style="">Dimensions</text>
<rect x="1161.5" y="243.5" width="15" height="8" fill="#000" stroke="#000" stroke-width="1"/>
<text x="1183.20" y="251.20" font-size="13" fill="#111" stroke="#111" stroke-width="0.18" textLength="43.50" lengthAdjust="spacingAndGlyphs"  style="">Hidden</text>
<rect x="1454.3" y="107" width="1.5" height="691" fill="#c8c8c8"/>
<linearGradient id="rd" x1="0" y1="0" x2="1" y2="0"><stop offset="0" stop-color="#f0f0f0"/><stop offset="1" stop-color="#c9c9c9"/></linearGradient>
<rect x="1455.8" y="107" width="44.2" height="691" fill="url(#rd)"/>
<rect x="1498.2" y="107" width="1.8" height="691" fill="#e0e0e0"/>
<rect x="0" y="798" width="1500" height="46" fill="#dcdcdc"/>
<rect x="0" y="797.5" width="1500" height="1" fill="#c9c9c9"/>
<text x="2.3" y="815.7" font-size="9.6" fill="#151515" stroke="#151515" stroke-width="0.2" textLength="77.4" lengthAdjust="spacing">47.3607,60.0448</text>
<text x="2.3" y="836" font-size="9.6" fill="#151515" stroke="#151515" stroke-width="0.2" textLength="86" lengthAdjust="spacing">@47.3607,60.0448</text>
<rect x="253.3" y="802.3" width="1.2" height="39.4" fill="#8a8a8a"/><rect x="254.5" y="802.3" width="1" height="39.4" fill="#f4f4f4"/>
<text x="256.3" y="815.7" font-size="9.6" fill="#151515" stroke="#151515" stroke-width="0.2" textLength="58.7" lengthAdjust="spacing">76.4749&lt;52°</text>
<text x="256.3" y="836" font-size="9.6" fill="#151515" stroke="#151515" stroke-width="0.2" textLength="67" lengthAdjust="spacing">@76.4749&lt;52°</text>
<circle cx="509.5" cy="821.7" r="3" fill="#c6c6c6"/>
<text x="572.5" y="825.3" font-size="9.6" fill="#151515" stroke="#151515" stroke-width="0.2" textLength="125.8" lengthAdjust="spacing">Object of gebied selecteren</text>
<circle cx="943.4" cy="822.1" r="3" fill="#c6c6c6"/>
<text x="949.3" y="825.2" font-size="9.6" fill="#151515" stroke="#151515" stroke-width="0.2" textLength="129.7" lengthAdjust="spacing">Geen objecten geselecteerd.</text>
<circle cx="1272" cy="822" r="3" fill="#c6c6c6"/>
<rect x="717.5" y="806" width="17.5" height="29.5" rx="8.7" fill="#fff" stroke="#333" stroke-width="1"/><path d="M717.8,819.6Q726.2,816.5 734.8,819.6" stroke="#333" fill="none" stroke-width="1"/><path d="M726.2,806.3V819" stroke="#333" stroke-width="1"/><rect x="724.5" y="808.5" width="3.4" height="7" rx="1.7" fill="#fff" stroke="#333" stroke-width="0.9"/>
<defs>
<linearGradient id="flop" x1="0" y1="0" x2="1" y2="1"><stop offset="0" stop-color="#8fb4ff"/><stop offset="1" stop-color="#3b6ee8"/></linearGradient>
<linearGradient id="lab" x1="0" y1="0" x2="1" y2="1"><stop offset="0" stop-color="#ffffff"/><stop offset="1" stop-color="#dfe6ff"/></linearGradient>
<linearGradient id="grn" x1="0" y1="0" x2="1" y2="0"><stop offset="0" stop-color="#8ed37e"/><stop offset="1" stop-color="#1f9b3b"/></linearGradient>
<linearGradient id="fold" x1="0" y1="0" x2="0" y2="1"><stop offset="0" stop-color="#8ab2e6"/><stop offset="1" stop-color="#5d8ccc"/></linearGradient>
<radialGradient id="lens" cx="0.4" cy="0.35" r="0.7"><stop offset="0" stop-color="#cfe2ff"/><stop offset="0.6" stop-color="#6fa3ea"/><stop offset="1" stop-color="#3d78d4"/></radialGradient>
<radialGradient id="lensp" cx="0.4" cy="0.35" r="0.7"><stop offset="0" stop-color="#c9b8e6"/><stop offset="1" stop-color="#8a78c8"/></radialGradient>
<radialGradient id="glow" cx="0.5" cy="0.5" r="0.5"><stop offset="0" stop-color="#ffffb0"/><stop offset="0.45" stop-color="#f5e82a"/><stop offset="1" stop-color="#f5e82a" stop-opacity="0"/></radialGradient>
<linearGradient id="pap" x1="0" y1="0" x2="0" y2="1"><stop offset="0" stop-color="#ffffff"/><stop offset="1" stop-color="#ececec"/></linearGradient>
</defs>
<path d="M7.2,32.2h1.8v1.8h-1.8zM7.2,38.2h1.8v1.8h-1.8zM7.2,44.2h1.8v1.8h-1.8zM7.2,50.2h1.8v1.8h-1.8zM7.2,56.2h1.8v1.8h-1.8z" fill="#9c9c9c"/>
<rect x="12.1" y="25.3" width="42.6" height="42.2" rx="4" fill="#b5b5b5"/>
<path transform="translate(27.3,36) scale(1.12)" d="M0,0L0,15.5L3.6,12.1L6.3,18.4L9,17.2L6.4,11.1L11.2,11.1Z" fill="#fff" stroke="#111" stroke-width="1.0" stroke-linejoin="round"/>
<path d="M88.2,32.2h1.8v1.8h-1.8zM88.2,38.2h1.8v1.8h-1.8zM88.2,44.2h1.8v1.8h-1.8zM88.2,50.2h1.8v1.8h-1.8zM88.2,56.2h1.8v1.8h-1.8z" fill="#9c9c9c"/>
<rect x="101.3" y="32.5" width="24" height="27.2" rx="1" fill="url(#pap)" stroke="#9a9a9a" stroke-width="1"/>
<rect x="101.8" y="58.2" width="23" height="1.8" fill="#8a8a8a"/>
<circle cx="121.6" cy="37.3" r="6.5" fill="url(#glow)"/>
<path d="M147,35L170,33.5L172,47L150,49Z" fill="#f2f2f2" stroke="#9a9a9a" stroke-width="0.8"/>
<path d="M148.5,37.5H167M149,40H167" stroke="#bbb" stroke-width="1"/>
<path d="M144.3,36.5L149,36.5L149,56L144.8,56Z" fill="#8c8c8c"/>
<path d="M150,45L175.5,45L172,57.3L145.5,57.3Z" fill="url(#fold)" stroke="#5a7fb5" stroke-width="0.8"/>
<path d="M187,27h1v1h-1zM187,30h1v1h-1zM187,33h1v1h-1zM187,36h1v1h-1zM187,39h1v1h-1zM187,42h1v1h-1zM187,45h1v1h-1zM187,48h1v1h-1zM187,51h1v1h-1zM187,54h1v1h-1zM187,57h1v1h-1zM187,60h1v1h-1zM187,63h1v1h-1z" fill="#707070"/>
<rect x="203.7" y="33.3" width="24" height="25" rx="2.5" fill="url(#flop)" stroke="#2a2aa8" stroke-width="1.1"/>
<rect x="206.7" y="34.4" width="18.2" height="11.2" fill="url(#lab)"/>
<rect x="209.0" y="48" width="11.7" height="9.5" fill="#e4e4ee"/>
<rect x="211.2" y="50.8" width="1.7" height="3.7" fill="#1f3fb8"/>
<rect x="249.8" y="33.3" width="24" height="25" rx="2.5" fill="url(#flop)" stroke="#2a2aa8" stroke-width="1.1"/>
<rect x="252.8" y="34.4" width="18.2" height="11.2" fill="url(#lab)"/>
<rect x="255.10000000000002" y="48" width="11.7" height="9.5" fill="#e4e4ee"/>
<rect x="257.3" y="50.8" width="1.7" height="3.7" fill="#1f3fb8"/>
<path d="M259.6,51.5L273.5,33.6L277,36.4L263,54.3Z" fill="#f6b43a" stroke="#b75a10" stroke-width="0.8"/><path d="M273.5,33.6L275,31.8L278.4,34.6L277,36.4Z" fill="#e03a2a"/><path d="M259.6,51.5L260.3,55.2L263,54.3Z" fill="#333"/>
<path d="M289,27h1v1h-1zM289,30h1v1h-1zM289,33h1v1h-1zM289,36h1v1h-1zM289,39h1v1h-1zM289,42h1v1h-1zM289,45h1v1h-1zM289,48h1v1h-1zM289,51h1v1h-1zM289,54h1v1h-1zM289,57h1v1h-1zM289,60h1v1h-1zM289,63h1v1h-1z" fill="#707070"/>
<path d="M318,45L309.8,41.5M318,45L313,36.8M318,45L318,35.2M318,45L323,36.8M318,45L326.2,41.5" stroke="#000" stroke-width="6.4" stroke-linecap="round"/>
<path d="M306.3,46Q306.3,43.3 309,43.3H327.3Q330,43.3 330,46V55.6Q330,58 327.5,58H308.8Q306.3,58 306.3,55.6Z" fill="#000"/>
<path d="M318,45L309.8,41.5M318,45L313,36.8M318,45L318,35.2M318,45L323,36.8M318,45L326.2,41.5" stroke="#f5a62a" stroke-width="1.7" stroke-linecap="round"/>
<circle cx="309.8" cy="41.5" r="2.1" fill="#f5a62a"/>
<circle cx="313" cy="36.8" r="2.1" fill="#f5a62a"/>
<circle cx="318" cy="35.2" r="2.1" fill="#f5a62a"/>
<circle cx="323" cy="36.8" r="2.1" fill="#f5a62a"/>
<circle cx="326.2" cy="41.5" r="2.1" fill="#f5a62a"/>
<rect x="308.5" y="44.2" width="19.5" height="1.5" fill="#f5a62a"/>
<text x="318.1" y="56.4" font-size="12.5" font-weight="bold" fill="#fff" text-anchor="middle" textLength="18.6" lengthAdjust="spacingAndGlyphs">SVG</text>
<path d="M345,27h1v1h-1zM345,30h1v1h-1zM345,33h1v1h-1zM345,36h1v1h-1zM345,39h1v1h-1zM345,42h1v1h-1zM345,45h1v1h-1zM345,48h1v1h-1zM345,51h1v1h-1zM345,54h1v1h-1zM345,57h1v1h-1zM345,60h1v1h-1zM345,63h1v1h-1z" fill="#707070"/>
<rect x="365.5" y="32" width="17.5" height="16" fill="#f0f0f0" stroke="#b5b5b5" stroke-width="0.8"/>
<path d="M360.5,45.5Q360.5,43.5 362.5,43.5H386Q388,43.5 388,45.5V56.5Q388,58 386.5,58H362Q360.5,58 360.5,56.5Z" fill="#e6e6e6" stroke="#a0a0a0" stroke-width="0.9"/>
<rect x="361.5" y="55" width="26" height="3" fill="#bdbdbd"/>
<path d="M373,45L380.5,52.5" stroke="#8a8a8a" stroke-width="3" stroke-linecap="round"/>
<circle cx="369.5" cy="40.3" r="6.3" fill="url(#lens)" stroke="#e8e8e8" stroke-width="1.4"/>
<circle cx="369.5" cy="40.3" r="6.3" fill="none" stroke="#5a8ad8" stroke-width="0.7"/>
<path d="M403.2,32.2h1.8v1.8h-1.8zM403.2,38.2h1.8v1.8h-1.8zM403.2,44.2h1.8v1.8h-1.8zM403.2,50.2h1.8v1.8h-1.8zM403.2,56.2h1.8v1.8h-1.8z" fill="#9c9c9c"/>
<path d="M414.8,37.2L414.8,51.7L427.8,51.7L423.5,47.3Q428,42.3 433,42.6Q438.6,43.6 438.6,49Q438,55.5 427,58.2Q443.2,58 443.2,46Q443,34 432,34Q425,34.5 419.5,41.8Z" fill="url(#grn)" stroke="#17882f" stroke-width="0.9"/>
<path transform="translate(904.3,0) scale(-1,1)" d="M414.8,37.2L414.8,51.7L427.8,51.7L423.5,47.3Q428,42.3 433,42.6Q438.6,43.6 438.6,49Q438,55.5 427,58.2Q443.2,58 443.2,46Q443,34 432,34Q425,34.5 419.5,41.8Z" fill="url(#grn)" stroke="#17882f" stroke-width="0.9" opacity="0.45"/>
<path d="M502,27h1v1h-1zM502,30h1v1h-1zM502,33h1v1h-1zM502,36h1v1h-1zM502,39h1v1h-1zM502,42h1v1h-1zM502,45h1v1h-1zM502,48h1v1h-1zM502,51h1v1h-1zM502,54h1v1h-1zM502,57h1v1h-1zM502,60h1v1h-1zM502,63h1v1h-1z" fill="#707070"/>
<g opacity="0.55"><path d="M520,51L536,34.5L543,41L527,57.5Z" fill="#e05a5a" stroke="#a33" stroke-width="0.8"/><path d="M523.5,47.5L539.5,31.8L541.5,33.8L525.5,49.5Z" fill="#fff" opacity="0.9"/><path d="M520,51L524,47L531,53.5L527,57.5Z" fill="#fff" stroke="#999" stroke-width="0.8"/><ellipse cx="533" cy="58.5" rx="9" ry="1.2" fill="#bbb"/></g>
<path d="M558,27h1v1h-1zM558,30h1v1h-1zM558,33h1v1h-1zM558,36h1v1h-1zM558,39h1v1h-1zM558,42h1v1h-1zM558,45h1v1h-1zM558,48h1v1h-1zM558,51h1v1h-1zM558,54h1v1h-1zM558,57h1v1h-1zM558,60h1v1h-1zM558,63h1v1h-1z" fill="#707070"/>
<path d="M589.5,47L593.5,31.5L596,31.8L591.5,49.5M589.8,46L599.5,38.5L601,41L591,49" fill="#f4f4f4" stroke="#9a9a9a" stroke-width="0.9"/>
<ellipse cx="581.5" cy="48.5" rx="5" ry="3.2" transform="rotate(-15 581.5 48.5)" fill="none" stroke="#e06a6a" stroke-width="2.3"/>
<ellipse cx="589.5" cy="55.5" rx="2.6" ry="4.5" fill="none" stroke="#e06a6a" stroke-width="2.3"/>
<path d="M578.5,55.5V61M575.8,58.3H581.2" stroke="#222" stroke-width="1"/>
<path d="M618.7,30.7H639.5V57H618.7Z" fill="#f4f4f4" stroke="#c4c4c4" stroke-width="0.9"/>
<path d="M628,37.5H647.5V57.5L643,61.3H628Z" fill="url(#pap)" stroke="#b5b5b5" stroke-width="0.9"/>
<path d="M631,42.5H644M631,45.5H644M631,48.5H644M631,51.5H644" stroke="#cfcfcf" stroke-width="0.9"/>
<path d="M622.5,55.5V61M619.8,58.3H625.2" stroke="#222" stroke-width="1"/>
<rect x="665.5" y="33.3" width="26.6" height="26.8" rx="1.5" fill="#c8862a" stroke="#8c5a14" stroke-width="0.9"/>
<path d="M668.5,36H689V55.5L686,58.2H668.5Z" fill="#fbfbfb"/>
<rect x="673" y="30.5" width="12" height="5" rx="1.5" fill="#9a9a90" stroke="#6f6f66" stroke-width="0.7"/>
<path d="M672,40.3H686M672,43.1H686M672,45.9H686M672,48.7H684" stroke="#c9c9c9" stroke-width="0.9"/>
<path d="M686,58.2L689,55.5L685,55Z" fill="#9a9a9a"/>
<path d="M708.2,32.2h1.8v1.8h-1.8zM708.2,38.2h1.8v1.8h-1.8zM708.2,44.2h1.8v1.8h-1.8zM708.2,50.2h1.8v1.8h-1.8zM708.2,56.2h1.8v1.8h-1.8z" fill="#9c9c9c"/>
<rect x="723" y="55.9" width="22" height="1.4" fill="#f00000"/>
<g transform="translate(724.3,55.2) rotate(-44.5)"><path d="M0,0L5.6,-3.3H19.6V3.3H5.6Z" fill="#d8102a" stroke="#5a2a10" stroke-width="0.7"/><path d="M5.6,-3.3H19.6V-0.8H5.6Z" fill="#e85a30"/><path d="M0,0L5.6,-3.3V3.3Z" fill="#f2dcb8"/><path d="M0,0L2,-1.2V1.2Z" fill="#111"/><rect x="19.6" y="-3.3" width="2" height="6.6" fill="#b4b4b4" stroke="#5a2a10" stroke-width="0.5"/><path d="M21.6,-3.3H23.5A3.3,3.3 0 0 1 23.5,3.3H21.6Z" fill="#ea2a30" stroke="#5a2a10" stroke-width="0.6"/></g>
<rect x="765.8" y="35.8" width="28.8" height="21.6" fill="#000080" stroke="#00004a" stroke-width="0.8"/>
<path d="M769.5,54.5L790.5,39.5V54.5Z" fill="none" stroke="#e8e8ff" stroke-width="1.2" stroke-dasharray="2.2 1.6"/>
<rect x="805" y="25.3" width="43" height="42.2" rx="4" fill="#b5b5b5"/>
<circle cx="825.6" cy="45.6" r="12.6" fill="none" stroke="#000" stroke-width="2.2"/>
<path d="M812,59.6L839.8,31.6" stroke="#1010e0" stroke-width="1.1"/>
<path d="M854,27h1v1h-1zM854,30h1v1h-1zM854,33h1v1h-1zM854,36h1v1h-1zM854,39h1v1h-1zM854,42h1v1h-1zM854,45h1v1h-1zM854,48h1v1h-1zM854,51h1v1h-1zM854,54h1v1h-1zM854,57h1v1h-1zM854,60h1v1h-1zM854,63h1v1h-1z" fill="#707070"/>
<rect x="862" y="25.3" width="43" height="42.2" rx="4" fill="#b5b5b5"/>
<path d="M870.5,33.5h2v2h-2zM870.5,41.5h2v2h-2zM870.5,49.5h2v2h-2zM870.5,57.5h2v2h-2zM878.5,33.5h2v2h-2zM878.5,41.5h2v2h-2zM878.5,49.5h2v2h-2zM878.5,57.5h2v2h-2zM886.5,33.5h2v2h-2zM886.5,41.5h2v2h-2zM886.5,49.5h2v2h-2zM886.5,57.5h2v2h-2zM894.5,33.5h2v2h-2zM894.5,41.5h2v2h-2zM894.5,49.5h2v2h-2zM894.5,57.5h2v2h-2z" fill="#000"/>
<path d="M911,27h1v1h-1zM911,30h1v1h-1zM911,33h1v1h-1zM911,36h1v1h-1zM911,39h1v1h-1zM911,42h1v1h-1zM911,45h1v1h-1zM911,48h1v1h-1zM911,51h1v1h-1zM911,54h1v1h-1zM911,57h1v1h-1zM911,60h1v1h-1zM911,63h1v1h-1z" fill="#707070"/>
<rect x="918" y="25.5" width="43" height="41.5" fill="#f0b8b8" opacity="0.75"/>
<path d="M918.5,16V73M960.5,16V73M910,25.5H969M910,66.5H969" stroke="#f06060" stroke-width="1.8" opacity="0.75"/>
<g opacity="1.0"><path d="M943.0,49.5L951.5,58.0" stroke="#707070" stroke-width="3.4" stroke-linecap="round"/><circle cx="936.5" cy="42.5" r="10.6" fill="#e4e4e4" stroke="#c4c4c4" stroke-width="1"/><circle cx="936.5" cy="42.5" r="8.4" fill="url(#lensp)"/><path d="M932,42.5H941M936.5,38V47" stroke="#fff" stroke-width="2.6"/></g>
<g opacity="1.0"><path d="M988.5,48.7L997,57.2" stroke="#707070" stroke-width="3.4" stroke-linecap="round"/><circle cx="982" cy="41.7" r="10.6" fill="#e4e4e4" stroke="#c4c4c4" stroke-width="1"/><circle cx="982" cy="41.7" r="8.4" fill="url(#lens)"/><rect x="976.5" y="40.2" width="11" height="3" fill="#fff" stroke="#555" stroke-width="0.5"/></g>
<g opacity="1.0"><path d="M1034.6,48.7L1043.1,57.2" stroke="#707070" stroke-width="3.4" stroke-linecap="round"/><circle cx="1028.1" cy="41.7" r="10.6" fill="#e4e4e4" stroke="#c4c4c4" stroke-width="1"/><circle cx="1028.1" cy="41.7" r="8.4" fill="url(#lens)"/><path d="M1023,39.5V36.5H1026M1030.2,36.5H1033.2V39.5M1033.2,44V47H1030.2M1026,47H1023V44" stroke="#fff" stroke-width="1.6" fill="none"/></g>
<g opacity="0.55"><path d="M1080.7,48.7L1089.2,57.2" stroke="#707070" stroke-width="3.4" stroke-linecap="round"/><circle cx="1074.2" cy="41.7" r="10.6" fill="#e4e4e4" stroke="#c4c4c4" stroke-width="1"/><circle cx="1074.2" cy="41.7" r="8.4" fill="url(#lens)"/><path d="M1069,39.5V36.5H1072M1076.2,36.5H1079.2V39.5M1079.2,44V47H1076.2M1072,47H1069V44" stroke="#e04040" stroke-width="1.6" fill="none"/></g>
<g opacity="1.0"><path d="M1126.7,48.7L1135.2,57.2" stroke="#707070" stroke-width="3.4" stroke-linecap="round"/><circle cx="1120.2" cy="41.7" r="10.6" fill="#e4e4e4" stroke="#c4c4c4" stroke-width="1"/><circle cx="1120.2" cy="41.7" r="8.4" fill="url(#lens)"/><path d="M1114,41.7L1119.5,36.5V39.5H1126V44H1119.5V47Z" fill="#fff" stroke="#555" stroke-width="0.5"/></g>
<rect x="1154.3" y="30.7" width="27.3" height="17.6" fill="#fff" stroke="#6a94d4" stroke-width="1.2"/>
<g opacity="1.0"><path d="M1174.6,51.5L1183.1,60.0" stroke="#707070" stroke-width="3.4" stroke-linecap="round"/><circle cx="1168.1" cy="44.5" r="10.6" fill="#e4e4e4" stroke="#c4c4c4" stroke-width="1"/><circle cx="1168.1" cy="44.5" r="8.4" fill="url(#lens)"/></g>
<g opacity="1.0"><path d="M1219.5,49.7L1228,58.2" stroke="#707070" stroke-width="3.4" stroke-linecap="round"/><circle cx="1213" cy="42.7" r="10.6" fill="#e4e4e4" stroke="#c4c4c4" stroke-width="1"/><circle cx="1213" cy="42.7" r="8.4" fill="url(#lens)"/><path d="M1213,31.5V54M1201.5,42.7H1224.5" stroke="#fff" stroke-width="1.5"/><path d="M1213,30.5L1210,34.5H1216ZM1213,55L1210,51H1216ZM1200.5,42.7L1204.5,39.7V45.7ZM1225.5,42.7L1221.5,39.7V45.7Z" fill="#fff" stroke="#6a94d4" stroke-width="0.6"/></g>
<circle cx="950" cy="55" r="35.5" fill="none" stroke="#a9bed3" stroke-width="7" opacity="0.5"/><circle cx="950" cy="55" r="35.5" fill="none" stroke="#9fb6cc" stroke-width="2.5" opacity="0.35"/>
<path transform="translate(950.5,55.5) scale(1.45)" d="M0,0L0,15.5L3.6,12.1L6.3,18.4L9,17.2L6.4,11.1L11.2,11.1Z" fill="#fff" stroke="#000" stroke-width="0.9" stroke-linejoin="round"/>
<path d="M7.2,77.2h1.8v1.8h-1.8zM7.2,83.2h1.8v1.8h-1.8zM7.2,89.2h1.8v1.8h-1.8zM7.2,95.2h1.8v1.8h-1.8z" fill="#9c9c9c"/>
<rect x="14.8" y="72.8" width="43.4" height="31.5" rx="6" fill="url(#btn)" stroke="#8f8f8f" stroke-width="1.5"/>
<path transform="translate(31,79) scale(0.95)" d="M0,0L0,15.5L3.6,12.1L6.3,18.4L9,17.2L6.4,11.1L11.2,11.1Z" fill="#fff" stroke="#222" stroke-width="1.0" stroke-linejoin="round"/>
<path d="M67,71h1v1h-1zM67,74h1v1h-1zM67,77h1v1h-1zM67,80h1v1h-1zM67,83h1v1h-1zM67,86h1v1h-1zM67,89h1v1h-1zM67,92h1v1h-1zM67,95h1v1h-1zM67,98h1v1h-1zM67,101h1v1h-1zM67,104h1v1h-1z" fill="#707070"/>
<path d="M8.5,131.5H14.5M11.5,128.5V134.5M22.5,140.5H28.5M25.5,137.5V143.5M9.3,146.8H15.3M12.3,143.8V149.8" stroke="#000" stroke-width="1.2"/>
<path d="M26.8,151.6L31.8,146.6V151.6Z" fill="#000"/>
<path d="M62,151.6L67,146.6V151.6Z" fill="#000"/>
<path d="M41.7,144.6L65,133.9" stroke="#222" stroke-width="1.2" fill="none"/>
<path d="M7.7,182.7A20,20 0 0 1 27.1,163.6" stroke="#222" stroke-width="1.2" fill="none"/>
<circle cx="52.4" cy="173.5" r="10" stroke="#222" stroke-width="1.2" fill="none"/>
<path d="M26.8,186.6L31.8,181.6V186.6Z" fill="#000"/>
<path d="M62,186.6L67,181.6V186.6Z" fill="#000"/>
<ellipse cx="17.9" cy="208.9" rx="12.2" ry="5.2" transform="rotate(-42 17.9 208.9)" stroke="#222" stroke-width="1.2" fill="none"/>
<path d="M41.7,201.2C41.5,207 45,218.5 48.9,218C52.5,217.5 54,207 56.5,203.5C58.5,200 62.5,197.5 63.8,203C64.8,207 64,211.5 61.5,211C57.5,210.3 48,199.5 44,199.3C42.5,199.2 41.7,200 41.7,201.2Z" stroke="#222" stroke-width="1.2" fill="none"/>
<path d="M26.8,221.6L31.8,216.6V221.6Z" fill="#000"/>
<path d="M62,221.6L67,216.6V221.6Z" fill="#000"/>
<path d="M12.8,239Q8.2,239.5 8.2,243.5Q8.5,247.5 13,247.6H27.5" stroke="#222" stroke-width="1.2" fill="none"/>
<path d="M44,232H50.5L54,238.3L50.5,244.6H44L40.5,238.3Z" stroke="#222" stroke-width="1.2" fill="none"/>
<path d="M55.5,245.4L60.6,236.5L65.7,245.4Z" stroke="#222" stroke-width="1.2" fill="none"/>
<rect x="41.2" y="248.7" width="14.6" height="7.2" stroke="#222" stroke-width="1.2" fill="none"/>
<path d="M26.8,256.6L31.8,251.60000000000002V256.6Z" fill="#000"/>
<path d="M62,256.6L67,251.60000000000002V256.6Z" fill="#000"/>
<clipPath id="hc"><path d="M7.5,286.5V278.5L13,272.3H28.3V286.5Z"/></clipPath>
<g clip-path="url(#hc)"><path d="M-8,290L12,270M-5,290L15,270M-2,290L18,270M1,290L21,270M4,290L24,270M7,290L27,270M10,290L30,270M13,290L33,270M16,290L36,270M19,290L39,270M22,290L42,270M25,290L45,270M28,290L48,270M31,290L51,270M34,290L54,270M37,290L57,270" stroke="#888" stroke-width="0.8"/></g>
<path d="M7.5,286.5V278.5L13,272.3H28.3V286.5Z" stroke="#222" stroke-width="1.2" fill="none"/>
<circle cx="20.6" cy="279.5" r="3" fill="#f2f2f2" stroke="#222" stroke-width="1.2"/>
<path d="M26.8,291.6L31.8,286.6V291.6Z" fill="#000"/>
<text x="8" y="330.8" font-family="Liberation Serif" font-size="27.5" fill="#111" textLength="20" lengthAdjust="spacingAndGlyphs">A</text>
<path d="M43.6,314.5V329.7M61.5,314.5V329.7M43.6,316.7H61.5" stroke="#222" stroke-width="1.3"/><path d="M43.8,316.7L47.6,314.7V318.7ZM61.3,316.7L57.5,314.7V318.7Z" fill="#222"/>
<path d="M62,334.6L67,329.6V334.6Z" fill="#000"/>
<rect x="7.6" y="349" width="20.6" height="15.8" fill="#fff" stroke="#111" stroke-width="1.5"/>
<path d="M9.6,362.8V359.2L13,355.8L16,358.5L20,354L26.2,359.5V362.8Z" fill="#000"/><circle cx="24.6" cy="352.5" r="1.5" fill="#000"/>
<path d="M5.4,393.1V412.4H24.2Z" fill="#fff" stroke="#111" stroke-width="1.2"/><path d="M9.6,403.4V408.5H14.6Z" fill="#f2f2f2" stroke="#111" stroke-width="1.1"/>
<path d="M10.3,389.4L18.5,397.4" stroke="#c8201a" stroke-width="3" stroke-linecap="round"/><path d="M18.5,397.4L20.3,399.1" stroke="#333" stroke-width="1.3"/>
<path d="M25.9,387.5V390M25.9,390L23.3,405M25.9,390L28.6,405" stroke="#222" stroke-width="1.2" fill="none"/><circle cx="25.9" cy="390.5" r="1.2" fill="#222"/>
<path d="M26.8,412.6L31.8,407.6V412.6Z" fill="#000"/>
<rect x="41.6" y="396" width="23.4" height="7.4" rx="1.3" fill="#fff" stroke="#333" stroke-width="1.1"/>
<path d="M44,396V398.3M46.3,396V397.6M48.6,396V398.3M50.9,396V397.6M53.2,396V399M55.5,396V397.6M57.8,396V398.3M60.1,396V397.6M62.4,396V398.3" stroke="#333" stroke-width="0.8"/>
<rect x="7.6" y="425.6" width="17.2" height="12" fill="#f3eed8" stroke="#aaa" stroke-width="0.9"/>
<circle cx="21.9" cy="437.3" r="7.3" fill="#f1ecd4" fill-opacity="0.9" stroke="#999" stroke-width="1"/>
<circle cx="7.8" cy="438" r="1.6" fill="#f07070"/>
<path d="M41.8,433.8L58.9,423.8" stroke="#f02a2a" stroke-width="1.4"/>
<path transform="translate(51.5,428.5) scale(0.95)" d="M0,0L0,15.5L3.6,12.1L6.3,18.4L9,17.2L6.4,11.1L11.2,11.1Z" fill="#fff" stroke="#888" stroke-width="1"/>
<path d="M62,447.6L67,442.6V447.6Z" fill="#000"/>
<path d="M7.4,473.9L19.9,467L28.4,473.2L15.6,480.3ZM7.4,473.9V485L15.6,488.8L28.4,484.6V473.2M15.6,480.3V488.8" fill="none" stroke="#222" stroke-width="1.2" stroke-linejoin="round"/>
<path d="M26.8,490.6L31.8,485.6V490.6Z" fill="#000"/>
<g transform="translate(1185.1,142.7) scale(1.0)"><path d="M-7.8,0.6Q-4.2,-4.9 0.4,-4.9Q5,-4.9 7.8,0.4Q4.2,4.7 0,4.7Q-4.6,4.7 -7.8,0.6Z" fill="#000"/><path d="M-5.6,0.6Q-3,-3.3 0.3,-3.3Q3.8,-3.3 5.8,0.4Q3,3.4 0,3.4Q-3.4,3.4 -5.6,0.6Z" fill="#fff"/><circle cx="0" cy="0.2" r="3.1" fill="#000"/><circle cx="-0.9" cy="-0.8" r="0.9" fill="#fff" opacity="0.8"/></g>
<g transform="translate(1244.9,142.7) scale(1.0)"><path d="M-7.8,0.6Q-4.2,-4.9 0.4,-4.9Q5,-4.9 7.8,0.4Q4.2,4.7 0,4.7Q-4.6,4.7 -7.8,0.6Z" fill="#b0b0b0"/><path d="M-5.6,0.6Q-3,-3.3 0.3,-3.3Q3.8,-3.3 5.8,0.4Q3,3.4 0,3.4Q-3.4,3.4 -5.6,0.6Z" fill="#fff"/><circle cx="0" cy="0.2" r="3.1" fill="#b0b0b0"/><circle cx="-0.9" cy="-0.8" r="0.9" fill="#fff" opacity="0.8"/></g>
<path d="M1304.5,137V148.5M1298.8,142.8H1310.2" stroke="#e00000" stroke-width="3"/>
<path d="M1358.7,142.8H1370.3" stroke="#e00000" stroke-width="3"/>
<path d="M1421.15,147.59L1431.26,138.17L1429.08,135.83L1418.97,145.24Z" fill="#e0a83a" stroke="#9a6a1a" stroke-width="0.6"/>
<path d="M1431.26,138.17L1433.09,136.47L1430.91,134.13L1429.08,135.83Z" fill="#e8403a"/>
<path d="M1417.50,148.80L1421.15,147.59L1418.97,145.24Z" fill="#5a4a2a"/>
<g transform="translate(1422.6,166.8) scale(1.0)"><path d="M-7.8,0.6Q-4.2,-4.9 0.4,-4.9Q5,-4.9 7.8,0.4Q4.2,4.7 0,4.7Q-4.6,4.7 -7.8,0.6Z" fill="#000"/><path d="M-5.6,0.6Q-3,-3.3 0.3,-3.3Q3.8,-3.3 5.8,0.4Q3,3.4 0,3.4Q-3.4,3.4 -5.6,0.6Z" fill="#fff"/><circle cx="0" cy="0.2" r="3.1" fill="#000"/><circle cx="-0.9" cy="-0.8" r="0.9" fill="#fff" opacity="0.8"/></g>
<path d="M1441.1,167.3V164.3A3.6,3.6 0 0 1 1448.3,164.3V167.3" fill="none" stroke="#b5b5b5" stroke-width="1.6"/><rect x="1439.3" y="166.8" width="10.8" height="7" rx="0.8" fill="#b5b5b5"/>
<g transform="translate(1422.6,186.9) scale(1.0)"><path d="M-7.8,0.6Q-4.2,-4.9 0.4,-4.9Q5,-4.9 7.8,0.4Q4.2,4.7 0,4.7Q-4.6,4.7 -7.8,0.6Z" fill="#000"/><path d="M-5.6,0.6Q-3,-3.3 0.3,-3.3Q3.8,-3.3 5.8,0.4Q3,3.4 0,3.4Q-3.4,3.4 -5.6,0.6Z" fill="#fff"/><circle cx="0" cy="0.2" r="3.1" fill="#000"/><circle cx="-0.9" cy="-0.8" r="0.9" fill="#fff" opacity="0.8"/></g>
<path d="M1441.1,187.4V184.4A3.6,3.6 0 0 1 1448.3,184.4V187.4" fill="none" stroke="#b5b5b5" stroke-width="1.6"/><rect x="1439.3" y="186.9" width="10.8" height="7" rx="0.8" fill="#b5b5b5"/>
<g transform="translate(1422.6,206.9) scale(1.0)"><path d="M-7.8,0.6Q-4.2,-4.9 0.4,-4.9Q5,-4.9 7.8,0.4Q4.2,4.7 0,4.7Q-4.6,4.7 -7.8,0.6Z" fill="#000"/><path d="M-5.6,0.6Q-3,-3.3 0.3,-3.3Q3.8,-3.3 5.8,0.4Q3,3.4 0,3.4Q-3.4,3.4 -5.6,0.6Z" fill="#fff"/><circle cx="0" cy="0.2" r="3.1" fill="#000"/><circle cx="-0.9" cy="-0.8" r="0.9" fill="#fff" opacity="0.8"/></g>
<path d="M1441.1,207.4V204.4A3.6,3.6 0 0 1 1448.3,204.4V207.4" fill="none" stroke="#b5b5b5" stroke-width="1.6"/><rect x="1439.3" y="206.9" width="10.8" height="7" rx="0.8" fill="#b5b5b5"/>
<g transform="translate(1422.6,227.0) scale(1.0)"><path d="M-7.8,0.6Q-4.2,-4.9 0.4,-4.9Q5,-4.9 7.8,0.4Q4.2,4.7 0,4.7Q-4.6,4.7 -7.8,0.6Z" fill="#000"/><path d="M-5.6,0.6Q-3,-3.3 0.3,-3.3Q3.8,-3.3 5.8,0.4Q3,3.4 0,3.4Q-3.4,3.4 -5.6,0.6Z" fill="#fff"/><circle cx="0" cy="0.2" r="3.1" fill="#000"/><circle cx="-0.9" cy="-0.8" r="0.9" fill="#fff" opacity="0.8"/></g>
<path d="M1441.1,227.5V224.5A3.6,3.6 0 0 1 1448.3,224.5V227.5" fill="none" stroke="#b5b5b5" stroke-width="1.6"/><rect x="1439.3" y="227.0" width="10.8" height="7" rx="0.8" fill="#b5b5b5"/>
<g transform="translate(1422.6,247.0) scale(1.0)"><path d="M-7.8,0.6Q-4.2,-4.9 0.4,-4.9Q5,-4.9 7.8,0.4Q4.2,4.7 0,4.7Q-4.6,4.7 -7.8,0.6Z" fill="#000"/><path d="M-5.6,0.6Q-3,-3.3 0.3,-3.3Q3.8,-3.3 5.8,0.4Q3,3.4 0,3.4Q-3.4,3.4 -5.6,0.6Z" fill="#fff"/><circle cx="0" cy="0.2" r="3.1" fill="#000"/><circle cx="-0.9" cy="-0.8" r="0.9" fill="#fff" opacity="0.8"/></g>
<path d="M1441.1,247.5V244.5A3.6,3.6 0 0 1 1448.3,244.5V247.5" fill="none" stroke="#b5b5b5" stroke-width="1.6"/><rect x="1439.3" y="247.0" width="10.8" height="7" rx="0.8" fill="#b5b5b5"/>
<path d="M1398.10,192.41L1407.35,183.64L1405.42,181.60L1396.18,190.38Z" fill="#e0a83a" stroke="#9a6a1a" stroke-width="0.6"/>
<path d="M1407.35,183.64L1409.16,181.92L1407.24,179.88L1405.42,181.60Z" fill="#e8403a"/>
<path d="M1394.60,193.80L1398.10,192.41L1396.18,190.38Z" fill="#5a4a2a"/>
<rect x="1461.8" y="116.3" width="1.6" height="1.6" fill="#9c9c9c"/>
<rect x="1466.9" y="116.3" width="1.6" height="1.6" fill="#9c9c9c"/>
<rect x="1472.0" y="116.3" width="1.6" height="1.6" fill="#9c9c9c"/>
<rect x="1477.1" y="116.3" width="1.6" height="1.6" fill="#9c9c9c"/>
<rect x="1482.2" y="116.3" width="1.6" height="1.6" fill="#9c9c9c"/>
<rect x="1456.3" y="120.2" width="42.6" height="42" rx="5" fill="#b5b5b5"/>
<rect x="1463.6" y="127.7" width="27.2" height="27.2" fill="#fff" stroke="#333" stroke-width="0.9"/><rect x="1463.3" y="127.4" width="27.8" height="4.3" fill="#000"/><rect x="1464.5" y="128.1" width="2.8" height="2.8" fill="#fff"/><path d="M1471,148L1478,145V135L1471,138Z" fill="#bbb" stroke="#555" stroke-width="0.8"/><path d="M1474,146.5L1484,142V132L1474,136.5Z" fill="#fff" stroke="#555" stroke-width="0.8"/><path d="M1477,143.5L1481,135.5M1477,143.5H1482" stroke="#e03030" stroke-width="0.9"/>
<rect x="1463.6" y="174.2" width="27.2" height="27.2" fill="#fff" stroke="#333" stroke-width="0.9"/><rect x="1463.3" y="173.9" width="27.8" height="4.3" fill="#000"/><rect x="1464.5" y="174.6" width="2.8" height="2.8" fill="#fff"/><rect x="1468.3" y="184.5" width="13.8" height="8.6" fill="#f0e8c0" stroke="#888" stroke-width="0.8"/><circle cx="1480.5" cy="192.5" r="5" fill="#f3ecd0" fill-opacity="0.85" stroke="#888" stroke-width="0.8"/>
<rect x="1463.6" y="220.6" width="27.2" height="27.2" fill="#fff" stroke="#333" stroke-width="0.9"/><rect x="1463.3" y="220.3" width="27.8" height="4.3" fill="#000"/><rect x="1464.5" y="221.0" width="2.8" height="2.8" fill="#fff"/><rect x="1468.5" y="229" width="17.5" height="12" rx="2" fill="#f0f4fa" stroke="#a8bcd8" stroke-width="0.9"/>
<path d="M1457,261.5h1v1h-1zM1460,261.5h1v1h-1zM1463,261.5h1v1h-1zM1466,261.5h1v1h-1zM1469,261.5h1v1h-1zM1472,261.5h1v1h-1zM1475,261.5h1v1h-1zM1478,261.5h1v1h-1zM1481,261.5h1v1h-1zM1484,261.5h1v1h-1zM1487,261.5h1v1h-1zM1490,261.5h1v1h-1zM1493,261.5h1v1h-1zM1496,261.5h1v1h-1z" fill="#6a6a6a"/>
<rect x="1463.6" y="276.3" width="27.2" height="27.2" fill="#fff" stroke="#333" stroke-width="0.9"/><rect x="1463.3" y="276.0" width="27.8" height="4.3" fill="#000"/><rect x="1464.5" y="276.7" width="2.8" height="2.8" fill="#fff"/><path d="M1467.7,285.7h3.3v2.6h-3.3zM1467.7,291.6h3.3v2.6h-3.3zM1467.7,297.5h3.3v2.6h-3.3z" fill="#000"/><path d="M1473.5,285.5h13v3h-13zM1473.5,291.4h13v3h-13zM1473.5,297.3h13v3h-13z" fill="#fff" stroke="#333" stroke-width="0.8"/>
<rect x="1463.6" y="322.5" width="27.2" height="27.2" fill="#fff" stroke="#333" stroke-width="0.9"/><rect x="1463.3" y="322.2" width="27.8" height="4.3" fill="#000"/><rect x="1464.5" y="322.9" width="2.8" height="2.8" fill="#fff"/><path d="M1469.5,331.5H1484.5L1479,338.5V346.5L1476,345V338.5Z" fill="#aaa" stroke="#555" stroke-width="0.8"/>
<rect x="1463.6" y="368.1" width="27.2" height="27.2" fill="#fff" stroke="#333" stroke-width="0.9"/><rect x="1463.3" y="367.8" width="27.8" height="4.3" fill="#000"/><rect x="1464.5" y="368.5" width="2.8" height="2.8" fill="#fff"/><path d="M1469.8,374.5V387.5L1476,384V378Z" fill="#fff" stroke="#555" stroke-width="0.9"/><rect x="1476" y="377.8" width="8.5" height="6.5" fill="#999" stroke="#555" stroke-width="0.7"/><path d="M1468,381H1487" stroke="#f08a8a" stroke-width="0.8" stroke-dasharray="1.5 1"/>
<path d="M1457,261.5h1v1h-1zM1460,261.5h1v1h-1zM1463,261.5h1v1h-1zM1466,261.5h1v1h-1zM1469,261.5h1v1h-1zM1472,261.5h1v1h-1zM1475,261.5h1v1h-1zM1478,261.5h1v1h-1zM1481,261.5h1v1h-1zM1484,261.5h1v1h-1zM1487,261.5h1v1h-1zM1490,261.5h1v1h-1zM1493,261.5h1v1h-1zM1496,261.5h1v1h-1zM1457,409.4h1v1h-1zM1460,409.4h1v1h-1zM1463,409.4h1v1h-1zM1466,409.4h1v1h-1zM1469,409.4h1v1h-1zM1472,409.4h1v1h-1zM1475,409.4h1v1h-1zM1478,409.4h1v1h-1zM1481,409.4h1v1h-1zM1484,409.4h1v1h-1zM1487,409.4h1v1h-1zM1490,409.4h1v1h-1zM1493,409.4h1v1h-1zM1496,409.4h1v1h-1z" fill="#6a6a6a"/>
<rect x="1456.4" y="417.1" width="42.5" height="42.5" rx="5" fill="#b5b5b5"/>
<rect x="1463.6" y="424.2" width="27.2" height="27.2" fill="#fff" stroke="#333" stroke-width="0.9"/><rect x="1463.3" y="423.9" width="27.8" height="4.3" fill="#000"/><rect x="1464.5" y="424.6" width="2.8" height="2.8" fill="#fff"/><path d="M1466,433.5H1477M1466,436.5H1478M1466,439.5H1478M1466,442.5H1479" stroke="#888" stroke-width="0.7"/><path d="M1463.6,446.5H1490.8" stroke="#333" stroke-width="0.8"/><path d="M1466,449H1469M1472,449H1488" stroke="#555" stroke-width="0.8"/>
<rect x="1463.6" y="471.3" width="27.2" height="27.2" fill="#fff" stroke="#333" stroke-width="0.9"/><rect x="1463.3" y="471.0" width="27.8" height="4.3" fill="#000"/><rect x="1464.5" y="471.7" width="2.8" height="2.8" fill="#fff"/><rect x="1471" y="480.5" width="12.5" height="14" rx="1" fill="#c8862a"/><rect x="1473" y="482.5" width="8.5" height="10.5" fill="#fafafa"/><rect x="1474.5" y="479.3" width="5.5" height="2.5" fill="#999"/>
<circle cx="102.1" cy="118.7" r="5.5" fill="#f2f2f2" stroke="#34498f" stroke-width="2"/><path d="M99,118.5H105M102,115.5V121.5" stroke="#bbb" stroke-width="0.6"/><path d="M102.8,119.3L106.2,122.8" stroke="#f0a020" stroke-width="2.2" stroke-linecap="round"/><circle cx="107" cy="123.6" r="1" fill="#e06060"/>
</svg></body></html>
